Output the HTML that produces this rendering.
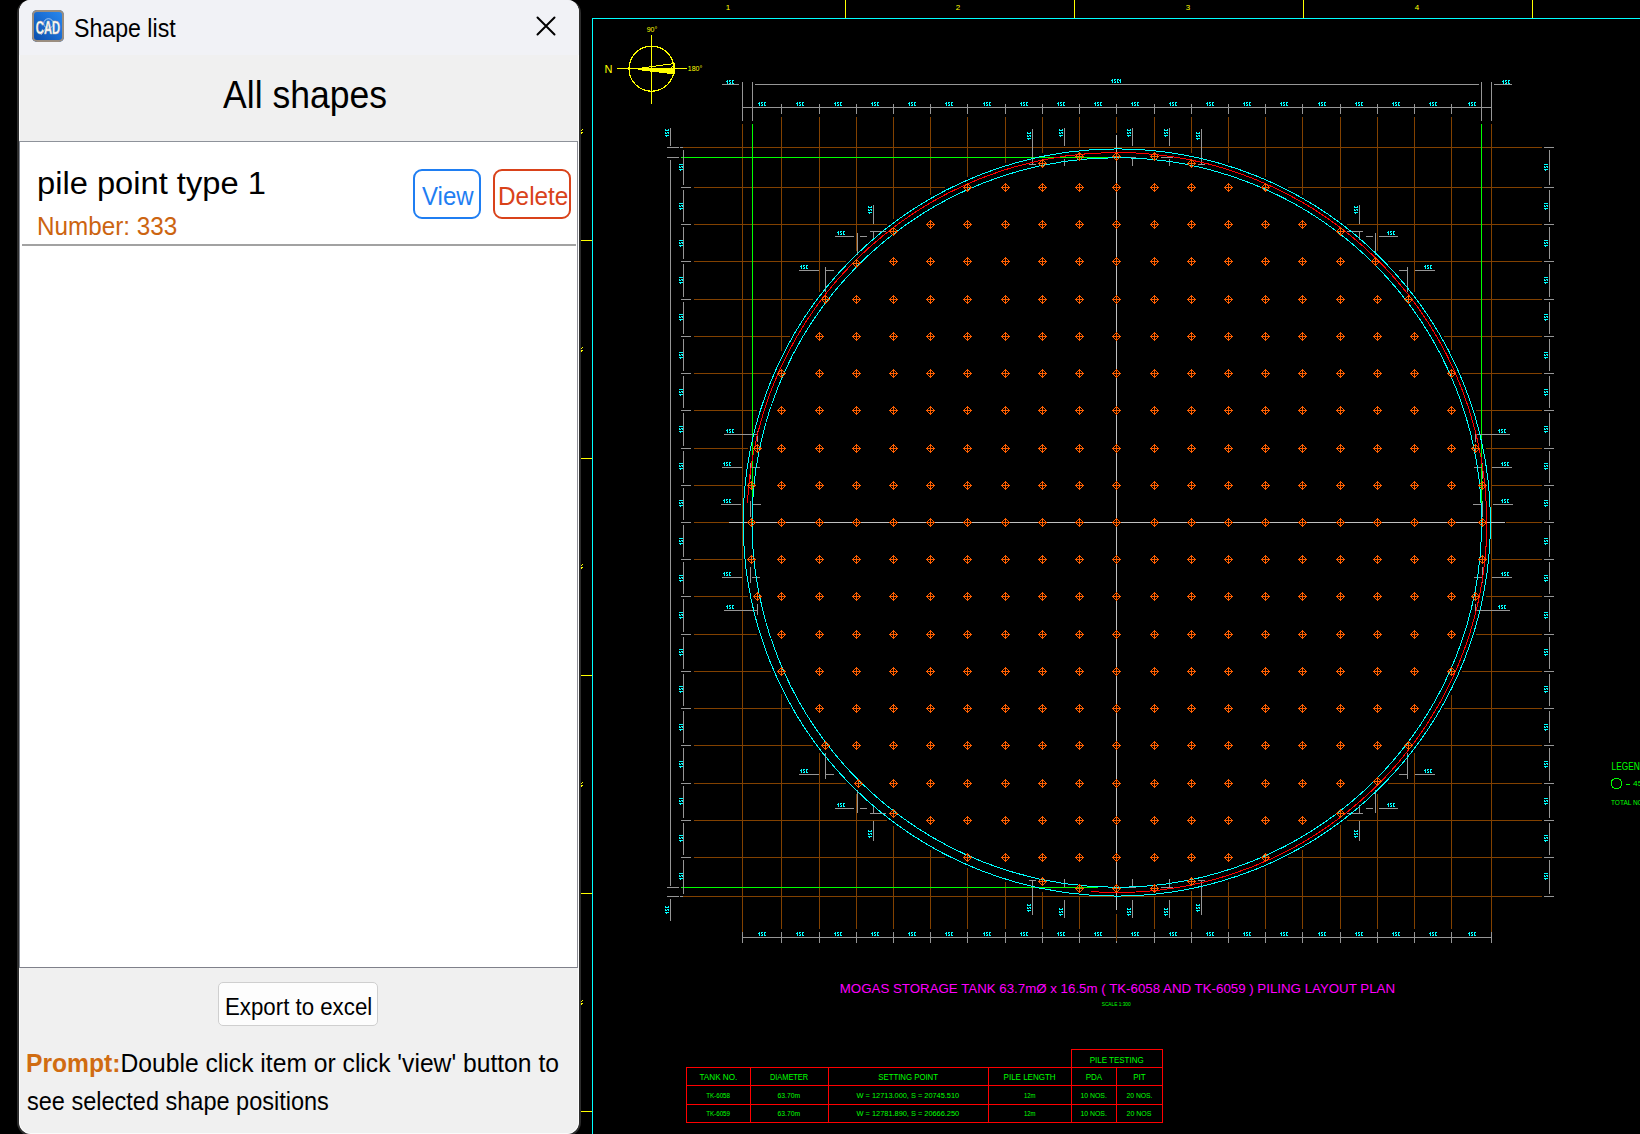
<!DOCTYPE html>
<html><head><meta charset="utf-8">
<style>
html,body{margin:0;padding:0;width:1640px;height:1134px;overflow:hidden;background:#000;}
body{position:relative;font-family:"Liberation Sans",sans-serif;}
#cad{position:absolute;left:0;top:0;}
#cad text{font-family:"Liberation Sans",sans-serif;}
.panel{position:absolute;left:17px;top:0px;width:560px;height:1134px;border:2px solid #2e2e2e;border-top:0;border-radius:13px 13px 14px 14px;background:#f0f0f0;overflow:hidden;}
.inner{position:absolute;left:0;top:0;right:0;bottom:0;border:1px solid #fbfbfb;border-top:0;border-radius:11px 11px 12px 12px;}
.titlebar{position:absolute;left:0;top:0;width:560px;height:55px;background:#f1f2f6;}
.icon{position:absolute;left:13px;top:9px;width:32px;height:32px;border-radius:5px;background:linear-gradient(45deg,#0a4aa6,#1d72d8 60%,#2b8cf2);box-shadow:inset 0 0 0 2px #9b8e80;}
.abs{position:absolute;white-space:pre;line-height:1;}
.list{position:absolute;left:0px;top:140px;width:557px;height:825px;background:#fff;border-left:1px solid #868b95;border-top:1px solid #8e929a;border-right:1px solid #8e8f96;border-bottom:1px solid #7f808a;}
.btn{position:absolute;box-sizing:border-box;border:2px solid;border-radius:9px;}
</style></head><body>
<svg id="cad" width="1640" height="1134" viewBox="0 0 1640 1134" shape-rendering="crispEdges">
<line x1="845.5" y1="0.0" x2="845.5" y2="19.0" stroke="#ffff00" stroke-width="1"/>
<line x1="1074.5" y1="0.0" x2="1074.5" y2="19.0" stroke="#ffff00" stroke-width="1"/>
<line x1="1303.5" y1="0.0" x2="1303.5" y2="19.0" stroke="#ffff00" stroke-width="1"/>
<line x1="1532.5" y1="0.0" x2="1532.5" y2="19.0" stroke="#ffff00" stroke-width="1"/>
<text x="728.0" y="10.0" fill="#ffff00" font-size="8" text-anchor="middle" >1</text>
<text x="958.0" y="10.0" fill="#ffff00" font-size="8" text-anchor="middle" >2</text>
<text x="1188.0" y="10.0" fill="#ffff00" font-size="8" text-anchor="middle" >3</text>
<text x="1417.0" y="10.0" fill="#ffff00" font-size="8" text-anchor="middle" >4</text>
<line x1="579.0" y1="240.5" x2="593.0" y2="240.5" stroke="#ffff00" stroke-width="1"/>
<path d="M580 129h1v1h-1zM582 129h1v1h-1zM580 130h1v1h-1zM581 130h1v1h-1zM580 132h1v1h-1zM581 132h1v1h-1zM582 132h1v1h-1zM581 133h1v1h-1z" fill="#ffff00"/>
<line x1="579.0" y1="458.5" x2="593.0" y2="458.5" stroke="#ffff00" stroke-width="1"/>
<path d="M580 347h1v1h-1zM582 347h1v1h-1zM580 348h1v1h-1zM581 348h1v1h-1zM580 350h1v1h-1zM581 350h1v1h-1zM582 350h1v1h-1zM581 351h1v1h-1z" fill="#ffff00"/>
<line x1="579.0" y1="675.5" x2="593.0" y2="675.5" stroke="#ffff00" stroke-width="1"/>
<path d="M580 564h1v1h-1zM582 564h1v1h-1zM580 565h1v1h-1zM581 565h1v1h-1zM580 567h1v1h-1zM581 567h1v1h-1zM582 567h1v1h-1zM581 568h1v1h-1z" fill="#ffff00"/>
<line x1="579.0" y1="893.5" x2="593.0" y2="893.5" stroke="#ffff00" stroke-width="1"/>
<path d="M580 782h1v1h-1zM582 782h1v1h-1zM580 783h1v1h-1zM581 783h1v1h-1zM580 785h1v1h-1zM581 785h1v1h-1zM582 785h1v1h-1zM581 786h1v1h-1z" fill="#ffff00"/>
<line x1="579.0" y1="1111.5" x2="593.0" y2="1111.5" stroke="#ffff00" stroke-width="1"/>
<path d="M580 1000h1v1h-1zM582 1000h1v1h-1zM580 1001h1v1h-1zM581 1001h1v1h-1zM580 1003h1v1h-1zM581 1003h1v1h-1zM582 1003h1v1h-1zM581 1004h1v1h-1z" fill="#ffff00"/>
<line x1="592.0" y1="18.5" x2="1641.0" y2="18.5" stroke="#00ffff" stroke-width="1"/>
<line x1="592.5" y1="18.0" x2="592.5" y2="1135.0" stroke="#00ffff" stroke-width="1"/>
<circle cx="651.5" cy="68.7" r="22.5" fill="none" stroke="#ffff00" stroke-width="1.2"/>
<line x1="651.5" y1="35.0" x2="651.5" y2="104.0" stroke="#ffff00" stroke-width="1"/>
<line x1="617.0" y1="68.5" x2="687.0" y2="68.5" stroke="#ffff00" stroke-width="1"/>
<polygon points="638,68 675,68 675,74.5 638,70" fill="#ffff00"/>
<polyline points="638,68.5 674.5,63.5 674.5,74" fill="none" stroke="#ffff00" stroke-width="1"/>
<polyline points="674.5,64 671,68.5 674.5,72" fill="none" stroke="#ffff00" stroke-width="1"/>
<text x="608.5" y="73.0" fill="#ffff00" font-size="11" text-anchor="middle" >N</text>
<text x="652.0" y="31.5" fill="#ffff00" font-size="7" text-anchor="middle" >90°</text>
<text x="695.0" y="71.0" fill="#ffff00" font-size="7" text-anchor="middle" >180°</text>
<line x1="781.5" y1="117.0" x2="781.5" y2="929.0" stroke="#824100" stroke-width="1"/>
<line x1="819.5" y1="117.0" x2="819.5" y2="929.0" stroke="#824100" stroke-width="1"/>
<line x1="856.5" y1="117.0" x2="856.5" y2="929.0" stroke="#824100" stroke-width="1"/>
<line x1="893.5" y1="117.0" x2="893.5" y2="929.0" stroke="#824100" stroke-width="1"/>
<line x1="930.5" y1="117.0" x2="930.5" y2="929.0" stroke="#824100" stroke-width="1"/>
<line x1="967.5" y1="117.0" x2="967.5" y2="929.0" stroke="#824100" stroke-width="1"/>
<line x1="1005.5" y1="117.0" x2="1005.5" y2="929.0" stroke="#824100" stroke-width="1"/>
<line x1="1042.5" y1="117.0" x2="1042.5" y2="929.0" stroke="#824100" stroke-width="1"/>
<line x1="1079.5" y1="117.0" x2="1079.5" y2="929.0" stroke="#824100" stroke-width="1"/>
<line x1="1154.5" y1="117.0" x2="1154.5" y2="929.0" stroke="#824100" stroke-width="1"/>
<line x1="1191.5" y1="117.0" x2="1191.5" y2="929.0" stroke="#824100" stroke-width="1"/>
<line x1="1228.5" y1="117.0" x2="1228.5" y2="929.0" stroke="#824100" stroke-width="1"/>
<line x1="1265.5" y1="117.0" x2="1265.5" y2="929.0" stroke="#824100" stroke-width="1"/>
<line x1="1302.5" y1="117.0" x2="1302.5" y2="929.0" stroke="#824100" stroke-width="1"/>
<line x1="1340.5" y1="117.0" x2="1340.5" y2="929.0" stroke="#824100" stroke-width="1"/>
<line x1="1377.5" y1="117.0" x2="1377.5" y2="929.0" stroke="#824100" stroke-width="1"/>
<line x1="1414.5" y1="117.0" x2="1414.5" y2="929.0" stroke="#824100" stroke-width="1"/>
<line x1="1451.5" y1="117.0" x2="1451.5" y2="929.0" stroke="#824100" stroke-width="1"/>
<line x1="694.0" y1="187.5" x2="1542.0" y2="187.5" stroke="#824100" stroke-width="1"/>
<line x1="694.0" y1="224.5" x2="1542.0" y2="224.5" stroke="#824100" stroke-width="1"/>
<line x1="694.0" y1="261.5" x2="1542.0" y2="261.5" stroke="#824100" stroke-width="1"/>
<line x1="694.0" y1="299.5" x2="1542.0" y2="299.5" stroke="#824100" stroke-width="1"/>
<line x1="694.0" y1="336.5" x2="1542.0" y2="336.5" stroke="#824100" stroke-width="1"/>
<line x1="694.0" y1="373.5" x2="1542.0" y2="373.5" stroke="#824100" stroke-width="1"/>
<line x1="694.0" y1="410.5" x2="1542.0" y2="410.5" stroke="#824100" stroke-width="1"/>
<line x1="694.0" y1="448.5" x2="1542.0" y2="448.5" stroke="#824100" stroke-width="1"/>
<line x1="694.0" y1="485.5" x2="1542.0" y2="485.5" stroke="#824100" stroke-width="1"/>
<line x1="694.0" y1="559.5" x2="1542.0" y2="559.5" stroke="#824100" stroke-width="1"/>
<line x1="694.0" y1="596.5" x2="1542.0" y2="596.5" stroke="#824100" stroke-width="1"/>
<line x1="694.0" y1="634.5" x2="1542.0" y2="634.5" stroke="#824100" stroke-width="1"/>
<line x1="694.0" y1="671.5" x2="1542.0" y2="671.5" stroke="#824100" stroke-width="1"/>
<line x1="694.0" y1="708.5" x2="1542.0" y2="708.5" stroke="#824100" stroke-width="1"/>
<line x1="694.0" y1="745.5" x2="1542.0" y2="745.5" stroke="#824100" stroke-width="1"/>
<line x1="694.0" y1="783.5" x2="1542.0" y2="783.5" stroke="#824100" stroke-width="1"/>
<line x1="694.0" y1="820.5" x2="1542.0" y2="820.5" stroke="#824100" stroke-width="1"/>
<line x1="694.0" y1="857.5" x2="1542.0" y2="857.5" stroke="#824100" stroke-width="1"/>
<circle cx="1116.8" cy="522.5" r="376.5" fill="#000"/>
<line x1="742.5" y1="124.0" x2="742.5" y2="941.0" stroke="#824100" stroke-width="1"/>
<line x1="1491.5" y1="124.0" x2="1491.5" y2="941.0" stroke="#824100" stroke-width="1"/>
<line x1="682.0" y1="147.5" x2="1542.0" y2="147.5" stroke="#824100" stroke-width="1"/>
<line x1="681.0" y1="896.5" x2="1542.0" y2="896.5" stroke="#824100" stroke-width="1"/>
<line x1="681.0" y1="157.5" x2="1111.0" y2="157.5" stroke="#00ff00" stroke-width="1"/>
<line x1="681.0" y1="887.5" x2="1098.0" y2="887.5" stroke="#00ff00" stroke-width="1"/>
<line x1="752.5" y1="124.0" x2="752.5" y2="523.0" stroke="#00ff00" stroke-width="1"/>
<line x1="1481.5" y1="124.0" x2="1481.5" y2="523.0" stroke="#00ff00" stroke-width="1"/>
<line x1="755.0" y1="84.5" x2="1479.0" y2="84.5" stroke="#969696" stroke-width="1"/>
<line x1="722.0" y1="84.5" x2="739.0" y2="84.5" stroke="#969696" stroke-width="1"/>
<line x1="1494.0" y1="84.5" x2="1512.0" y2="84.5" stroke="#969696" stroke-width="1"/>
<line x1="742.5" y1="82.0" x2="742.5" y2="121.0" stroke="#969696" stroke-width="1"/>
<line x1="752.5" y1="82.0" x2="752.5" y2="121.0" stroke="#969696" stroke-width="1"/>
<line x1="1481.5" y1="82.0" x2="1481.5" y2="121.0" stroke="#969696" stroke-width="1"/>
<line x1="1491.5" y1="82.0" x2="1491.5" y2="121.0" stroke="#969696" stroke-width="1"/>
<path d="M727 80h1v1h-1zM729 80h1v1h-1zM730 80h1v1h-1zM732 80h1v1h-1zM733 80h1v1h-1zM726 81h1v1h-1zM727 81h1v1h-1zM729 81h1v1h-1zM732 81h1v1h-1zM727 82h1v1h-1zM730 82h1v1h-1zM732 82h1v1h-1zM727 83h1v1h-1zM729 83h1v1h-1zM730 83h1v1h-1zM732 83h1v1h-1zM733 83h1v1h-1z" fill="#00ffff"/>
<path d="M1503 80h1v1h-1zM1505 80h1v1h-1zM1506 80h1v1h-1zM1508 80h1v1h-1zM1509 80h1v1h-1zM1502 81h1v1h-1zM1503 81h1v1h-1zM1505 81h1v1h-1zM1508 81h1v1h-1zM1503 82h1v1h-1zM1506 82h1v1h-1zM1508 82h1v1h-1zM1503 83h1v1h-1zM1505 83h1v1h-1zM1506 83h1v1h-1zM1508 83h1v1h-1zM1509 83h1v1h-1z" fill="#00ffff"/>
<path d="M1112 79h1v1h-1zM1114 79h1v1h-1zM1115 79h1v1h-1zM1117 79h1v1h-1zM1118 79h1v1h-1zM1120 79h1v1h-1zM1111 80h1v1h-1zM1112 80h1v1h-1zM1114 80h1v1h-1zM1117 80h1v1h-1zM1119 80h1v1h-1zM1120 80h1v1h-1zM1112 81h1v1h-1zM1115 81h1v1h-1zM1117 81h1v1h-1zM1120 81h1v1h-1zM1112 82h1v1h-1zM1114 82h1v1h-1zM1115 82h1v1h-1zM1117 82h1v1h-1zM1118 82h1v1h-1zM1120 82h1v1h-1z" fill="#00ffff"/>
<line x1="742.0" y1="107.5" x2="1492.0" y2="107.5" stroke="#969696" stroke-width="1"/>
<line x1="781.5" y1="104.0" x2="781.5" y2="114.0" stroke="#969696" stroke-width="1"/>
<line x1="819.5" y1="104.0" x2="819.5" y2="114.0" stroke="#969696" stroke-width="1"/>
<line x1="856.5" y1="104.0" x2="856.5" y2="114.0" stroke="#969696" stroke-width="1"/>
<line x1="893.5" y1="104.0" x2="893.5" y2="114.0" stroke="#969696" stroke-width="1"/>
<line x1="930.5" y1="104.0" x2="930.5" y2="114.0" stroke="#969696" stroke-width="1"/>
<line x1="967.5" y1="104.0" x2="967.5" y2="114.0" stroke="#969696" stroke-width="1"/>
<line x1="1005.5" y1="104.0" x2="1005.5" y2="114.0" stroke="#969696" stroke-width="1"/>
<line x1="1042.5" y1="104.0" x2="1042.5" y2="114.0" stroke="#969696" stroke-width="1"/>
<line x1="1079.5" y1="104.0" x2="1079.5" y2="114.0" stroke="#969696" stroke-width="1"/>
<line x1="1116.5" y1="104.0" x2="1116.5" y2="114.0" stroke="#969696" stroke-width="1"/>
<line x1="1154.5" y1="104.0" x2="1154.5" y2="114.0" stroke="#969696" stroke-width="1"/>
<line x1="1191.5" y1="104.0" x2="1191.5" y2="114.0" stroke="#969696" stroke-width="1"/>
<line x1="1228.5" y1="104.0" x2="1228.5" y2="114.0" stroke="#969696" stroke-width="1"/>
<line x1="1265.5" y1="104.0" x2="1265.5" y2="114.0" stroke="#969696" stroke-width="1"/>
<line x1="1302.5" y1="104.0" x2="1302.5" y2="114.0" stroke="#969696" stroke-width="1"/>
<line x1="1340.5" y1="104.0" x2="1340.5" y2="114.0" stroke="#969696" stroke-width="1"/>
<line x1="1377.5" y1="104.0" x2="1377.5" y2="114.0" stroke="#969696" stroke-width="1"/>
<line x1="1414.5" y1="104.0" x2="1414.5" y2="114.0" stroke="#969696" stroke-width="1"/>
<line x1="1451.5" y1="104.0" x2="1451.5" y2="114.0" stroke="#969696" stroke-width="1"/>
<path d="M759 102h1v1h-1zM761 102h1v1h-1zM762 102h1v1h-1zM764 102h1v1h-1zM765 102h1v1h-1zM758 103h1v1h-1zM759 103h1v1h-1zM761 103h1v1h-1zM764 103h1v1h-1zM759 104h1v1h-1zM762 104h1v1h-1zM764 104h1v1h-1zM759 105h1v1h-1zM761 105h1v1h-1zM762 105h1v1h-1zM764 105h1v1h-1zM765 105h1v1h-1z" fill="#00ffff"/>
<path d="M797 102h1v1h-1zM799 102h1v1h-1zM800 102h1v1h-1zM802 102h1v1h-1zM803 102h1v1h-1zM796 103h1v1h-1zM797 103h1v1h-1zM799 103h1v1h-1zM802 103h1v1h-1zM797 104h1v1h-1zM800 104h1v1h-1zM802 104h1v1h-1zM797 105h1v1h-1zM799 105h1v1h-1zM800 105h1v1h-1zM802 105h1v1h-1zM803 105h1v1h-1z" fill="#00ffff"/>
<path d="M835 102h1v1h-1zM837 102h1v1h-1zM838 102h1v1h-1zM840 102h1v1h-1zM841 102h1v1h-1zM834 103h1v1h-1zM835 103h1v1h-1zM837 103h1v1h-1zM840 103h1v1h-1zM835 104h1v1h-1zM838 104h1v1h-1zM840 104h1v1h-1zM835 105h1v1h-1zM837 105h1v1h-1zM838 105h1v1h-1zM840 105h1v1h-1zM841 105h1v1h-1z" fill="#00ffff"/>
<path d="M872 102h1v1h-1zM874 102h1v1h-1zM875 102h1v1h-1zM877 102h1v1h-1zM878 102h1v1h-1zM871 103h1v1h-1zM872 103h1v1h-1zM874 103h1v1h-1zM877 103h1v1h-1zM872 104h1v1h-1zM875 104h1v1h-1zM877 104h1v1h-1zM872 105h1v1h-1zM874 105h1v1h-1zM875 105h1v1h-1zM877 105h1v1h-1zM878 105h1v1h-1z" fill="#00ffff"/>
<path d="M909 102h1v1h-1zM911 102h1v1h-1zM912 102h1v1h-1zM914 102h1v1h-1zM915 102h1v1h-1zM908 103h1v1h-1zM909 103h1v1h-1zM911 103h1v1h-1zM914 103h1v1h-1zM909 104h1v1h-1zM912 104h1v1h-1zM914 104h1v1h-1zM909 105h1v1h-1zM911 105h1v1h-1zM912 105h1v1h-1zM914 105h1v1h-1zM915 105h1v1h-1z" fill="#00ffff"/>
<path d="M946 102h1v1h-1zM948 102h1v1h-1zM949 102h1v1h-1zM951 102h1v1h-1zM952 102h1v1h-1zM945 103h1v1h-1zM946 103h1v1h-1zM948 103h1v1h-1zM951 103h1v1h-1zM946 104h1v1h-1zM949 104h1v1h-1zM951 104h1v1h-1zM946 105h1v1h-1zM948 105h1v1h-1zM949 105h1v1h-1zM951 105h1v1h-1zM952 105h1v1h-1z" fill="#00ffff"/>
<path d="M984 102h1v1h-1zM986 102h1v1h-1zM987 102h1v1h-1zM989 102h1v1h-1zM990 102h1v1h-1zM983 103h1v1h-1zM984 103h1v1h-1zM986 103h1v1h-1zM989 103h1v1h-1zM984 104h1v1h-1zM987 104h1v1h-1zM989 104h1v1h-1zM984 105h1v1h-1zM986 105h1v1h-1zM987 105h1v1h-1zM989 105h1v1h-1zM990 105h1v1h-1z" fill="#00ffff"/>
<path d="M1021 102h1v1h-1zM1023 102h1v1h-1zM1024 102h1v1h-1zM1026 102h1v1h-1zM1027 102h1v1h-1zM1020 103h1v1h-1zM1021 103h1v1h-1zM1023 103h1v1h-1zM1026 103h1v1h-1zM1021 104h1v1h-1zM1024 104h1v1h-1zM1026 104h1v1h-1zM1021 105h1v1h-1zM1023 105h1v1h-1zM1024 105h1v1h-1zM1026 105h1v1h-1zM1027 105h1v1h-1z" fill="#00ffff"/>
<path d="M1058 102h1v1h-1zM1060 102h1v1h-1zM1061 102h1v1h-1zM1063 102h1v1h-1zM1064 102h1v1h-1zM1057 103h1v1h-1zM1058 103h1v1h-1zM1060 103h1v1h-1zM1063 103h1v1h-1zM1058 104h1v1h-1zM1061 104h1v1h-1zM1063 104h1v1h-1zM1058 105h1v1h-1zM1060 105h1v1h-1zM1061 105h1v1h-1zM1063 105h1v1h-1zM1064 105h1v1h-1z" fill="#00ffff"/>
<path d="M1095 102h1v1h-1zM1097 102h1v1h-1zM1098 102h1v1h-1zM1100 102h1v1h-1zM1101 102h1v1h-1zM1094 103h1v1h-1zM1095 103h1v1h-1zM1097 103h1v1h-1zM1100 103h1v1h-1zM1095 104h1v1h-1zM1098 104h1v1h-1zM1100 104h1v1h-1zM1095 105h1v1h-1zM1097 105h1v1h-1zM1098 105h1v1h-1zM1100 105h1v1h-1zM1101 105h1v1h-1z" fill="#00ffff"/>
<path d="M1132 102h1v1h-1zM1134 102h1v1h-1zM1135 102h1v1h-1zM1137 102h1v1h-1zM1138 102h1v1h-1zM1131 103h1v1h-1zM1132 103h1v1h-1zM1134 103h1v1h-1zM1137 103h1v1h-1zM1132 104h1v1h-1zM1135 104h1v1h-1zM1137 104h1v1h-1zM1132 105h1v1h-1zM1134 105h1v1h-1zM1135 105h1v1h-1zM1137 105h1v1h-1zM1138 105h1v1h-1z" fill="#00ffff"/>
<path d="M1170 102h1v1h-1zM1172 102h1v1h-1zM1173 102h1v1h-1zM1175 102h1v1h-1zM1176 102h1v1h-1zM1169 103h1v1h-1zM1170 103h1v1h-1zM1172 103h1v1h-1zM1175 103h1v1h-1zM1170 104h1v1h-1zM1173 104h1v1h-1zM1175 104h1v1h-1zM1170 105h1v1h-1zM1172 105h1v1h-1zM1173 105h1v1h-1zM1175 105h1v1h-1zM1176 105h1v1h-1z" fill="#00ffff"/>
<path d="M1207 102h1v1h-1zM1209 102h1v1h-1zM1210 102h1v1h-1zM1212 102h1v1h-1zM1213 102h1v1h-1zM1206 103h1v1h-1zM1207 103h1v1h-1zM1209 103h1v1h-1zM1212 103h1v1h-1zM1207 104h1v1h-1zM1210 104h1v1h-1zM1212 104h1v1h-1zM1207 105h1v1h-1zM1209 105h1v1h-1zM1210 105h1v1h-1zM1212 105h1v1h-1zM1213 105h1v1h-1z" fill="#00ffff"/>
<path d="M1244 102h1v1h-1zM1246 102h1v1h-1zM1247 102h1v1h-1zM1249 102h1v1h-1zM1250 102h1v1h-1zM1243 103h1v1h-1zM1244 103h1v1h-1zM1246 103h1v1h-1zM1249 103h1v1h-1zM1244 104h1v1h-1zM1247 104h1v1h-1zM1249 104h1v1h-1zM1244 105h1v1h-1zM1246 105h1v1h-1zM1247 105h1v1h-1zM1249 105h1v1h-1zM1250 105h1v1h-1z" fill="#00ffff"/>
<path d="M1281 102h1v1h-1zM1283 102h1v1h-1zM1284 102h1v1h-1zM1286 102h1v1h-1zM1287 102h1v1h-1zM1280 103h1v1h-1zM1281 103h1v1h-1zM1283 103h1v1h-1zM1286 103h1v1h-1zM1281 104h1v1h-1zM1284 104h1v1h-1zM1286 104h1v1h-1zM1281 105h1v1h-1zM1283 105h1v1h-1zM1284 105h1v1h-1zM1286 105h1v1h-1zM1287 105h1v1h-1z" fill="#00ffff"/>
<path d="M1319 102h1v1h-1zM1321 102h1v1h-1zM1322 102h1v1h-1zM1324 102h1v1h-1zM1325 102h1v1h-1zM1318 103h1v1h-1zM1319 103h1v1h-1zM1321 103h1v1h-1zM1324 103h1v1h-1zM1319 104h1v1h-1zM1322 104h1v1h-1zM1324 104h1v1h-1zM1319 105h1v1h-1zM1321 105h1v1h-1zM1322 105h1v1h-1zM1324 105h1v1h-1zM1325 105h1v1h-1z" fill="#00ffff"/>
<path d="M1356 102h1v1h-1zM1358 102h1v1h-1zM1359 102h1v1h-1zM1361 102h1v1h-1zM1362 102h1v1h-1zM1355 103h1v1h-1zM1356 103h1v1h-1zM1358 103h1v1h-1zM1361 103h1v1h-1zM1356 104h1v1h-1zM1359 104h1v1h-1zM1361 104h1v1h-1zM1356 105h1v1h-1zM1358 105h1v1h-1zM1359 105h1v1h-1zM1361 105h1v1h-1zM1362 105h1v1h-1z" fill="#00ffff"/>
<path d="M1393 102h1v1h-1zM1395 102h1v1h-1zM1396 102h1v1h-1zM1398 102h1v1h-1zM1399 102h1v1h-1zM1392 103h1v1h-1zM1393 103h1v1h-1zM1395 103h1v1h-1zM1398 103h1v1h-1zM1393 104h1v1h-1zM1396 104h1v1h-1zM1398 104h1v1h-1zM1393 105h1v1h-1zM1395 105h1v1h-1zM1396 105h1v1h-1zM1398 105h1v1h-1zM1399 105h1v1h-1z" fill="#00ffff"/>
<path d="M1430 102h1v1h-1zM1432 102h1v1h-1zM1433 102h1v1h-1zM1435 102h1v1h-1zM1436 102h1v1h-1zM1429 103h1v1h-1zM1430 103h1v1h-1zM1432 103h1v1h-1zM1435 103h1v1h-1zM1430 104h1v1h-1zM1433 104h1v1h-1zM1435 104h1v1h-1zM1430 105h1v1h-1zM1432 105h1v1h-1zM1433 105h1v1h-1zM1435 105h1v1h-1zM1436 105h1v1h-1z" fill="#00ffff"/>
<path d="M1469 102h1v1h-1zM1471 102h1v1h-1zM1472 102h1v1h-1zM1474 102h1v1h-1zM1475 102h1v1h-1zM1468 103h1v1h-1zM1469 103h1v1h-1zM1471 103h1v1h-1zM1474 103h1v1h-1zM1469 104h1v1h-1zM1472 104h1v1h-1zM1474 104h1v1h-1zM1469 105h1v1h-1zM1471 105h1v1h-1zM1472 105h1v1h-1zM1474 105h1v1h-1zM1475 105h1v1h-1z" fill="#00ffff"/>
<line x1="742.0" y1="937.5" x2="1492.0" y2="937.5" stroke="#969696" stroke-width="1"/>
<line x1="742.5" y1="932.0" x2="742.5" y2="943.0" stroke="#969696" stroke-width="1"/>
<line x1="781.5" y1="932.0" x2="781.5" y2="943.0" stroke="#969696" stroke-width="1"/>
<line x1="819.5" y1="932.0" x2="819.5" y2="943.0" stroke="#969696" stroke-width="1"/>
<line x1="856.5" y1="932.0" x2="856.5" y2="943.0" stroke="#969696" stroke-width="1"/>
<line x1="893.5" y1="932.0" x2="893.5" y2="943.0" stroke="#969696" stroke-width="1"/>
<line x1="930.5" y1="932.0" x2="930.5" y2="943.0" stroke="#969696" stroke-width="1"/>
<line x1="967.5" y1="932.0" x2="967.5" y2="943.0" stroke="#969696" stroke-width="1"/>
<line x1="1005.5" y1="932.0" x2="1005.5" y2="943.0" stroke="#969696" stroke-width="1"/>
<line x1="1042.5" y1="932.0" x2="1042.5" y2="943.0" stroke="#969696" stroke-width="1"/>
<line x1="1079.5" y1="932.0" x2="1079.5" y2="943.0" stroke="#969696" stroke-width="1"/>
<line x1="1116.5" y1="932.0" x2="1116.5" y2="943.0" stroke="#969696" stroke-width="1"/>
<line x1="1154.5" y1="932.0" x2="1154.5" y2="943.0" stroke="#969696" stroke-width="1"/>
<line x1="1191.5" y1="932.0" x2="1191.5" y2="943.0" stroke="#969696" stroke-width="1"/>
<line x1="1228.5" y1="932.0" x2="1228.5" y2="943.0" stroke="#969696" stroke-width="1"/>
<line x1="1265.5" y1="932.0" x2="1265.5" y2="943.0" stroke="#969696" stroke-width="1"/>
<line x1="1302.5" y1="932.0" x2="1302.5" y2="943.0" stroke="#969696" stroke-width="1"/>
<line x1="1340.5" y1="932.0" x2="1340.5" y2="943.0" stroke="#969696" stroke-width="1"/>
<line x1="1377.5" y1="932.0" x2="1377.5" y2="943.0" stroke="#969696" stroke-width="1"/>
<line x1="1414.5" y1="932.0" x2="1414.5" y2="943.0" stroke="#969696" stroke-width="1"/>
<line x1="1451.5" y1="932.0" x2="1451.5" y2="943.0" stroke="#969696" stroke-width="1"/>
<line x1="1491.5" y1="932.0" x2="1491.5" y2="943.0" stroke="#969696" stroke-width="1"/>
<path d="M759 932h1v1h-1zM761 932h1v1h-1zM762 932h1v1h-1zM764 932h1v1h-1zM765 932h1v1h-1zM758 933h1v1h-1zM759 933h1v1h-1zM761 933h1v1h-1zM764 933h1v1h-1zM759 934h1v1h-1zM762 934h1v1h-1zM764 934h1v1h-1zM759 935h1v1h-1zM761 935h1v1h-1zM762 935h1v1h-1zM764 935h1v1h-1zM765 935h1v1h-1z" fill="#00ffff"/>
<path d="M797 932h1v1h-1zM799 932h1v1h-1zM800 932h1v1h-1zM802 932h1v1h-1zM803 932h1v1h-1zM796 933h1v1h-1zM797 933h1v1h-1zM799 933h1v1h-1zM802 933h1v1h-1zM797 934h1v1h-1zM800 934h1v1h-1zM802 934h1v1h-1zM797 935h1v1h-1zM799 935h1v1h-1zM800 935h1v1h-1zM802 935h1v1h-1zM803 935h1v1h-1z" fill="#00ffff"/>
<path d="M835 932h1v1h-1zM837 932h1v1h-1zM838 932h1v1h-1zM840 932h1v1h-1zM841 932h1v1h-1zM834 933h1v1h-1zM835 933h1v1h-1zM837 933h1v1h-1zM840 933h1v1h-1zM835 934h1v1h-1zM838 934h1v1h-1zM840 934h1v1h-1zM835 935h1v1h-1zM837 935h1v1h-1zM838 935h1v1h-1zM840 935h1v1h-1zM841 935h1v1h-1z" fill="#00ffff"/>
<path d="M872 932h1v1h-1zM874 932h1v1h-1zM875 932h1v1h-1zM877 932h1v1h-1zM878 932h1v1h-1zM871 933h1v1h-1zM872 933h1v1h-1zM874 933h1v1h-1zM877 933h1v1h-1zM872 934h1v1h-1zM875 934h1v1h-1zM877 934h1v1h-1zM872 935h1v1h-1zM874 935h1v1h-1zM875 935h1v1h-1zM877 935h1v1h-1zM878 935h1v1h-1z" fill="#00ffff"/>
<path d="M909 932h1v1h-1zM911 932h1v1h-1zM912 932h1v1h-1zM914 932h1v1h-1zM915 932h1v1h-1zM908 933h1v1h-1zM909 933h1v1h-1zM911 933h1v1h-1zM914 933h1v1h-1zM909 934h1v1h-1zM912 934h1v1h-1zM914 934h1v1h-1zM909 935h1v1h-1zM911 935h1v1h-1zM912 935h1v1h-1zM914 935h1v1h-1zM915 935h1v1h-1z" fill="#00ffff"/>
<path d="M946 932h1v1h-1zM948 932h1v1h-1zM949 932h1v1h-1zM951 932h1v1h-1zM952 932h1v1h-1zM945 933h1v1h-1zM946 933h1v1h-1zM948 933h1v1h-1zM951 933h1v1h-1zM946 934h1v1h-1zM949 934h1v1h-1zM951 934h1v1h-1zM946 935h1v1h-1zM948 935h1v1h-1zM949 935h1v1h-1zM951 935h1v1h-1zM952 935h1v1h-1z" fill="#00ffff"/>
<path d="M984 932h1v1h-1zM986 932h1v1h-1zM987 932h1v1h-1zM989 932h1v1h-1zM990 932h1v1h-1zM983 933h1v1h-1zM984 933h1v1h-1zM986 933h1v1h-1zM989 933h1v1h-1zM984 934h1v1h-1zM987 934h1v1h-1zM989 934h1v1h-1zM984 935h1v1h-1zM986 935h1v1h-1zM987 935h1v1h-1zM989 935h1v1h-1zM990 935h1v1h-1z" fill="#00ffff"/>
<path d="M1021 932h1v1h-1zM1023 932h1v1h-1zM1024 932h1v1h-1zM1026 932h1v1h-1zM1027 932h1v1h-1zM1020 933h1v1h-1zM1021 933h1v1h-1zM1023 933h1v1h-1zM1026 933h1v1h-1zM1021 934h1v1h-1zM1024 934h1v1h-1zM1026 934h1v1h-1zM1021 935h1v1h-1zM1023 935h1v1h-1zM1024 935h1v1h-1zM1026 935h1v1h-1zM1027 935h1v1h-1z" fill="#00ffff"/>
<path d="M1058 932h1v1h-1zM1060 932h1v1h-1zM1061 932h1v1h-1zM1063 932h1v1h-1zM1064 932h1v1h-1zM1057 933h1v1h-1zM1058 933h1v1h-1zM1060 933h1v1h-1zM1063 933h1v1h-1zM1058 934h1v1h-1zM1061 934h1v1h-1zM1063 934h1v1h-1zM1058 935h1v1h-1zM1060 935h1v1h-1zM1061 935h1v1h-1zM1063 935h1v1h-1zM1064 935h1v1h-1z" fill="#00ffff"/>
<path d="M1095 932h1v1h-1zM1097 932h1v1h-1zM1098 932h1v1h-1zM1100 932h1v1h-1zM1101 932h1v1h-1zM1094 933h1v1h-1zM1095 933h1v1h-1zM1097 933h1v1h-1zM1100 933h1v1h-1zM1095 934h1v1h-1zM1098 934h1v1h-1zM1100 934h1v1h-1zM1095 935h1v1h-1zM1097 935h1v1h-1zM1098 935h1v1h-1zM1100 935h1v1h-1zM1101 935h1v1h-1z" fill="#00ffff"/>
<path d="M1132 932h1v1h-1zM1134 932h1v1h-1zM1135 932h1v1h-1zM1137 932h1v1h-1zM1138 932h1v1h-1zM1131 933h1v1h-1zM1132 933h1v1h-1zM1134 933h1v1h-1zM1137 933h1v1h-1zM1132 934h1v1h-1zM1135 934h1v1h-1zM1137 934h1v1h-1zM1132 935h1v1h-1zM1134 935h1v1h-1zM1135 935h1v1h-1zM1137 935h1v1h-1zM1138 935h1v1h-1z" fill="#00ffff"/>
<path d="M1170 932h1v1h-1zM1172 932h1v1h-1zM1173 932h1v1h-1zM1175 932h1v1h-1zM1176 932h1v1h-1zM1169 933h1v1h-1zM1170 933h1v1h-1zM1172 933h1v1h-1zM1175 933h1v1h-1zM1170 934h1v1h-1zM1173 934h1v1h-1zM1175 934h1v1h-1zM1170 935h1v1h-1zM1172 935h1v1h-1zM1173 935h1v1h-1zM1175 935h1v1h-1zM1176 935h1v1h-1z" fill="#00ffff"/>
<path d="M1207 932h1v1h-1zM1209 932h1v1h-1zM1210 932h1v1h-1zM1212 932h1v1h-1zM1213 932h1v1h-1zM1206 933h1v1h-1zM1207 933h1v1h-1zM1209 933h1v1h-1zM1212 933h1v1h-1zM1207 934h1v1h-1zM1210 934h1v1h-1zM1212 934h1v1h-1zM1207 935h1v1h-1zM1209 935h1v1h-1zM1210 935h1v1h-1zM1212 935h1v1h-1zM1213 935h1v1h-1z" fill="#00ffff"/>
<path d="M1244 932h1v1h-1zM1246 932h1v1h-1zM1247 932h1v1h-1zM1249 932h1v1h-1zM1250 932h1v1h-1zM1243 933h1v1h-1zM1244 933h1v1h-1zM1246 933h1v1h-1zM1249 933h1v1h-1zM1244 934h1v1h-1zM1247 934h1v1h-1zM1249 934h1v1h-1zM1244 935h1v1h-1zM1246 935h1v1h-1zM1247 935h1v1h-1zM1249 935h1v1h-1zM1250 935h1v1h-1z" fill="#00ffff"/>
<path d="M1281 932h1v1h-1zM1283 932h1v1h-1zM1284 932h1v1h-1zM1286 932h1v1h-1zM1287 932h1v1h-1zM1280 933h1v1h-1zM1281 933h1v1h-1zM1283 933h1v1h-1zM1286 933h1v1h-1zM1281 934h1v1h-1zM1284 934h1v1h-1zM1286 934h1v1h-1zM1281 935h1v1h-1zM1283 935h1v1h-1zM1284 935h1v1h-1zM1286 935h1v1h-1zM1287 935h1v1h-1z" fill="#00ffff"/>
<path d="M1319 932h1v1h-1zM1321 932h1v1h-1zM1322 932h1v1h-1zM1324 932h1v1h-1zM1325 932h1v1h-1zM1318 933h1v1h-1zM1319 933h1v1h-1zM1321 933h1v1h-1zM1324 933h1v1h-1zM1319 934h1v1h-1zM1322 934h1v1h-1zM1324 934h1v1h-1zM1319 935h1v1h-1zM1321 935h1v1h-1zM1322 935h1v1h-1zM1324 935h1v1h-1zM1325 935h1v1h-1z" fill="#00ffff"/>
<path d="M1356 932h1v1h-1zM1358 932h1v1h-1zM1359 932h1v1h-1zM1361 932h1v1h-1zM1362 932h1v1h-1zM1355 933h1v1h-1zM1356 933h1v1h-1zM1358 933h1v1h-1zM1361 933h1v1h-1zM1356 934h1v1h-1zM1359 934h1v1h-1zM1361 934h1v1h-1zM1356 935h1v1h-1zM1358 935h1v1h-1zM1359 935h1v1h-1zM1361 935h1v1h-1zM1362 935h1v1h-1z" fill="#00ffff"/>
<path d="M1393 932h1v1h-1zM1395 932h1v1h-1zM1396 932h1v1h-1zM1398 932h1v1h-1zM1399 932h1v1h-1zM1392 933h1v1h-1zM1393 933h1v1h-1zM1395 933h1v1h-1zM1398 933h1v1h-1zM1393 934h1v1h-1zM1396 934h1v1h-1zM1398 934h1v1h-1zM1393 935h1v1h-1zM1395 935h1v1h-1zM1396 935h1v1h-1zM1398 935h1v1h-1zM1399 935h1v1h-1z" fill="#00ffff"/>
<path d="M1430 932h1v1h-1zM1432 932h1v1h-1zM1433 932h1v1h-1zM1435 932h1v1h-1zM1436 932h1v1h-1zM1429 933h1v1h-1zM1430 933h1v1h-1zM1432 933h1v1h-1zM1435 933h1v1h-1zM1430 934h1v1h-1zM1433 934h1v1h-1zM1435 934h1v1h-1zM1430 935h1v1h-1zM1432 935h1v1h-1zM1433 935h1v1h-1zM1435 935h1v1h-1zM1436 935h1v1h-1z" fill="#00ffff"/>
<path d="M1469 932h1v1h-1zM1471 932h1v1h-1zM1472 932h1v1h-1zM1474 932h1v1h-1zM1475 932h1v1h-1zM1468 933h1v1h-1zM1469 933h1v1h-1zM1471 933h1v1h-1zM1474 933h1v1h-1zM1469 934h1v1h-1zM1472 934h1v1h-1zM1474 934h1v1h-1zM1469 935h1v1h-1zM1471 935h1v1h-1zM1472 935h1v1h-1zM1474 935h1v1h-1zM1475 935h1v1h-1z" fill="#00ffff"/>
<line x1="670.5" y1="128.0" x2="670.5" y2="146.0" stroke="#969696" stroke-width="1"/>
<line x1="670.5" y1="160.0" x2="670.5" y2="886.0" stroke="#969696" stroke-width="1"/>
<line x1="667.0" y1="147.5" x2="679.0" y2="147.5" stroke="#969696" stroke-width="1"/>
<line x1="667.0" y1="157.5" x2="679.0" y2="157.5" stroke="#969696" stroke-width="1"/>
<line x1="667.0" y1="887.5" x2="679.0" y2="887.5" stroke="#969696" stroke-width="1"/>
<line x1="667.0" y1="896.5" x2="679.0" y2="896.5" stroke="#969696" stroke-width="1"/>
<line x1="670.5" y1="899.0" x2="670.5" y2="921.0" stroke="#969696" stroke-width="1"/>
<path d="M665 129h1v1h-1zM668 129h1v1h-1zM665 130h1v1h-1zM666 130h1v1h-1zM667 130h1v1h-1zM668 130h1v1h-1zM665 132h1v1h-1zM667 132h1v1h-1zM668 132h1v1h-1zM665 133h1v1h-1zM666 133h1v1h-1zM668 133h1v1h-1zM665 135h1v1h-1zM666 135h1v1h-1zM667 135h1v1h-1zM668 135h1v1h-1zM666 136h1v1h-1z" fill="#00ffff"/>
<path d="M665 906h1v1h-1zM668 906h1v1h-1zM665 907h1v1h-1zM666 907h1v1h-1zM667 907h1v1h-1zM668 907h1v1h-1zM665 909h1v1h-1zM667 909h1v1h-1zM668 909h1v1h-1zM665 910h1v1h-1zM666 910h1v1h-1zM668 910h1v1h-1zM665 912h1v1h-1zM666 912h1v1h-1zM667 912h1v1h-1zM668 912h1v1h-1zM666 913h1v1h-1z" fill="#00ffff"/>
<line x1="683.5" y1="150.0" x2="683.5" y2="185.0" stroke="#969696" stroke-width="1"/>
<path d="M679 164h1v1h-1zM680 164h1v1h-1zM681 164h1v1h-1zM682 164h1v1h-1zM679 166h1v1h-1zM681 166h1v1h-1zM682 166h1v1h-1zM679 167h1v1h-1zM680 167h1v1h-1zM682 167h1v1h-1zM679 169h1v1h-1zM680 169h1v1h-1zM681 169h1v1h-1zM682 169h1v1h-1zM680 170h1v1h-1z" fill="#00ffff"/>
<line x1="1549.5" y1="150.0" x2="1549.5" y2="185.0" stroke="#969696" stroke-width="1"/>
<path d="M1544 164h1v1h-1zM1545 164h1v1h-1zM1546 164h1v1h-1zM1547 164h1v1h-1zM1544 166h1v1h-1zM1546 166h1v1h-1zM1547 166h1v1h-1zM1544 167h1v1h-1zM1545 167h1v1h-1zM1547 167h1v1h-1zM1544 169h1v1h-1zM1545 169h1v1h-1zM1546 169h1v1h-1zM1547 169h1v1h-1zM1545 170h1v1h-1z" fill="#00ffff"/>
<line x1="683.5" y1="190.0" x2="683.5" y2="222.0" stroke="#969696" stroke-width="1"/>
<path d="M679 203h1v1h-1zM680 203h1v1h-1zM681 203h1v1h-1zM682 203h1v1h-1zM679 205h1v1h-1zM681 205h1v1h-1zM682 205h1v1h-1zM679 206h1v1h-1zM680 206h1v1h-1zM682 206h1v1h-1zM679 208h1v1h-1zM680 208h1v1h-1zM681 208h1v1h-1zM682 208h1v1h-1zM680 209h1v1h-1z" fill="#00ffff"/>
<line x1="1549.5" y1="190.0" x2="1549.5" y2="222.0" stroke="#969696" stroke-width="1"/>
<path d="M1544 203h1v1h-1zM1545 203h1v1h-1zM1546 203h1v1h-1zM1547 203h1v1h-1zM1544 205h1v1h-1zM1546 205h1v1h-1zM1547 205h1v1h-1zM1544 206h1v1h-1zM1545 206h1v1h-1zM1547 206h1v1h-1zM1544 208h1v1h-1zM1545 208h1v1h-1zM1546 208h1v1h-1zM1547 208h1v1h-1zM1545 209h1v1h-1z" fill="#00ffff"/>
<line x1="683.5" y1="227.0" x2="683.5" y2="259.0" stroke="#969696" stroke-width="1"/>
<path d="M679 240h1v1h-1zM680 240h1v1h-1zM681 240h1v1h-1zM682 240h1v1h-1zM679 242h1v1h-1zM681 242h1v1h-1zM682 242h1v1h-1zM679 243h1v1h-1zM680 243h1v1h-1zM682 243h1v1h-1zM679 245h1v1h-1zM680 245h1v1h-1zM681 245h1v1h-1zM682 245h1v1h-1zM680 246h1v1h-1z" fill="#00ffff"/>
<line x1="1549.5" y1="227.0" x2="1549.5" y2="259.0" stroke="#969696" stroke-width="1"/>
<path d="M1544 240h1v1h-1zM1545 240h1v1h-1zM1546 240h1v1h-1zM1547 240h1v1h-1zM1544 242h1v1h-1zM1546 242h1v1h-1zM1547 242h1v1h-1zM1544 243h1v1h-1zM1545 243h1v1h-1zM1547 243h1v1h-1zM1544 245h1v1h-1zM1545 245h1v1h-1zM1546 245h1v1h-1zM1547 245h1v1h-1zM1545 246h1v1h-1z" fill="#00ffff"/>
<line x1="683.5" y1="264.0" x2="683.5" y2="297.0" stroke="#969696" stroke-width="1"/>
<path d="M679 277h1v1h-1zM680 277h1v1h-1zM681 277h1v1h-1zM682 277h1v1h-1zM679 279h1v1h-1zM681 279h1v1h-1zM682 279h1v1h-1zM679 280h1v1h-1zM680 280h1v1h-1zM682 280h1v1h-1zM679 282h1v1h-1zM680 282h1v1h-1zM681 282h1v1h-1zM682 282h1v1h-1zM680 283h1v1h-1z" fill="#00ffff"/>
<line x1="1549.5" y1="264.0" x2="1549.5" y2="297.0" stroke="#969696" stroke-width="1"/>
<path d="M1544 277h1v1h-1zM1545 277h1v1h-1zM1546 277h1v1h-1zM1547 277h1v1h-1zM1544 279h1v1h-1zM1546 279h1v1h-1zM1547 279h1v1h-1zM1544 280h1v1h-1zM1545 280h1v1h-1zM1547 280h1v1h-1zM1544 282h1v1h-1zM1545 282h1v1h-1zM1546 282h1v1h-1zM1547 282h1v1h-1zM1545 283h1v1h-1z" fill="#00ffff"/>
<line x1="683.5" y1="302.0" x2="683.5" y2="334.0" stroke="#969696" stroke-width="1"/>
<path d="M679 314h1v1h-1zM680 314h1v1h-1zM681 314h1v1h-1zM682 314h1v1h-1zM679 316h1v1h-1zM681 316h1v1h-1zM682 316h1v1h-1zM679 317h1v1h-1zM680 317h1v1h-1zM682 317h1v1h-1zM679 319h1v1h-1zM680 319h1v1h-1zM681 319h1v1h-1zM682 319h1v1h-1zM680 320h1v1h-1z" fill="#00ffff"/>
<line x1="1549.5" y1="302.0" x2="1549.5" y2="334.0" stroke="#969696" stroke-width="1"/>
<path d="M1544 314h1v1h-1zM1545 314h1v1h-1zM1546 314h1v1h-1zM1547 314h1v1h-1zM1544 316h1v1h-1zM1546 316h1v1h-1zM1547 316h1v1h-1zM1544 317h1v1h-1zM1545 317h1v1h-1zM1547 317h1v1h-1zM1544 319h1v1h-1zM1545 319h1v1h-1zM1546 319h1v1h-1zM1547 319h1v1h-1zM1545 320h1v1h-1z" fill="#00ffff"/>
<line x1="683.5" y1="339.0" x2="683.5" y2="371.0" stroke="#969696" stroke-width="1"/>
<path d="M679 352h1v1h-1zM680 352h1v1h-1zM681 352h1v1h-1zM682 352h1v1h-1zM679 354h1v1h-1zM681 354h1v1h-1zM682 354h1v1h-1zM679 355h1v1h-1zM680 355h1v1h-1zM682 355h1v1h-1zM679 357h1v1h-1zM680 357h1v1h-1zM681 357h1v1h-1zM682 357h1v1h-1zM680 358h1v1h-1z" fill="#00ffff"/>
<line x1="1549.5" y1="339.0" x2="1549.5" y2="371.0" stroke="#969696" stroke-width="1"/>
<path d="M1544 352h1v1h-1zM1545 352h1v1h-1zM1546 352h1v1h-1zM1547 352h1v1h-1zM1544 354h1v1h-1zM1546 354h1v1h-1zM1547 354h1v1h-1zM1544 355h1v1h-1zM1545 355h1v1h-1zM1547 355h1v1h-1zM1544 357h1v1h-1zM1545 357h1v1h-1zM1546 357h1v1h-1zM1547 357h1v1h-1zM1545 358h1v1h-1z" fill="#00ffff"/>
<line x1="683.5" y1="376.0" x2="683.5" y2="408.0" stroke="#969696" stroke-width="1"/>
<path d="M679 389h1v1h-1zM680 389h1v1h-1zM681 389h1v1h-1zM682 389h1v1h-1zM679 391h1v1h-1zM681 391h1v1h-1zM682 391h1v1h-1zM679 392h1v1h-1zM680 392h1v1h-1zM682 392h1v1h-1zM679 394h1v1h-1zM680 394h1v1h-1zM681 394h1v1h-1zM682 394h1v1h-1zM680 395h1v1h-1z" fill="#00ffff"/>
<line x1="1549.5" y1="376.0" x2="1549.5" y2="408.0" stroke="#969696" stroke-width="1"/>
<path d="M1544 389h1v1h-1zM1545 389h1v1h-1zM1546 389h1v1h-1zM1547 389h1v1h-1zM1544 391h1v1h-1zM1546 391h1v1h-1zM1547 391h1v1h-1zM1544 392h1v1h-1zM1545 392h1v1h-1zM1547 392h1v1h-1zM1544 394h1v1h-1zM1545 394h1v1h-1zM1546 394h1v1h-1zM1547 394h1v1h-1zM1545 395h1v1h-1z" fill="#00ffff"/>
<line x1="683.5" y1="413.0" x2="683.5" y2="446.0" stroke="#969696" stroke-width="1"/>
<path d="M679 426h1v1h-1zM680 426h1v1h-1zM681 426h1v1h-1zM682 426h1v1h-1zM679 428h1v1h-1zM681 428h1v1h-1zM682 428h1v1h-1zM679 429h1v1h-1zM680 429h1v1h-1zM682 429h1v1h-1zM679 431h1v1h-1zM680 431h1v1h-1zM681 431h1v1h-1zM682 431h1v1h-1zM680 432h1v1h-1z" fill="#00ffff"/>
<line x1="1549.5" y1="413.0" x2="1549.5" y2="446.0" stroke="#969696" stroke-width="1"/>
<path d="M1544 426h1v1h-1zM1545 426h1v1h-1zM1546 426h1v1h-1zM1547 426h1v1h-1zM1544 428h1v1h-1zM1546 428h1v1h-1zM1547 428h1v1h-1zM1544 429h1v1h-1zM1545 429h1v1h-1zM1547 429h1v1h-1zM1544 431h1v1h-1zM1545 431h1v1h-1zM1546 431h1v1h-1zM1547 431h1v1h-1zM1545 432h1v1h-1z" fill="#00ffff"/>
<line x1="683.5" y1="451.0" x2="683.5" y2="483.0" stroke="#969696" stroke-width="1"/>
<path d="M679 463h1v1h-1zM680 463h1v1h-1zM681 463h1v1h-1zM682 463h1v1h-1zM679 465h1v1h-1zM681 465h1v1h-1zM682 465h1v1h-1zM679 466h1v1h-1zM680 466h1v1h-1zM682 466h1v1h-1zM679 468h1v1h-1zM680 468h1v1h-1zM681 468h1v1h-1zM682 468h1v1h-1zM680 469h1v1h-1z" fill="#00ffff"/>
<line x1="1549.5" y1="451.0" x2="1549.5" y2="483.0" stroke="#969696" stroke-width="1"/>
<path d="M1544 463h1v1h-1zM1545 463h1v1h-1zM1546 463h1v1h-1zM1547 463h1v1h-1zM1544 465h1v1h-1zM1546 465h1v1h-1zM1547 465h1v1h-1zM1544 466h1v1h-1zM1545 466h1v1h-1zM1547 466h1v1h-1zM1544 468h1v1h-1zM1545 468h1v1h-1zM1546 468h1v1h-1zM1547 468h1v1h-1zM1545 469h1v1h-1z" fill="#00ffff"/>
<line x1="683.5" y1="488.0" x2="683.5" y2="520.0" stroke="#969696" stroke-width="1"/>
<path d="M679 500h1v1h-1zM680 500h1v1h-1zM681 500h1v1h-1zM682 500h1v1h-1zM679 502h1v1h-1zM681 502h1v1h-1zM682 502h1v1h-1zM679 503h1v1h-1zM680 503h1v1h-1zM682 503h1v1h-1zM679 505h1v1h-1zM680 505h1v1h-1zM681 505h1v1h-1zM682 505h1v1h-1zM680 506h1v1h-1z" fill="#00ffff"/>
<line x1="1549.5" y1="488.0" x2="1549.5" y2="520.0" stroke="#969696" stroke-width="1"/>
<path d="M1544 500h1v1h-1zM1545 500h1v1h-1zM1546 500h1v1h-1zM1547 500h1v1h-1zM1544 502h1v1h-1zM1546 502h1v1h-1zM1547 502h1v1h-1zM1544 503h1v1h-1zM1545 503h1v1h-1zM1547 503h1v1h-1zM1544 505h1v1h-1zM1545 505h1v1h-1zM1546 505h1v1h-1zM1547 505h1v1h-1zM1545 506h1v1h-1z" fill="#00ffff"/>
<line x1="683.5" y1="525.0" x2="683.5" y2="557.0" stroke="#969696" stroke-width="1"/>
<path d="M679 538h1v1h-1zM680 538h1v1h-1zM681 538h1v1h-1zM682 538h1v1h-1zM679 540h1v1h-1zM681 540h1v1h-1zM682 540h1v1h-1zM679 541h1v1h-1zM680 541h1v1h-1zM682 541h1v1h-1zM679 543h1v1h-1zM680 543h1v1h-1zM681 543h1v1h-1zM682 543h1v1h-1zM680 544h1v1h-1z" fill="#00ffff"/>
<line x1="1549.5" y1="525.0" x2="1549.5" y2="557.0" stroke="#969696" stroke-width="1"/>
<path d="M1544 538h1v1h-1zM1545 538h1v1h-1zM1546 538h1v1h-1zM1547 538h1v1h-1zM1544 540h1v1h-1zM1546 540h1v1h-1zM1547 540h1v1h-1zM1544 541h1v1h-1zM1545 541h1v1h-1zM1547 541h1v1h-1zM1544 543h1v1h-1zM1545 543h1v1h-1zM1546 543h1v1h-1zM1547 543h1v1h-1zM1545 544h1v1h-1z" fill="#00ffff"/>
<line x1="683.5" y1="562.0" x2="683.5" y2="594.0" stroke="#969696" stroke-width="1"/>
<path d="M679 575h1v1h-1zM680 575h1v1h-1zM681 575h1v1h-1zM682 575h1v1h-1zM679 577h1v1h-1zM681 577h1v1h-1zM682 577h1v1h-1zM679 578h1v1h-1zM680 578h1v1h-1zM682 578h1v1h-1zM679 580h1v1h-1zM680 580h1v1h-1zM681 580h1v1h-1zM682 580h1v1h-1zM680 581h1v1h-1z" fill="#00ffff"/>
<line x1="1549.5" y1="562.0" x2="1549.5" y2="594.0" stroke="#969696" stroke-width="1"/>
<path d="M1544 575h1v1h-1zM1545 575h1v1h-1zM1546 575h1v1h-1zM1547 575h1v1h-1zM1544 577h1v1h-1zM1546 577h1v1h-1zM1547 577h1v1h-1zM1544 578h1v1h-1zM1545 578h1v1h-1zM1547 578h1v1h-1zM1544 580h1v1h-1zM1545 580h1v1h-1zM1546 580h1v1h-1zM1547 580h1v1h-1zM1545 581h1v1h-1z" fill="#00ffff"/>
<line x1="683.5" y1="599.0" x2="683.5" y2="632.0" stroke="#969696" stroke-width="1"/>
<path d="M679 612h1v1h-1zM680 612h1v1h-1zM681 612h1v1h-1zM682 612h1v1h-1zM679 614h1v1h-1zM681 614h1v1h-1zM682 614h1v1h-1zM679 615h1v1h-1zM680 615h1v1h-1zM682 615h1v1h-1zM679 617h1v1h-1zM680 617h1v1h-1zM681 617h1v1h-1zM682 617h1v1h-1zM680 618h1v1h-1z" fill="#00ffff"/>
<line x1="1549.5" y1="599.0" x2="1549.5" y2="632.0" stroke="#969696" stroke-width="1"/>
<path d="M1544 612h1v1h-1zM1545 612h1v1h-1zM1546 612h1v1h-1zM1547 612h1v1h-1zM1544 614h1v1h-1zM1546 614h1v1h-1zM1547 614h1v1h-1zM1544 615h1v1h-1zM1545 615h1v1h-1zM1547 615h1v1h-1zM1544 617h1v1h-1zM1545 617h1v1h-1zM1546 617h1v1h-1zM1547 617h1v1h-1zM1545 618h1v1h-1z" fill="#00ffff"/>
<line x1="683.5" y1="637.0" x2="683.5" y2="669.0" stroke="#969696" stroke-width="1"/>
<path d="M679 649h1v1h-1zM680 649h1v1h-1zM681 649h1v1h-1zM682 649h1v1h-1zM679 651h1v1h-1zM681 651h1v1h-1zM682 651h1v1h-1zM679 652h1v1h-1zM680 652h1v1h-1zM682 652h1v1h-1zM679 654h1v1h-1zM680 654h1v1h-1zM681 654h1v1h-1zM682 654h1v1h-1zM680 655h1v1h-1z" fill="#00ffff"/>
<line x1="1549.5" y1="637.0" x2="1549.5" y2="669.0" stroke="#969696" stroke-width="1"/>
<path d="M1544 649h1v1h-1zM1545 649h1v1h-1zM1546 649h1v1h-1zM1547 649h1v1h-1zM1544 651h1v1h-1zM1546 651h1v1h-1zM1547 651h1v1h-1zM1544 652h1v1h-1zM1545 652h1v1h-1zM1547 652h1v1h-1zM1544 654h1v1h-1zM1545 654h1v1h-1zM1546 654h1v1h-1zM1547 654h1v1h-1zM1545 655h1v1h-1z" fill="#00ffff"/>
<line x1="683.5" y1="674.0" x2="683.5" y2="706.0" stroke="#969696" stroke-width="1"/>
<path d="M679 686h1v1h-1zM680 686h1v1h-1zM681 686h1v1h-1zM682 686h1v1h-1zM679 688h1v1h-1zM681 688h1v1h-1zM682 688h1v1h-1zM679 689h1v1h-1zM680 689h1v1h-1zM682 689h1v1h-1zM679 691h1v1h-1zM680 691h1v1h-1zM681 691h1v1h-1zM682 691h1v1h-1zM680 692h1v1h-1z" fill="#00ffff"/>
<line x1="1549.5" y1="674.0" x2="1549.5" y2="706.0" stroke="#969696" stroke-width="1"/>
<path d="M1544 686h1v1h-1zM1545 686h1v1h-1zM1546 686h1v1h-1zM1547 686h1v1h-1zM1544 688h1v1h-1zM1546 688h1v1h-1zM1547 688h1v1h-1zM1544 689h1v1h-1zM1545 689h1v1h-1zM1547 689h1v1h-1zM1544 691h1v1h-1zM1545 691h1v1h-1zM1546 691h1v1h-1zM1547 691h1v1h-1zM1545 692h1v1h-1z" fill="#00ffff"/>
<line x1="683.5" y1="711.0" x2="683.5" y2="743.0" stroke="#969696" stroke-width="1"/>
<path d="M679 724h1v1h-1zM680 724h1v1h-1zM681 724h1v1h-1zM682 724h1v1h-1zM679 726h1v1h-1zM681 726h1v1h-1zM682 726h1v1h-1zM679 727h1v1h-1zM680 727h1v1h-1zM682 727h1v1h-1zM679 729h1v1h-1zM680 729h1v1h-1zM681 729h1v1h-1zM682 729h1v1h-1zM680 730h1v1h-1z" fill="#00ffff"/>
<line x1="1549.5" y1="711.0" x2="1549.5" y2="743.0" stroke="#969696" stroke-width="1"/>
<path d="M1544 724h1v1h-1zM1545 724h1v1h-1zM1546 724h1v1h-1zM1547 724h1v1h-1zM1544 726h1v1h-1zM1546 726h1v1h-1zM1547 726h1v1h-1zM1544 727h1v1h-1zM1545 727h1v1h-1zM1547 727h1v1h-1zM1544 729h1v1h-1zM1545 729h1v1h-1zM1546 729h1v1h-1zM1547 729h1v1h-1zM1545 730h1v1h-1z" fill="#00ffff"/>
<line x1="683.5" y1="748.0" x2="683.5" y2="781.0" stroke="#969696" stroke-width="1"/>
<path d="M679 761h1v1h-1zM680 761h1v1h-1zM681 761h1v1h-1zM682 761h1v1h-1zM679 763h1v1h-1zM681 763h1v1h-1zM682 763h1v1h-1zM679 764h1v1h-1zM680 764h1v1h-1zM682 764h1v1h-1zM679 766h1v1h-1zM680 766h1v1h-1zM681 766h1v1h-1zM682 766h1v1h-1zM680 767h1v1h-1z" fill="#00ffff"/>
<line x1="1549.5" y1="748.0" x2="1549.5" y2="781.0" stroke="#969696" stroke-width="1"/>
<path d="M1544 761h1v1h-1zM1545 761h1v1h-1zM1546 761h1v1h-1zM1547 761h1v1h-1zM1544 763h1v1h-1zM1546 763h1v1h-1zM1547 763h1v1h-1zM1544 764h1v1h-1zM1545 764h1v1h-1zM1547 764h1v1h-1zM1544 766h1v1h-1zM1545 766h1v1h-1zM1546 766h1v1h-1zM1547 766h1v1h-1zM1545 767h1v1h-1z" fill="#00ffff"/>
<line x1="683.5" y1="786.0" x2="683.5" y2="818.0" stroke="#969696" stroke-width="1"/>
<path d="M679 798h1v1h-1zM680 798h1v1h-1zM681 798h1v1h-1zM682 798h1v1h-1zM679 800h1v1h-1zM681 800h1v1h-1zM682 800h1v1h-1zM679 801h1v1h-1zM680 801h1v1h-1zM682 801h1v1h-1zM679 803h1v1h-1zM680 803h1v1h-1zM681 803h1v1h-1zM682 803h1v1h-1zM680 804h1v1h-1z" fill="#00ffff"/>
<line x1="1549.5" y1="786.0" x2="1549.5" y2="818.0" stroke="#969696" stroke-width="1"/>
<path d="M1544 798h1v1h-1zM1545 798h1v1h-1zM1546 798h1v1h-1zM1547 798h1v1h-1zM1544 800h1v1h-1zM1546 800h1v1h-1zM1547 800h1v1h-1zM1544 801h1v1h-1zM1545 801h1v1h-1zM1547 801h1v1h-1zM1544 803h1v1h-1zM1545 803h1v1h-1zM1546 803h1v1h-1zM1547 803h1v1h-1zM1545 804h1v1h-1z" fill="#00ffff"/>
<line x1="683.5" y1="823.0" x2="683.5" y2="855.0" stroke="#969696" stroke-width="1"/>
<path d="M679 835h1v1h-1zM680 835h1v1h-1zM681 835h1v1h-1zM682 835h1v1h-1zM679 837h1v1h-1zM681 837h1v1h-1zM682 837h1v1h-1zM679 838h1v1h-1zM680 838h1v1h-1zM682 838h1v1h-1zM679 840h1v1h-1zM680 840h1v1h-1zM681 840h1v1h-1zM682 840h1v1h-1zM680 841h1v1h-1z" fill="#00ffff"/>
<line x1="1549.5" y1="823.0" x2="1549.5" y2="855.0" stroke="#969696" stroke-width="1"/>
<path d="M1544 835h1v1h-1zM1545 835h1v1h-1zM1546 835h1v1h-1zM1547 835h1v1h-1zM1544 837h1v1h-1zM1546 837h1v1h-1zM1547 837h1v1h-1zM1544 838h1v1h-1zM1545 838h1v1h-1zM1547 838h1v1h-1zM1544 840h1v1h-1zM1545 840h1v1h-1zM1546 840h1v1h-1zM1547 840h1v1h-1zM1545 841h1v1h-1z" fill="#00ffff"/>
<line x1="683.5" y1="860.0" x2="683.5" y2="894.0" stroke="#969696" stroke-width="1"/>
<path d="M679 873h1v1h-1zM680 873h1v1h-1zM681 873h1v1h-1zM682 873h1v1h-1zM679 875h1v1h-1zM681 875h1v1h-1zM682 875h1v1h-1zM679 876h1v1h-1zM680 876h1v1h-1zM682 876h1v1h-1zM679 878h1v1h-1zM680 878h1v1h-1zM681 878h1v1h-1zM682 878h1v1h-1zM680 879h1v1h-1z" fill="#00ffff"/>
<line x1="1549.5" y1="860.0" x2="1549.5" y2="894.0" stroke="#969696" stroke-width="1"/>
<path d="M1544 873h1v1h-1zM1545 873h1v1h-1zM1546 873h1v1h-1zM1547 873h1v1h-1zM1544 875h1v1h-1zM1546 875h1v1h-1zM1547 875h1v1h-1zM1544 876h1v1h-1zM1545 876h1v1h-1zM1547 876h1v1h-1zM1544 878h1v1h-1zM1545 878h1v1h-1zM1546 878h1v1h-1zM1547 878h1v1h-1zM1545 879h1v1h-1z" fill="#00ffff"/>
<line x1="680.0" y1="147.5" x2="683.0" y2="147.5" stroke="#969696" stroke-width="1"/>
<line x1="1544.0" y1="147.5" x2="1554.0" y2="147.5" stroke="#969696" stroke-width="1"/>
<line x1="681.0" y1="187.5" x2="691.0" y2="187.5" stroke="#969696" stroke-width="1"/>
<line x1="1544.0" y1="187.5" x2="1554.0" y2="187.5" stroke="#969696" stroke-width="1"/>
<line x1="681.0" y1="224.5" x2="691.0" y2="224.5" stroke="#969696" stroke-width="1"/>
<line x1="1544.0" y1="224.5" x2="1554.0" y2="224.5" stroke="#969696" stroke-width="1"/>
<line x1="681.0" y1="261.5" x2="691.0" y2="261.5" stroke="#969696" stroke-width="1"/>
<line x1="1544.0" y1="261.5" x2="1554.0" y2="261.5" stroke="#969696" stroke-width="1"/>
<line x1="681.0" y1="299.5" x2="691.0" y2="299.5" stroke="#969696" stroke-width="1"/>
<line x1="1544.0" y1="299.5" x2="1554.0" y2="299.5" stroke="#969696" stroke-width="1"/>
<line x1="681.0" y1="336.5" x2="691.0" y2="336.5" stroke="#969696" stroke-width="1"/>
<line x1="1544.0" y1="336.5" x2="1554.0" y2="336.5" stroke="#969696" stroke-width="1"/>
<line x1="681.0" y1="373.5" x2="691.0" y2="373.5" stroke="#969696" stroke-width="1"/>
<line x1="1544.0" y1="373.5" x2="1554.0" y2="373.5" stroke="#969696" stroke-width="1"/>
<line x1="681.0" y1="410.5" x2="691.0" y2="410.5" stroke="#969696" stroke-width="1"/>
<line x1="1544.0" y1="410.5" x2="1554.0" y2="410.5" stroke="#969696" stroke-width="1"/>
<line x1="681.0" y1="448.5" x2="691.0" y2="448.5" stroke="#969696" stroke-width="1"/>
<line x1="1544.0" y1="448.5" x2="1554.0" y2="448.5" stroke="#969696" stroke-width="1"/>
<line x1="681.0" y1="485.5" x2="691.0" y2="485.5" stroke="#969696" stroke-width="1"/>
<line x1="1544.0" y1="485.5" x2="1554.0" y2="485.5" stroke="#969696" stroke-width="1"/>
<line x1="681.0" y1="522.5" x2="691.0" y2="522.5" stroke="#969696" stroke-width="1"/>
<line x1="1544.0" y1="522.5" x2="1554.0" y2="522.5" stroke="#969696" stroke-width="1"/>
<line x1="681.0" y1="559.5" x2="691.0" y2="559.5" stroke="#969696" stroke-width="1"/>
<line x1="1544.0" y1="559.5" x2="1554.0" y2="559.5" stroke="#969696" stroke-width="1"/>
<line x1="681.0" y1="596.5" x2="691.0" y2="596.5" stroke="#969696" stroke-width="1"/>
<line x1="1544.0" y1="596.5" x2="1554.0" y2="596.5" stroke="#969696" stroke-width="1"/>
<line x1="681.0" y1="634.5" x2="691.0" y2="634.5" stroke="#969696" stroke-width="1"/>
<line x1="1544.0" y1="634.5" x2="1554.0" y2="634.5" stroke="#969696" stroke-width="1"/>
<line x1="681.0" y1="671.5" x2="691.0" y2="671.5" stroke="#969696" stroke-width="1"/>
<line x1="1544.0" y1="671.5" x2="1554.0" y2="671.5" stroke="#969696" stroke-width="1"/>
<line x1="681.0" y1="708.5" x2="691.0" y2="708.5" stroke="#969696" stroke-width="1"/>
<line x1="1544.0" y1="708.5" x2="1554.0" y2="708.5" stroke="#969696" stroke-width="1"/>
<line x1="681.0" y1="745.5" x2="691.0" y2="745.5" stroke="#969696" stroke-width="1"/>
<line x1="1544.0" y1="745.5" x2="1554.0" y2="745.5" stroke="#969696" stroke-width="1"/>
<line x1="681.0" y1="783.5" x2="691.0" y2="783.5" stroke="#969696" stroke-width="1"/>
<line x1="1544.0" y1="783.5" x2="1554.0" y2="783.5" stroke="#969696" stroke-width="1"/>
<line x1="681.0" y1="820.5" x2="691.0" y2="820.5" stroke="#969696" stroke-width="1"/>
<line x1="1544.0" y1="820.5" x2="1554.0" y2="820.5" stroke="#969696" stroke-width="1"/>
<line x1="681.0" y1="857.5" x2="691.0" y2="857.5" stroke="#969696" stroke-width="1"/>
<line x1="1544.0" y1="857.5" x2="1554.0" y2="857.5" stroke="#969696" stroke-width="1"/>
<line x1="680.0" y1="896.5" x2="683.0" y2="896.5" stroke="#969696" stroke-width="1"/>
<line x1="1544.0" y1="896.5" x2="1554.0" y2="896.5" stroke="#969696" stroke-width="1"/>
<line x1="1359.5" y1="205.0" x2="1359.5" y2="224.0" stroke="#969696" stroke-width="1"/>
<path d="M1354 206h1v1h-1zM1357 206h1v1h-1zM1354 207h1v1h-1zM1355 207h1v1h-1zM1356 207h1v1h-1zM1357 207h1v1h-1zM1354 209h1v1h-1zM1356 209h1v1h-1zM1357 209h1v1h-1zM1354 210h1v1h-1zM1355 210h1v1h-1zM1357 210h1v1h-1zM1354 212h1v1h-1zM1355 212h1v1h-1zM1356 212h1v1h-1zM1357 212h1v1h-1zM1355 213h1v1h-1z" fill="#00ffff"/>
<line x1="1347.0" y1="231.5" x2="1363.0" y2="231.5" stroke="#969696" stroke-width="1"/>
<line x1="1359.5" y1="231.0" x2="1359.5" y2="240.0" stroke="#969696" stroke-width="1"/>
<line x1="1366.0" y1="236.5" x2="1373.0" y2="236.5" stroke="#969696" stroke-width="1"/>
<line x1="1379.0" y1="236.5" x2="1398.0" y2="236.5" stroke="#969696" stroke-width="1"/>
<path d="M1388 231h1v1h-1zM1390 231h1v1h-1zM1391 231h1v1h-1zM1393 231h1v1h-1zM1394 231h1v1h-1zM1387 232h1v1h-1zM1388 232h1v1h-1zM1390 232h1v1h-1zM1393 232h1v1h-1zM1388 233h1v1h-1zM1391 233h1v1h-1zM1393 233h1v1h-1zM1388 234h1v1h-1zM1390 234h1v1h-1zM1391 234h1v1h-1zM1393 234h1v1h-1zM1394 234h1v1h-1z" fill="#00ffff"/>
<line x1="1375.5" y1="233.0" x2="1375.5" y2="255.0" stroke="#969696" stroke-width="1"/>
<line x1="1399.0" y1="270.5" x2="1408.0" y2="270.5" stroke="#969696" stroke-width="1"/>
<line x1="1415.0" y1="270.5" x2="1435.0" y2="270.5" stroke="#969696" stroke-width="1"/>
<path d="M1425 265h1v1h-1zM1427 265h1v1h-1zM1428 265h1v1h-1zM1430 265h1v1h-1zM1431 265h1v1h-1zM1424 266h1v1h-1zM1425 266h1v1h-1zM1427 266h1v1h-1zM1430 266h1v1h-1zM1425 267h1v1h-1zM1428 267h1v1h-1zM1430 267h1v1h-1zM1425 268h1v1h-1zM1427 268h1v1h-1zM1428 268h1v1h-1zM1430 268h1v1h-1zM1431 268h1v1h-1z" fill="#00ffff"/>
<line x1="1407.5" y1="267.0" x2="1407.5" y2="292.0" stroke="#969696" stroke-width="1"/>
<line x1="873.5" y1="205.0" x2="873.5" y2="224.0" stroke="#969696" stroke-width="1"/>
<path d="M868 206h1v1h-1zM871 206h1v1h-1zM868 207h1v1h-1zM869 207h1v1h-1zM870 207h1v1h-1zM871 207h1v1h-1zM868 209h1v1h-1zM870 209h1v1h-1zM871 209h1v1h-1zM868 210h1v1h-1zM869 210h1v1h-1zM871 210h1v1h-1zM868 212h1v1h-1zM869 212h1v1h-1zM870 212h1v1h-1zM871 212h1v1h-1zM869 213h1v1h-1z" fill="#00ffff"/>
<line x1="870.0" y1="231.5" x2="886.0" y2="231.5" stroke="#969696" stroke-width="1"/>
<line x1="873.5" y1="231.0" x2="873.5" y2="240.0" stroke="#969696" stroke-width="1"/>
<line x1="860.0" y1="236.5" x2="867.0" y2="236.5" stroke="#969696" stroke-width="1"/>
<line x1="835.0" y1="236.5" x2="854.0" y2="236.5" stroke="#969696" stroke-width="1"/>
<path d="M838 231h1v1h-1zM840 231h1v1h-1zM841 231h1v1h-1zM843 231h1v1h-1zM844 231h1v1h-1zM837 232h1v1h-1zM838 232h1v1h-1zM840 232h1v1h-1zM843 232h1v1h-1zM838 233h1v1h-1zM841 233h1v1h-1zM843 233h1v1h-1zM838 234h1v1h-1zM840 234h1v1h-1zM841 234h1v1h-1zM843 234h1v1h-1zM844 234h1v1h-1z" fill="#00ffff"/>
<line x1="857.5" y1="233.0" x2="857.5" y2="255.0" stroke="#969696" stroke-width="1"/>
<line x1="825.0" y1="270.5" x2="834.0" y2="270.5" stroke="#969696" stroke-width="1"/>
<line x1="799.0" y1="270.5" x2="819.0" y2="270.5" stroke="#969696" stroke-width="1"/>
<path d="M801 265h1v1h-1zM803 265h1v1h-1zM804 265h1v1h-1zM806 265h1v1h-1zM807 265h1v1h-1zM800 266h1v1h-1zM801 266h1v1h-1zM803 266h1v1h-1zM806 266h1v1h-1zM801 267h1v1h-1zM804 267h1v1h-1zM806 267h1v1h-1zM801 268h1v1h-1zM803 268h1v1h-1zM804 268h1v1h-1zM806 268h1v1h-1zM807 268h1v1h-1z" fill="#00ffff"/>
<line x1="825.5" y1="267.0" x2="825.5" y2="292.0" stroke="#969696" stroke-width="1"/>
<line x1="1359.5" y1="821.0" x2="1359.5" y2="841.0" stroke="#969696" stroke-width="1"/>
<path d="M1354 830h1v1h-1zM1357 830h1v1h-1zM1354 831h1v1h-1zM1355 831h1v1h-1zM1356 831h1v1h-1zM1357 831h1v1h-1zM1354 833h1v1h-1zM1356 833h1v1h-1zM1357 833h1v1h-1zM1354 834h1v1h-1zM1355 834h1v1h-1zM1357 834h1v1h-1zM1354 836h1v1h-1zM1355 836h1v1h-1zM1356 836h1v1h-1zM1357 836h1v1h-1zM1355 837h1v1h-1z" fill="#00ffff"/>
<line x1="1347.0" y1="813.5" x2="1363.0" y2="813.5" stroke="#969696" stroke-width="1"/>
<line x1="1359.5" y1="805.0" x2="1359.5" y2="814.0" stroke="#969696" stroke-width="1"/>
<line x1="1366.0" y1="808.5" x2="1373.0" y2="808.5" stroke="#969696" stroke-width="1"/>
<line x1="1379.0" y1="808.5" x2="1398.0" y2="808.5" stroke="#969696" stroke-width="1"/>
<path d="M1388 803h1v1h-1zM1390 803h1v1h-1zM1391 803h1v1h-1zM1393 803h1v1h-1zM1394 803h1v1h-1zM1387 804h1v1h-1zM1388 804h1v1h-1zM1390 804h1v1h-1zM1393 804h1v1h-1zM1388 805h1v1h-1zM1391 805h1v1h-1zM1393 805h1v1h-1zM1388 806h1v1h-1zM1390 806h1v1h-1zM1391 806h1v1h-1zM1393 806h1v1h-1zM1394 806h1v1h-1z" fill="#00ffff"/>
<line x1="1375.5" y1="790.0" x2="1375.5" y2="813.0" stroke="#969696" stroke-width="1"/>
<line x1="1399.0" y1="774.5" x2="1408.0" y2="774.5" stroke="#969696" stroke-width="1"/>
<line x1="1415.0" y1="774.5" x2="1435.0" y2="774.5" stroke="#969696" stroke-width="1"/>
<path d="M1425 769h1v1h-1zM1427 769h1v1h-1zM1428 769h1v1h-1zM1430 769h1v1h-1zM1431 769h1v1h-1zM1424 770h1v1h-1zM1425 770h1v1h-1zM1427 770h1v1h-1zM1430 770h1v1h-1zM1425 771h1v1h-1zM1428 771h1v1h-1zM1430 771h1v1h-1zM1425 772h1v1h-1zM1427 772h1v1h-1zM1428 772h1v1h-1zM1430 772h1v1h-1zM1431 772h1v1h-1z" fill="#00ffff"/>
<line x1="1407.5" y1="753.0" x2="1407.5" y2="779.0" stroke="#969696" stroke-width="1"/>
<line x1="873.5" y1="821.0" x2="873.5" y2="841.0" stroke="#969696" stroke-width="1"/>
<path d="M868 830h1v1h-1zM871 830h1v1h-1zM868 831h1v1h-1zM869 831h1v1h-1zM870 831h1v1h-1zM871 831h1v1h-1zM868 833h1v1h-1zM870 833h1v1h-1zM871 833h1v1h-1zM868 834h1v1h-1zM869 834h1v1h-1zM871 834h1v1h-1zM868 836h1v1h-1zM869 836h1v1h-1zM870 836h1v1h-1zM871 836h1v1h-1zM869 837h1v1h-1z" fill="#00ffff"/>
<line x1="870.0" y1="813.5" x2="886.0" y2="813.5" stroke="#969696" stroke-width="1"/>
<line x1="873.5" y1="805.0" x2="873.5" y2="814.0" stroke="#969696" stroke-width="1"/>
<line x1="860.0" y1="808.5" x2="867.0" y2="808.5" stroke="#969696" stroke-width="1"/>
<line x1="835.0" y1="808.5" x2="854.0" y2="808.5" stroke="#969696" stroke-width="1"/>
<path d="M838 803h1v1h-1zM840 803h1v1h-1zM841 803h1v1h-1zM843 803h1v1h-1zM844 803h1v1h-1zM837 804h1v1h-1zM838 804h1v1h-1zM840 804h1v1h-1zM843 804h1v1h-1zM838 805h1v1h-1zM841 805h1v1h-1zM843 805h1v1h-1zM838 806h1v1h-1zM840 806h1v1h-1zM841 806h1v1h-1zM843 806h1v1h-1zM844 806h1v1h-1z" fill="#00ffff"/>
<line x1="857.5" y1="790.0" x2="857.5" y2="813.0" stroke="#969696" stroke-width="1"/>
<line x1="825.0" y1="774.5" x2="834.0" y2="774.5" stroke="#969696" stroke-width="1"/>
<line x1="799.0" y1="774.5" x2="819.0" y2="774.5" stroke="#969696" stroke-width="1"/>
<path d="M801 769h1v1h-1zM803 769h1v1h-1zM804 769h1v1h-1zM806 769h1v1h-1zM807 769h1v1h-1zM800 770h1v1h-1zM801 770h1v1h-1zM803 770h1v1h-1zM806 770h1v1h-1zM801 771h1v1h-1zM804 771h1v1h-1zM806 771h1v1h-1zM801 772h1v1h-1zM803 772h1v1h-1zM804 772h1v1h-1zM806 772h1v1h-1zM807 772h1v1h-1z" fill="#00ffff"/>
<line x1="825.5" y1="753.0" x2="825.5" y2="779.0" stroke="#969696" stroke-width="1"/>
<line x1="1064.5" y1="128.0" x2="1064.5" y2="146.0" stroke="#969696" stroke-width="1"/>
<line x1="1064.5" y1="159.0" x2="1064.5" y2="166.0" stroke="#969696" stroke-width="1"/>
<path d="M1059 129h1v1h-1zM1062 129h1v1h-1zM1059 130h1v1h-1zM1060 130h1v1h-1zM1061 130h1v1h-1zM1062 130h1v1h-1zM1059 132h1v1h-1zM1061 132h1v1h-1zM1062 132h1v1h-1zM1059 133h1v1h-1zM1060 133h1v1h-1zM1062 133h1v1h-1zM1059 135h1v1h-1zM1060 135h1v1h-1zM1061 135h1v1h-1zM1062 135h1v1h-1zM1060 136h1v1h-1z" fill="#00ffff"/>
<line x1="1064.5" y1="879.0" x2="1064.5" y2="887.0" stroke="#969696" stroke-width="1"/>
<line x1="1064.5" y1="900.0" x2="1064.5" y2="918.0" stroke="#969696" stroke-width="1"/>
<path d="M1059 908h1v1h-1zM1062 908h1v1h-1zM1059 909h1v1h-1zM1060 909h1v1h-1zM1061 909h1v1h-1zM1062 909h1v1h-1zM1059 911h1v1h-1zM1061 911h1v1h-1zM1062 911h1v1h-1zM1059 912h1v1h-1zM1060 912h1v1h-1zM1062 912h1v1h-1zM1059 914h1v1h-1zM1060 914h1v1h-1zM1061 914h1v1h-1zM1062 914h1v1h-1zM1060 915h1v1h-1z" fill="#00ffff"/>
<line x1="1132.5" y1="128.0" x2="1132.5" y2="146.0" stroke="#969696" stroke-width="1"/>
<line x1="1132.5" y1="159.0" x2="1132.5" y2="166.0" stroke="#969696" stroke-width="1"/>
<path d="M1127 129h1v1h-1zM1130 129h1v1h-1zM1127 130h1v1h-1zM1128 130h1v1h-1zM1129 130h1v1h-1zM1130 130h1v1h-1zM1127 132h1v1h-1zM1129 132h1v1h-1zM1130 132h1v1h-1zM1127 133h1v1h-1zM1128 133h1v1h-1zM1130 133h1v1h-1zM1127 135h1v1h-1zM1128 135h1v1h-1zM1129 135h1v1h-1zM1130 135h1v1h-1zM1128 136h1v1h-1z" fill="#00ffff"/>
<line x1="1132.5" y1="879.0" x2="1132.5" y2="887.0" stroke="#969696" stroke-width="1"/>
<line x1="1132.5" y1="900.0" x2="1132.5" y2="918.0" stroke="#969696" stroke-width="1"/>
<path d="M1127 908h1v1h-1zM1130 908h1v1h-1zM1127 909h1v1h-1zM1128 909h1v1h-1zM1129 909h1v1h-1zM1130 909h1v1h-1zM1127 911h1v1h-1zM1129 911h1v1h-1zM1130 911h1v1h-1zM1127 912h1v1h-1zM1128 912h1v1h-1zM1130 912h1v1h-1zM1127 914h1v1h-1zM1128 914h1v1h-1zM1129 914h1v1h-1zM1130 914h1v1h-1zM1128 915h1v1h-1z" fill="#00ffff"/>
<line x1="1169.5" y1="128.0" x2="1169.5" y2="146.0" stroke="#969696" stroke-width="1"/>
<line x1="1169.5" y1="159.0" x2="1169.5" y2="166.0" stroke="#969696" stroke-width="1"/>
<path d="M1164 129h1v1h-1zM1167 129h1v1h-1zM1164 130h1v1h-1zM1165 130h1v1h-1zM1166 130h1v1h-1zM1167 130h1v1h-1zM1164 132h1v1h-1zM1166 132h1v1h-1zM1167 132h1v1h-1zM1164 133h1v1h-1zM1165 133h1v1h-1zM1167 133h1v1h-1zM1164 135h1v1h-1zM1165 135h1v1h-1zM1166 135h1v1h-1zM1167 135h1v1h-1zM1165 136h1v1h-1z" fill="#00ffff"/>
<line x1="1169.5" y1="879.0" x2="1169.5" y2="887.0" stroke="#969696" stroke-width="1"/>
<line x1="1169.5" y1="900.0" x2="1169.5" y2="918.0" stroke="#969696" stroke-width="1"/>
<path d="M1164 908h1v1h-1zM1167 908h1v1h-1zM1164 909h1v1h-1zM1165 909h1v1h-1zM1166 909h1v1h-1zM1167 909h1v1h-1zM1164 911h1v1h-1zM1166 911h1v1h-1zM1167 911h1v1h-1zM1164 912h1v1h-1zM1165 912h1v1h-1zM1167 912h1v1h-1zM1164 914h1v1h-1zM1165 914h1v1h-1zM1166 914h1v1h-1zM1167 914h1v1h-1zM1165 915h1v1h-1z" fill="#00ffff"/>
<line x1="1124.0" y1="157.5" x2="1136.0" y2="157.5" stroke="#969696" stroke-width="1"/>
<line x1="1124.0" y1="887.5" x2="1136.0" y2="887.5" stroke="#969696" stroke-width="1"/>
<line x1="1161.0" y1="157.5" x2="1173.0" y2="157.5" stroke="#969696" stroke-width="1"/>
<line x1="1161.0" y1="887.5" x2="1173.0" y2="887.5" stroke="#969696" stroke-width="1"/>
<line x1="1032.5" y1="129.0" x2="1032.5" y2="165.0" stroke="#969696" stroke-width="1"/>
<line x1="1029.0" y1="164.5" x2="1036.0" y2="164.5" stroke="#969696" stroke-width="1"/>
<path d="M1027 132h1v1h-1zM1030 132h1v1h-1zM1027 133h1v1h-1zM1028 133h1v1h-1zM1029 133h1v1h-1zM1030 133h1v1h-1zM1027 135h1v1h-1zM1029 135h1v1h-1zM1030 135h1v1h-1zM1027 136h1v1h-1zM1028 136h1v1h-1zM1030 136h1v1h-1zM1027 138h1v1h-1zM1028 138h1v1h-1zM1029 138h1v1h-1zM1030 138h1v1h-1zM1028 139h1v1h-1z" fill="#00ffff"/>
<line x1="1032.5" y1="880.0" x2="1032.5" y2="915.0" stroke="#969696" stroke-width="1"/>
<line x1="1029.0" y1="880.5" x2="1036.0" y2="880.5" stroke="#969696" stroke-width="1"/>
<path d="M1027 904h1v1h-1zM1030 904h1v1h-1zM1027 905h1v1h-1zM1028 905h1v1h-1zM1029 905h1v1h-1zM1030 905h1v1h-1zM1027 907h1v1h-1zM1029 907h1v1h-1zM1030 907h1v1h-1zM1027 908h1v1h-1zM1028 908h1v1h-1zM1030 908h1v1h-1zM1027 910h1v1h-1zM1028 910h1v1h-1zM1029 910h1v1h-1zM1030 910h1v1h-1zM1028 911h1v1h-1z" fill="#00ffff"/>
<line x1="1201.5" y1="129.0" x2="1201.5" y2="165.0" stroke="#969696" stroke-width="1"/>
<line x1="1198.0" y1="164.5" x2="1205.0" y2="164.5" stroke="#969696" stroke-width="1"/>
<path d="M1196 132h1v1h-1zM1199 132h1v1h-1zM1196 133h1v1h-1zM1197 133h1v1h-1zM1198 133h1v1h-1zM1199 133h1v1h-1zM1196 135h1v1h-1zM1198 135h1v1h-1zM1199 135h1v1h-1zM1196 136h1v1h-1zM1197 136h1v1h-1zM1199 136h1v1h-1zM1196 138h1v1h-1zM1197 138h1v1h-1zM1198 138h1v1h-1zM1199 138h1v1h-1zM1197 139h1v1h-1z" fill="#00ffff"/>
<line x1="1201.5" y1="880.0" x2="1201.5" y2="915.0" stroke="#969696" stroke-width="1"/>
<line x1="1198.0" y1="880.5" x2="1205.0" y2="880.5" stroke="#969696" stroke-width="1"/>
<path d="M1196 904h1v1h-1zM1199 904h1v1h-1zM1196 905h1v1h-1zM1197 905h1v1h-1zM1198 905h1v1h-1zM1199 905h1v1h-1zM1196 907h1v1h-1zM1198 907h1v1h-1zM1199 907h1v1h-1zM1196 908h1v1h-1zM1197 908h1v1h-1zM1199 908h1v1h-1zM1196 910h1v1h-1zM1197 910h1v1h-1zM1198 910h1v1h-1zM1199 910h1v1h-1zM1197 911h1v1h-1z" fill="#00ffff"/>
<line x1="1476.0" y1="434.5" x2="1510.0" y2="434.5" stroke="#969696" stroke-width="1"/>
<line x1="1475.5" y1="431.0" x2="1475.5" y2="442.0" stroke="#969696" stroke-width="1"/>
<path d="M1499 429h1v1h-1zM1501 429h1v1h-1zM1502 429h1v1h-1zM1504 429h1v1h-1zM1505 429h1v1h-1zM1498 430h1v1h-1zM1499 430h1v1h-1zM1501 430h1v1h-1zM1504 430h1v1h-1zM1499 431h1v1h-1zM1502 431h1v1h-1zM1504 431h1v1h-1zM1499 432h1v1h-1zM1501 432h1v1h-1zM1502 432h1v1h-1zM1504 432h1v1h-1zM1505 432h1v1h-1z" fill="#00ffff"/>
<line x1="1474.0" y1="467.5" x2="1482.0" y2="467.5" stroke="#969696" stroke-width="1"/>
<line x1="1492.0" y1="467.5" x2="1512.0" y2="467.5" stroke="#969696" stroke-width="1"/>
<line x1="1482.5" y1="463.0" x2="1482.5" y2="479.0" stroke="#969696" stroke-width="1"/>
<path d="M1502 462h1v1h-1zM1504 462h1v1h-1zM1505 462h1v1h-1zM1507 462h1v1h-1zM1508 462h1v1h-1zM1501 463h1v1h-1zM1502 463h1v1h-1zM1504 463h1v1h-1zM1507 463h1v1h-1zM1502 464h1v1h-1zM1505 464h1v1h-1zM1507 464h1v1h-1zM1502 465h1v1h-1zM1504 465h1v1h-1zM1505 465h1v1h-1zM1507 465h1v1h-1zM1508 465h1v1h-1z" fill="#00ffff"/>
<line x1="1473.0" y1="504.5" x2="1481.0" y2="504.5" stroke="#969696" stroke-width="1"/>
<line x1="1493.0" y1="504.5" x2="1513.0" y2="504.5" stroke="#969696" stroke-width="1"/>
<line x1="1482.5" y1="501.0" x2="1482.5" y2="517.0" stroke="#969696" stroke-width="1"/>
<path d="M1502 499h1v1h-1zM1504 499h1v1h-1zM1505 499h1v1h-1zM1507 499h1v1h-1zM1508 499h1v1h-1zM1501 500h1v1h-1zM1502 500h1v1h-1zM1504 500h1v1h-1zM1507 500h1v1h-1zM1502 501h1v1h-1zM1505 501h1v1h-1zM1507 501h1v1h-1zM1502 502h1v1h-1zM1504 502h1v1h-1zM1505 502h1v1h-1zM1507 502h1v1h-1zM1508 502h1v1h-1z" fill="#00ffff"/>
<line x1="1474.0" y1="577.5" x2="1482.0" y2="577.5" stroke="#969696" stroke-width="1"/>
<line x1="1492.0" y1="577.5" x2="1512.0" y2="577.5" stroke="#969696" stroke-width="1"/>
<line x1="1482.5" y1="567.0" x2="1482.5" y2="583.0" stroke="#969696" stroke-width="1"/>
<path d="M1502 572h1v1h-1zM1504 572h1v1h-1zM1505 572h1v1h-1zM1507 572h1v1h-1zM1508 572h1v1h-1zM1501 573h1v1h-1zM1502 573h1v1h-1zM1504 573h1v1h-1zM1507 573h1v1h-1zM1502 574h1v1h-1zM1505 574h1v1h-1zM1507 574h1v1h-1zM1502 575h1v1h-1zM1504 575h1v1h-1zM1505 575h1v1h-1zM1507 575h1v1h-1zM1508 575h1v1h-1z" fill="#00ffff"/>
<line x1="1476.0" y1="610.5" x2="1510.0" y2="610.5" stroke="#969696" stroke-width="1"/>
<line x1="1475.5" y1="604.0" x2="1475.5" y2="615.0" stroke="#969696" stroke-width="1"/>
<path d="M1499 605h1v1h-1zM1501 605h1v1h-1zM1502 605h1v1h-1zM1504 605h1v1h-1zM1505 605h1v1h-1zM1498 606h1v1h-1zM1499 606h1v1h-1zM1501 606h1v1h-1zM1504 606h1v1h-1zM1499 607h1v1h-1zM1502 607h1v1h-1zM1504 607h1v1h-1zM1499 608h1v1h-1zM1501 608h1v1h-1zM1502 608h1v1h-1zM1504 608h1v1h-1zM1505 608h1v1h-1z" fill="#00ffff"/>
<line x1="724.0" y1="434.5" x2="757.0" y2="434.5" stroke="#969696" stroke-width="1"/>
<line x1="757.5" y1="431.0" x2="757.5" y2="442.0" stroke="#969696" stroke-width="1"/>
<path d="M727 429h1v1h-1zM729 429h1v1h-1zM730 429h1v1h-1zM732 429h1v1h-1zM733 429h1v1h-1zM726 430h1v1h-1zM727 430h1v1h-1zM729 430h1v1h-1zM732 430h1v1h-1zM727 431h1v1h-1zM730 431h1v1h-1zM732 431h1v1h-1zM727 432h1v1h-1zM729 432h1v1h-1zM730 432h1v1h-1zM732 432h1v1h-1zM733 432h1v1h-1z" fill="#00ffff"/>
<line x1="752.0" y1="467.5" x2="760.0" y2="467.5" stroke="#969696" stroke-width="1"/>
<line x1="722.0" y1="467.5" x2="742.0" y2="467.5" stroke="#969696" stroke-width="1"/>
<line x1="750.5" y1="463.0" x2="750.5" y2="479.0" stroke="#969696" stroke-width="1"/>
<path d="M724 462h1v1h-1zM726 462h1v1h-1zM727 462h1v1h-1zM729 462h1v1h-1zM730 462h1v1h-1zM723 463h1v1h-1zM724 463h1v1h-1zM726 463h1v1h-1zM729 463h1v1h-1zM724 464h1v1h-1zM727 464h1v1h-1zM729 464h1v1h-1zM724 465h1v1h-1zM726 465h1v1h-1zM727 465h1v1h-1zM729 465h1v1h-1zM730 465h1v1h-1z" fill="#00ffff"/>
<line x1="753.0" y1="504.5" x2="761.0" y2="504.5" stroke="#969696" stroke-width="1"/>
<line x1="721.0" y1="504.5" x2="741.0" y2="504.5" stroke="#969696" stroke-width="1"/>
<line x1="750.5" y1="501.0" x2="750.5" y2="517.0" stroke="#969696" stroke-width="1"/>
<path d="M724 499h1v1h-1zM726 499h1v1h-1zM727 499h1v1h-1zM729 499h1v1h-1zM730 499h1v1h-1zM723 500h1v1h-1zM724 500h1v1h-1zM726 500h1v1h-1zM729 500h1v1h-1zM724 501h1v1h-1zM727 501h1v1h-1zM729 501h1v1h-1zM724 502h1v1h-1zM726 502h1v1h-1zM727 502h1v1h-1zM729 502h1v1h-1zM730 502h1v1h-1z" fill="#00ffff"/>
<line x1="752.0" y1="577.5" x2="760.0" y2="577.5" stroke="#969696" stroke-width="1"/>
<line x1="722.0" y1="577.5" x2="742.0" y2="577.5" stroke="#969696" stroke-width="1"/>
<line x1="750.5" y1="567.0" x2="750.5" y2="583.0" stroke="#969696" stroke-width="1"/>
<path d="M724 572h1v1h-1zM726 572h1v1h-1zM727 572h1v1h-1zM729 572h1v1h-1zM730 572h1v1h-1zM723 573h1v1h-1zM724 573h1v1h-1zM726 573h1v1h-1zM729 573h1v1h-1zM724 574h1v1h-1zM727 574h1v1h-1zM729 574h1v1h-1zM724 575h1v1h-1zM726 575h1v1h-1zM727 575h1v1h-1zM729 575h1v1h-1zM730 575h1v1h-1z" fill="#00ffff"/>
<line x1="724.0" y1="610.5" x2="757.0" y2="610.5" stroke="#969696" stroke-width="1"/>
<line x1="757.5" y1="604.0" x2="757.5" y2="615.0" stroke="#969696" stroke-width="1"/>
<path d="M727 605h1v1h-1zM729 605h1v1h-1zM730 605h1v1h-1zM732 605h1v1h-1zM733 605h1v1h-1zM726 606h1v1h-1zM727 606h1v1h-1zM729 606h1v1h-1zM732 606h1v1h-1zM727 607h1v1h-1zM730 607h1v1h-1zM732 607h1v1h-1zM727 608h1v1h-1zM729 608h1v1h-1zM730 608h1v1h-1zM732 608h1v1h-1zM733 608h1v1h-1z" fill="#00ffff"/>
<line x1="1116.5" y1="117.0" x2="1116.5" y2="133.0" stroke="#824100" stroke-width="1"/>
<line x1="1116.5" y1="135.0" x2="1116.5" y2="910.0" stroke="#c0c0c0" stroke-width="1"/>
<line x1="1116.5" y1="914.0" x2="1116.5" y2="941.0" stroke="#824100" stroke-width="1"/>
<line x1="729.0" y1="522.5" x2="1505.0" y2="522.5" stroke="#c0c0c0" stroke-width="1"/>
<line x1="1506.0" y1="522.5" x2="1542.0" y2="522.5" stroke="#824100" stroke-width="1"/>
<line x1="694.0" y1="522.5" x2="729.0" y2="522.5" stroke="#824100" stroke-width="1"/>
<circle cx="1116.8" cy="522.5" r="373.6" fill="none" stroke="#00ffff" stroke-width="1"/>
<circle cx="1116.8" cy="522.5" r="364.8" fill="none" stroke="#00ffff" stroke-width="1"/>
<path d="M1091.0,891.6 A370,370 0 1 0 747.3,503.1" fill="none" stroke="#ff0000" stroke-width="1"/>
<path d="M777 410h9v1h-9zM781 406h1v9h-1zM780 407h3v1h-3zM780 413h3v1h-3zM778 409h1v3h-1zM784 409h1v3h-1zM779 408h1v1h-1zM783 408h1v1h-1zM779 412h1v1h-1zM783 412h1v1h-1zM777 448h9v1h-9zM781 444h1v9h-1zM780 445h3v1h-3zM780 451h3v1h-3zM778 447h1v3h-1zM784 447h1v3h-1zM779 446h1v1h-1zM783 446h1v1h-1zM779 450h1v1h-1zM783 450h1v1h-1zM777 485h9v1h-9zM781 481h1v9h-1zM780 482h3v1h-3zM780 488h3v1h-3zM778 484h1v3h-1zM784 484h1v3h-1zM779 483h1v1h-1zM783 483h1v1h-1zM779 487h1v1h-1zM783 487h1v1h-1zM777 522h9v1h-9zM781 518h1v9h-1zM780 519h3v1h-3zM780 525h3v1h-3zM778 521h1v3h-1zM784 521h1v3h-1zM779 520h1v1h-1zM783 520h1v1h-1zM779 524h1v1h-1zM783 524h1v1h-1zM777 559h9v1h-9zM781 555h1v9h-1zM780 556h3v1h-3zM780 562h3v1h-3zM778 558h1v3h-1zM784 558h1v3h-1zM779 557h1v1h-1zM783 557h1v1h-1zM779 561h1v1h-1zM783 561h1v1h-1zM777 596h9v1h-9zM781 592h1v9h-1zM780 593h3v1h-3zM780 599h3v1h-3zM778 595h1v3h-1zM784 595h1v3h-1zM779 594h1v1h-1zM783 594h1v1h-1zM779 598h1v1h-1zM783 598h1v1h-1zM777 634h9v1h-9zM781 630h1v9h-1zM780 631h3v1h-3zM780 637h3v1h-3zM778 633h1v3h-1zM784 633h1v3h-1zM779 632h1v1h-1zM783 632h1v1h-1zM779 636h1v1h-1zM783 636h1v1h-1zM815 336h9v1h-9zM819 332h1v9h-1zM818 333h3v1h-3zM818 339h3v1h-3zM816 335h1v3h-1zM822 335h1v3h-1zM817 334h1v1h-1zM821 334h1v1h-1zM817 338h1v1h-1zM821 338h1v1h-1zM815 373h9v1h-9zM819 369h1v9h-1zM818 370h3v1h-3zM818 376h3v1h-3zM816 372h1v3h-1zM822 372h1v3h-1zM817 371h1v1h-1zM821 371h1v1h-1zM817 375h1v1h-1zM821 375h1v1h-1zM815 410h9v1h-9zM819 406h1v9h-1zM818 407h3v1h-3zM818 413h3v1h-3zM816 409h1v3h-1zM822 409h1v3h-1zM817 408h1v1h-1zM821 408h1v1h-1zM817 412h1v1h-1zM821 412h1v1h-1zM815 448h9v1h-9zM819 444h1v9h-1zM818 445h3v1h-3zM818 451h3v1h-3zM816 447h1v3h-1zM822 447h1v3h-1zM817 446h1v1h-1zM821 446h1v1h-1zM817 450h1v1h-1zM821 450h1v1h-1zM815 485h9v1h-9zM819 481h1v9h-1zM818 482h3v1h-3zM818 488h3v1h-3zM816 484h1v3h-1zM822 484h1v3h-1zM817 483h1v1h-1zM821 483h1v1h-1zM817 487h1v1h-1zM821 487h1v1h-1zM815 522h9v1h-9zM819 518h1v9h-1zM818 519h3v1h-3zM818 525h3v1h-3zM816 521h1v3h-1zM822 521h1v3h-1zM817 520h1v1h-1zM821 520h1v1h-1zM817 524h1v1h-1zM821 524h1v1h-1zM815 559h9v1h-9zM819 555h1v9h-1zM818 556h3v1h-3zM818 562h3v1h-3zM816 558h1v3h-1zM822 558h1v3h-1zM817 557h1v1h-1zM821 557h1v1h-1zM817 561h1v1h-1zM821 561h1v1h-1zM815 596h9v1h-9zM819 592h1v9h-1zM818 593h3v1h-3zM818 599h3v1h-3zM816 595h1v3h-1zM822 595h1v3h-1zM817 594h1v1h-1zM821 594h1v1h-1zM817 598h1v1h-1zM821 598h1v1h-1zM815 634h9v1h-9zM819 630h1v9h-1zM818 631h3v1h-3zM818 637h3v1h-3zM816 633h1v3h-1zM822 633h1v3h-1zM817 632h1v1h-1zM821 632h1v1h-1zM817 636h1v1h-1zM821 636h1v1h-1zM815 671h9v1h-9zM819 667h1v9h-1zM818 668h3v1h-3zM818 674h3v1h-3zM816 670h1v3h-1zM822 670h1v3h-1zM817 669h1v1h-1zM821 669h1v1h-1zM817 673h1v1h-1zM821 673h1v1h-1zM815 708h9v1h-9zM819 704h1v9h-1zM818 705h3v1h-3zM818 711h3v1h-3zM816 707h1v3h-1zM822 707h1v3h-1zM817 706h1v1h-1zM821 706h1v1h-1zM817 710h1v1h-1zM821 710h1v1h-1zM852 299h9v1h-9zM856 295h1v9h-1zM855 296h3v1h-3zM855 302h3v1h-3zM853 298h1v3h-1zM859 298h1v3h-1zM854 297h1v1h-1zM858 297h1v1h-1zM854 301h1v1h-1zM858 301h1v1h-1zM852 336h9v1h-9zM856 332h1v9h-1zM855 333h3v1h-3zM855 339h3v1h-3zM853 335h1v3h-1zM859 335h1v3h-1zM854 334h1v1h-1zM858 334h1v1h-1zM854 338h1v1h-1zM858 338h1v1h-1zM852 373h9v1h-9zM856 369h1v9h-1zM855 370h3v1h-3zM855 376h3v1h-3zM853 372h1v3h-1zM859 372h1v3h-1zM854 371h1v1h-1zM858 371h1v1h-1zM854 375h1v1h-1zM858 375h1v1h-1zM852 410h9v1h-9zM856 406h1v9h-1zM855 407h3v1h-3zM855 413h3v1h-3zM853 409h1v3h-1zM859 409h1v3h-1zM854 408h1v1h-1zM858 408h1v1h-1zM854 412h1v1h-1zM858 412h1v1h-1zM852 448h9v1h-9zM856 444h1v9h-1zM855 445h3v1h-3zM855 451h3v1h-3zM853 447h1v3h-1zM859 447h1v3h-1zM854 446h1v1h-1zM858 446h1v1h-1zM854 450h1v1h-1zM858 450h1v1h-1zM852 485h9v1h-9zM856 481h1v9h-1zM855 482h3v1h-3zM855 488h3v1h-3zM853 484h1v3h-1zM859 484h1v3h-1zM854 483h1v1h-1zM858 483h1v1h-1zM854 487h1v1h-1zM858 487h1v1h-1zM852 522h9v1h-9zM856 518h1v9h-1zM855 519h3v1h-3zM855 525h3v1h-3zM853 521h1v3h-1zM859 521h1v3h-1zM854 520h1v1h-1zM858 520h1v1h-1zM854 524h1v1h-1zM858 524h1v1h-1zM852 559h9v1h-9zM856 555h1v9h-1zM855 556h3v1h-3zM855 562h3v1h-3zM853 558h1v3h-1zM859 558h1v3h-1zM854 557h1v1h-1zM858 557h1v1h-1zM854 561h1v1h-1zM858 561h1v1h-1zM852 596h9v1h-9zM856 592h1v9h-1zM855 593h3v1h-3zM855 599h3v1h-3zM853 595h1v3h-1zM859 595h1v3h-1zM854 594h1v1h-1zM858 594h1v1h-1zM854 598h1v1h-1zM858 598h1v1h-1zM852 634h9v1h-9zM856 630h1v9h-1zM855 631h3v1h-3zM855 637h3v1h-3zM853 633h1v3h-1zM859 633h1v3h-1zM854 632h1v1h-1zM858 632h1v1h-1zM854 636h1v1h-1zM858 636h1v1h-1zM852 671h9v1h-9zM856 667h1v9h-1zM855 668h3v1h-3zM855 674h3v1h-3zM853 670h1v3h-1zM859 670h1v3h-1zM854 669h1v1h-1zM858 669h1v1h-1zM854 673h1v1h-1zM858 673h1v1h-1zM852 708h9v1h-9zM856 704h1v9h-1zM855 705h3v1h-3zM855 711h3v1h-3zM853 707h1v3h-1zM859 707h1v3h-1zM854 706h1v1h-1zM858 706h1v1h-1zM854 710h1v1h-1zM858 710h1v1h-1zM852 745h9v1h-9zM856 741h1v9h-1zM855 742h3v1h-3zM855 748h3v1h-3zM853 744h1v3h-1zM859 744h1v3h-1zM854 743h1v1h-1zM858 743h1v1h-1zM854 747h1v1h-1zM858 747h1v1h-1zM889 261h9v1h-9zM893 257h1v9h-1zM892 258h3v1h-3zM892 264h3v1h-3zM890 260h1v3h-1zM896 260h1v3h-1zM891 259h1v1h-1zM895 259h1v1h-1zM891 263h1v1h-1zM895 263h1v1h-1zM889 299h9v1h-9zM893 295h1v9h-1zM892 296h3v1h-3zM892 302h3v1h-3zM890 298h1v3h-1zM896 298h1v3h-1zM891 297h1v1h-1zM895 297h1v1h-1zM891 301h1v1h-1zM895 301h1v1h-1zM889 336h9v1h-9zM893 332h1v9h-1zM892 333h3v1h-3zM892 339h3v1h-3zM890 335h1v3h-1zM896 335h1v3h-1zM891 334h1v1h-1zM895 334h1v1h-1zM891 338h1v1h-1zM895 338h1v1h-1zM889 373h9v1h-9zM893 369h1v9h-1zM892 370h3v1h-3zM892 376h3v1h-3zM890 372h1v3h-1zM896 372h1v3h-1zM891 371h1v1h-1zM895 371h1v1h-1zM891 375h1v1h-1zM895 375h1v1h-1zM889 410h9v1h-9zM893 406h1v9h-1zM892 407h3v1h-3zM892 413h3v1h-3zM890 409h1v3h-1zM896 409h1v3h-1zM891 408h1v1h-1zM895 408h1v1h-1zM891 412h1v1h-1zM895 412h1v1h-1zM889 448h9v1h-9zM893 444h1v9h-1zM892 445h3v1h-3zM892 451h3v1h-3zM890 447h1v3h-1zM896 447h1v3h-1zM891 446h1v1h-1zM895 446h1v1h-1zM891 450h1v1h-1zM895 450h1v1h-1zM889 485h9v1h-9zM893 481h1v9h-1zM892 482h3v1h-3zM892 488h3v1h-3zM890 484h1v3h-1zM896 484h1v3h-1zM891 483h1v1h-1zM895 483h1v1h-1zM891 487h1v1h-1zM895 487h1v1h-1zM889 522h9v1h-9zM893 518h1v9h-1zM892 519h3v1h-3zM892 525h3v1h-3zM890 521h1v3h-1zM896 521h1v3h-1zM891 520h1v1h-1zM895 520h1v1h-1zM891 524h1v1h-1zM895 524h1v1h-1zM889 559h9v1h-9zM893 555h1v9h-1zM892 556h3v1h-3zM892 562h3v1h-3zM890 558h1v3h-1zM896 558h1v3h-1zM891 557h1v1h-1zM895 557h1v1h-1zM891 561h1v1h-1zM895 561h1v1h-1zM889 596h9v1h-9zM893 592h1v9h-1zM892 593h3v1h-3zM892 599h3v1h-3zM890 595h1v3h-1zM896 595h1v3h-1zM891 594h1v1h-1zM895 594h1v1h-1zM891 598h1v1h-1zM895 598h1v1h-1zM889 634h9v1h-9zM893 630h1v9h-1zM892 631h3v1h-3zM892 637h3v1h-3zM890 633h1v3h-1zM896 633h1v3h-1zM891 632h1v1h-1zM895 632h1v1h-1zM891 636h1v1h-1zM895 636h1v1h-1zM889 671h9v1h-9zM893 667h1v9h-1zM892 668h3v1h-3zM892 674h3v1h-3zM890 670h1v3h-1zM896 670h1v3h-1zM891 669h1v1h-1zM895 669h1v1h-1zM891 673h1v1h-1zM895 673h1v1h-1zM889 708h9v1h-9zM893 704h1v9h-1zM892 705h3v1h-3zM892 711h3v1h-3zM890 707h1v3h-1zM896 707h1v3h-1zM891 706h1v1h-1zM895 706h1v1h-1zM891 710h1v1h-1zM895 710h1v1h-1zM889 745h9v1h-9zM893 741h1v9h-1zM892 742h3v1h-3zM892 748h3v1h-3zM890 744h1v3h-1zM896 744h1v3h-1zM891 743h1v1h-1zM895 743h1v1h-1zM891 747h1v1h-1zM895 747h1v1h-1zM889 783h9v1h-9zM893 779h1v9h-1zM892 780h3v1h-3zM892 786h3v1h-3zM890 782h1v3h-1zM896 782h1v3h-1zM891 781h1v1h-1zM895 781h1v1h-1zM891 785h1v1h-1zM895 785h1v1h-1zM926 224h9v1h-9zM930 220h1v9h-1zM929 221h3v1h-3zM929 227h3v1h-3zM927 223h1v3h-1zM933 223h1v3h-1zM928 222h1v1h-1zM932 222h1v1h-1zM928 226h1v1h-1zM932 226h1v1h-1zM926 261h9v1h-9zM930 257h1v9h-1zM929 258h3v1h-3zM929 264h3v1h-3zM927 260h1v3h-1zM933 260h1v3h-1zM928 259h1v1h-1zM932 259h1v1h-1zM928 263h1v1h-1zM932 263h1v1h-1zM926 299h9v1h-9zM930 295h1v9h-1zM929 296h3v1h-3zM929 302h3v1h-3zM927 298h1v3h-1zM933 298h1v3h-1zM928 297h1v1h-1zM932 297h1v1h-1zM928 301h1v1h-1zM932 301h1v1h-1zM926 336h9v1h-9zM930 332h1v9h-1zM929 333h3v1h-3zM929 339h3v1h-3zM927 335h1v3h-1zM933 335h1v3h-1zM928 334h1v1h-1zM932 334h1v1h-1zM928 338h1v1h-1zM932 338h1v1h-1zM926 373h9v1h-9zM930 369h1v9h-1zM929 370h3v1h-3zM929 376h3v1h-3zM927 372h1v3h-1zM933 372h1v3h-1zM928 371h1v1h-1zM932 371h1v1h-1zM928 375h1v1h-1zM932 375h1v1h-1zM926 410h9v1h-9zM930 406h1v9h-1zM929 407h3v1h-3zM929 413h3v1h-3zM927 409h1v3h-1zM933 409h1v3h-1zM928 408h1v1h-1zM932 408h1v1h-1zM928 412h1v1h-1zM932 412h1v1h-1zM926 448h9v1h-9zM930 444h1v9h-1zM929 445h3v1h-3zM929 451h3v1h-3zM927 447h1v3h-1zM933 447h1v3h-1zM928 446h1v1h-1zM932 446h1v1h-1zM928 450h1v1h-1zM932 450h1v1h-1zM926 485h9v1h-9zM930 481h1v9h-1zM929 482h3v1h-3zM929 488h3v1h-3zM927 484h1v3h-1zM933 484h1v3h-1zM928 483h1v1h-1zM932 483h1v1h-1zM928 487h1v1h-1zM932 487h1v1h-1zM926 522h9v1h-9zM930 518h1v9h-1zM929 519h3v1h-3zM929 525h3v1h-3zM927 521h1v3h-1zM933 521h1v3h-1zM928 520h1v1h-1zM932 520h1v1h-1zM928 524h1v1h-1zM932 524h1v1h-1zM926 559h9v1h-9zM930 555h1v9h-1zM929 556h3v1h-3zM929 562h3v1h-3zM927 558h1v3h-1zM933 558h1v3h-1zM928 557h1v1h-1zM932 557h1v1h-1zM928 561h1v1h-1zM932 561h1v1h-1zM926 596h9v1h-9zM930 592h1v9h-1zM929 593h3v1h-3zM929 599h3v1h-3zM927 595h1v3h-1zM933 595h1v3h-1zM928 594h1v1h-1zM932 594h1v1h-1zM928 598h1v1h-1zM932 598h1v1h-1zM926 634h9v1h-9zM930 630h1v9h-1zM929 631h3v1h-3zM929 637h3v1h-3zM927 633h1v3h-1zM933 633h1v3h-1zM928 632h1v1h-1zM932 632h1v1h-1zM928 636h1v1h-1zM932 636h1v1h-1zM926 671h9v1h-9zM930 667h1v9h-1zM929 668h3v1h-3zM929 674h3v1h-3zM927 670h1v3h-1zM933 670h1v3h-1zM928 669h1v1h-1zM932 669h1v1h-1zM928 673h1v1h-1zM932 673h1v1h-1zM926 708h9v1h-9zM930 704h1v9h-1zM929 705h3v1h-3zM929 711h3v1h-3zM927 707h1v3h-1zM933 707h1v3h-1zM928 706h1v1h-1zM932 706h1v1h-1zM928 710h1v1h-1zM932 710h1v1h-1zM926 745h9v1h-9zM930 741h1v9h-1zM929 742h3v1h-3zM929 748h3v1h-3zM927 744h1v3h-1zM933 744h1v3h-1zM928 743h1v1h-1zM932 743h1v1h-1zM928 747h1v1h-1zM932 747h1v1h-1zM926 783h9v1h-9zM930 779h1v9h-1zM929 780h3v1h-3zM929 786h3v1h-3zM927 782h1v3h-1zM933 782h1v3h-1zM928 781h1v1h-1zM932 781h1v1h-1zM928 785h1v1h-1zM932 785h1v1h-1zM926 820h9v1h-9zM930 816h1v9h-1zM929 817h3v1h-3zM929 823h3v1h-3zM927 819h1v3h-1zM933 819h1v3h-1zM928 818h1v1h-1zM932 818h1v1h-1zM928 822h1v1h-1zM932 822h1v1h-1zM963 224h9v1h-9zM967 220h1v9h-1zM966 221h3v1h-3zM966 227h3v1h-3zM964 223h1v3h-1zM970 223h1v3h-1zM965 222h1v1h-1zM969 222h1v1h-1zM965 226h1v1h-1zM969 226h1v1h-1zM963 261h9v1h-9zM967 257h1v9h-1zM966 258h3v1h-3zM966 264h3v1h-3zM964 260h1v3h-1zM970 260h1v3h-1zM965 259h1v1h-1zM969 259h1v1h-1zM965 263h1v1h-1zM969 263h1v1h-1zM963 299h9v1h-9zM967 295h1v9h-1zM966 296h3v1h-3zM966 302h3v1h-3zM964 298h1v3h-1zM970 298h1v3h-1zM965 297h1v1h-1zM969 297h1v1h-1zM965 301h1v1h-1zM969 301h1v1h-1zM963 336h9v1h-9zM967 332h1v9h-1zM966 333h3v1h-3zM966 339h3v1h-3zM964 335h1v3h-1zM970 335h1v3h-1zM965 334h1v1h-1zM969 334h1v1h-1zM965 338h1v1h-1zM969 338h1v1h-1zM963 373h9v1h-9zM967 369h1v9h-1zM966 370h3v1h-3zM966 376h3v1h-3zM964 372h1v3h-1zM970 372h1v3h-1zM965 371h1v1h-1zM969 371h1v1h-1zM965 375h1v1h-1zM969 375h1v1h-1zM963 410h9v1h-9zM967 406h1v9h-1zM966 407h3v1h-3zM966 413h3v1h-3zM964 409h1v3h-1zM970 409h1v3h-1zM965 408h1v1h-1zM969 408h1v1h-1zM965 412h1v1h-1zM969 412h1v1h-1zM963 448h9v1h-9zM967 444h1v9h-1zM966 445h3v1h-3zM966 451h3v1h-3zM964 447h1v3h-1zM970 447h1v3h-1zM965 446h1v1h-1zM969 446h1v1h-1zM965 450h1v1h-1zM969 450h1v1h-1zM963 485h9v1h-9zM967 481h1v9h-1zM966 482h3v1h-3zM966 488h3v1h-3zM964 484h1v3h-1zM970 484h1v3h-1zM965 483h1v1h-1zM969 483h1v1h-1zM965 487h1v1h-1zM969 487h1v1h-1zM963 522h9v1h-9zM967 518h1v9h-1zM966 519h3v1h-3zM966 525h3v1h-3zM964 521h1v3h-1zM970 521h1v3h-1zM965 520h1v1h-1zM969 520h1v1h-1zM965 524h1v1h-1zM969 524h1v1h-1zM963 559h9v1h-9zM967 555h1v9h-1zM966 556h3v1h-3zM966 562h3v1h-3zM964 558h1v3h-1zM970 558h1v3h-1zM965 557h1v1h-1zM969 557h1v1h-1zM965 561h1v1h-1zM969 561h1v1h-1zM963 596h9v1h-9zM967 592h1v9h-1zM966 593h3v1h-3zM966 599h3v1h-3zM964 595h1v3h-1zM970 595h1v3h-1zM965 594h1v1h-1zM969 594h1v1h-1zM965 598h1v1h-1zM969 598h1v1h-1zM963 634h9v1h-9zM967 630h1v9h-1zM966 631h3v1h-3zM966 637h3v1h-3zM964 633h1v3h-1zM970 633h1v3h-1zM965 632h1v1h-1zM969 632h1v1h-1zM965 636h1v1h-1zM969 636h1v1h-1zM963 671h9v1h-9zM967 667h1v9h-1zM966 668h3v1h-3zM966 674h3v1h-3zM964 670h1v3h-1zM970 670h1v3h-1zM965 669h1v1h-1zM969 669h1v1h-1zM965 673h1v1h-1zM969 673h1v1h-1zM963 708h9v1h-9zM967 704h1v9h-1zM966 705h3v1h-3zM966 711h3v1h-3zM964 707h1v3h-1zM970 707h1v3h-1zM965 706h1v1h-1zM969 706h1v1h-1zM965 710h1v1h-1zM969 710h1v1h-1zM963 745h9v1h-9zM967 741h1v9h-1zM966 742h3v1h-3zM966 748h3v1h-3zM964 744h1v3h-1zM970 744h1v3h-1zM965 743h1v1h-1zM969 743h1v1h-1zM965 747h1v1h-1zM969 747h1v1h-1zM963 783h9v1h-9zM967 779h1v9h-1zM966 780h3v1h-3zM966 786h3v1h-3zM964 782h1v3h-1zM970 782h1v3h-1zM965 781h1v1h-1zM969 781h1v1h-1zM965 785h1v1h-1zM969 785h1v1h-1zM963 820h9v1h-9zM967 816h1v9h-1zM966 817h3v1h-3zM966 823h3v1h-3zM964 819h1v3h-1zM970 819h1v3h-1zM965 818h1v1h-1zM969 818h1v1h-1zM965 822h1v1h-1zM969 822h1v1h-1zM1001 187h9v1h-9zM1005 183h1v9h-1zM1004 184h3v1h-3zM1004 190h3v1h-3zM1002 186h1v3h-1zM1008 186h1v3h-1zM1003 185h1v1h-1zM1007 185h1v1h-1zM1003 189h1v1h-1zM1007 189h1v1h-1zM1001 224h9v1h-9zM1005 220h1v9h-1zM1004 221h3v1h-3zM1004 227h3v1h-3zM1002 223h1v3h-1zM1008 223h1v3h-1zM1003 222h1v1h-1zM1007 222h1v1h-1zM1003 226h1v1h-1zM1007 226h1v1h-1zM1001 261h9v1h-9zM1005 257h1v9h-1zM1004 258h3v1h-3zM1004 264h3v1h-3zM1002 260h1v3h-1zM1008 260h1v3h-1zM1003 259h1v1h-1zM1007 259h1v1h-1zM1003 263h1v1h-1zM1007 263h1v1h-1zM1001 299h9v1h-9zM1005 295h1v9h-1zM1004 296h3v1h-3zM1004 302h3v1h-3zM1002 298h1v3h-1zM1008 298h1v3h-1zM1003 297h1v1h-1zM1007 297h1v1h-1zM1003 301h1v1h-1zM1007 301h1v1h-1zM1001 336h9v1h-9zM1005 332h1v9h-1zM1004 333h3v1h-3zM1004 339h3v1h-3zM1002 335h1v3h-1zM1008 335h1v3h-1zM1003 334h1v1h-1zM1007 334h1v1h-1zM1003 338h1v1h-1zM1007 338h1v1h-1zM1001 373h9v1h-9zM1005 369h1v9h-1zM1004 370h3v1h-3zM1004 376h3v1h-3zM1002 372h1v3h-1zM1008 372h1v3h-1zM1003 371h1v1h-1zM1007 371h1v1h-1zM1003 375h1v1h-1zM1007 375h1v1h-1zM1001 410h9v1h-9zM1005 406h1v9h-1zM1004 407h3v1h-3zM1004 413h3v1h-3zM1002 409h1v3h-1zM1008 409h1v3h-1zM1003 408h1v1h-1zM1007 408h1v1h-1zM1003 412h1v1h-1zM1007 412h1v1h-1zM1001 448h9v1h-9zM1005 444h1v9h-1zM1004 445h3v1h-3zM1004 451h3v1h-3zM1002 447h1v3h-1zM1008 447h1v3h-1zM1003 446h1v1h-1zM1007 446h1v1h-1zM1003 450h1v1h-1zM1007 450h1v1h-1zM1001 485h9v1h-9zM1005 481h1v9h-1zM1004 482h3v1h-3zM1004 488h3v1h-3zM1002 484h1v3h-1zM1008 484h1v3h-1zM1003 483h1v1h-1zM1007 483h1v1h-1zM1003 487h1v1h-1zM1007 487h1v1h-1zM1001 522h9v1h-9zM1005 518h1v9h-1zM1004 519h3v1h-3zM1004 525h3v1h-3zM1002 521h1v3h-1zM1008 521h1v3h-1zM1003 520h1v1h-1zM1007 520h1v1h-1zM1003 524h1v1h-1zM1007 524h1v1h-1zM1001 559h9v1h-9zM1005 555h1v9h-1zM1004 556h3v1h-3zM1004 562h3v1h-3zM1002 558h1v3h-1zM1008 558h1v3h-1zM1003 557h1v1h-1zM1007 557h1v1h-1zM1003 561h1v1h-1zM1007 561h1v1h-1zM1001 596h9v1h-9zM1005 592h1v9h-1zM1004 593h3v1h-3zM1004 599h3v1h-3zM1002 595h1v3h-1zM1008 595h1v3h-1zM1003 594h1v1h-1zM1007 594h1v1h-1zM1003 598h1v1h-1zM1007 598h1v1h-1zM1001 634h9v1h-9zM1005 630h1v9h-1zM1004 631h3v1h-3zM1004 637h3v1h-3zM1002 633h1v3h-1zM1008 633h1v3h-1zM1003 632h1v1h-1zM1007 632h1v1h-1zM1003 636h1v1h-1zM1007 636h1v1h-1zM1001 671h9v1h-9zM1005 667h1v9h-1zM1004 668h3v1h-3zM1004 674h3v1h-3zM1002 670h1v3h-1zM1008 670h1v3h-1zM1003 669h1v1h-1zM1007 669h1v1h-1zM1003 673h1v1h-1zM1007 673h1v1h-1zM1001 708h9v1h-9zM1005 704h1v9h-1zM1004 705h3v1h-3zM1004 711h3v1h-3zM1002 707h1v3h-1zM1008 707h1v3h-1zM1003 706h1v1h-1zM1007 706h1v1h-1zM1003 710h1v1h-1zM1007 710h1v1h-1zM1001 745h9v1h-9zM1005 741h1v9h-1zM1004 742h3v1h-3zM1004 748h3v1h-3zM1002 744h1v3h-1zM1008 744h1v3h-1zM1003 743h1v1h-1zM1007 743h1v1h-1zM1003 747h1v1h-1zM1007 747h1v1h-1zM1001 783h9v1h-9zM1005 779h1v9h-1zM1004 780h3v1h-3zM1004 786h3v1h-3zM1002 782h1v3h-1zM1008 782h1v3h-1zM1003 781h1v1h-1zM1007 781h1v1h-1zM1003 785h1v1h-1zM1007 785h1v1h-1zM1001 820h9v1h-9zM1005 816h1v9h-1zM1004 817h3v1h-3zM1004 823h3v1h-3zM1002 819h1v3h-1zM1008 819h1v3h-1zM1003 818h1v1h-1zM1007 818h1v1h-1zM1003 822h1v1h-1zM1007 822h1v1h-1zM1001 857h9v1h-9zM1005 853h1v9h-1zM1004 854h3v1h-3zM1004 860h3v1h-3zM1002 856h1v3h-1zM1008 856h1v3h-1zM1003 855h1v1h-1zM1007 855h1v1h-1zM1003 859h1v1h-1zM1007 859h1v1h-1zM1038 187h9v1h-9zM1042 183h1v9h-1zM1041 184h3v1h-3zM1041 190h3v1h-3zM1039 186h1v3h-1zM1045 186h1v3h-1zM1040 185h1v1h-1zM1044 185h1v1h-1zM1040 189h1v1h-1zM1044 189h1v1h-1zM1038 224h9v1h-9zM1042 220h1v9h-1zM1041 221h3v1h-3zM1041 227h3v1h-3zM1039 223h1v3h-1zM1045 223h1v3h-1zM1040 222h1v1h-1zM1044 222h1v1h-1zM1040 226h1v1h-1zM1044 226h1v1h-1zM1038 261h9v1h-9zM1042 257h1v9h-1zM1041 258h3v1h-3zM1041 264h3v1h-3zM1039 260h1v3h-1zM1045 260h1v3h-1zM1040 259h1v1h-1zM1044 259h1v1h-1zM1040 263h1v1h-1zM1044 263h1v1h-1zM1038 299h9v1h-9zM1042 295h1v9h-1zM1041 296h3v1h-3zM1041 302h3v1h-3zM1039 298h1v3h-1zM1045 298h1v3h-1zM1040 297h1v1h-1zM1044 297h1v1h-1zM1040 301h1v1h-1zM1044 301h1v1h-1zM1038 336h9v1h-9zM1042 332h1v9h-1zM1041 333h3v1h-3zM1041 339h3v1h-3zM1039 335h1v3h-1zM1045 335h1v3h-1zM1040 334h1v1h-1zM1044 334h1v1h-1zM1040 338h1v1h-1zM1044 338h1v1h-1zM1038 373h9v1h-9zM1042 369h1v9h-1zM1041 370h3v1h-3zM1041 376h3v1h-3zM1039 372h1v3h-1zM1045 372h1v3h-1zM1040 371h1v1h-1zM1044 371h1v1h-1zM1040 375h1v1h-1zM1044 375h1v1h-1zM1038 410h9v1h-9zM1042 406h1v9h-1zM1041 407h3v1h-3zM1041 413h3v1h-3zM1039 409h1v3h-1zM1045 409h1v3h-1zM1040 408h1v1h-1zM1044 408h1v1h-1zM1040 412h1v1h-1zM1044 412h1v1h-1zM1038 448h9v1h-9zM1042 444h1v9h-1zM1041 445h3v1h-3zM1041 451h3v1h-3zM1039 447h1v3h-1zM1045 447h1v3h-1zM1040 446h1v1h-1zM1044 446h1v1h-1zM1040 450h1v1h-1zM1044 450h1v1h-1zM1038 485h9v1h-9zM1042 481h1v9h-1zM1041 482h3v1h-3zM1041 488h3v1h-3zM1039 484h1v3h-1zM1045 484h1v3h-1zM1040 483h1v1h-1zM1044 483h1v1h-1zM1040 487h1v1h-1zM1044 487h1v1h-1zM1038 522h9v1h-9zM1042 518h1v9h-1zM1041 519h3v1h-3zM1041 525h3v1h-3zM1039 521h1v3h-1zM1045 521h1v3h-1zM1040 520h1v1h-1zM1044 520h1v1h-1zM1040 524h1v1h-1zM1044 524h1v1h-1zM1038 559h9v1h-9zM1042 555h1v9h-1zM1041 556h3v1h-3zM1041 562h3v1h-3zM1039 558h1v3h-1zM1045 558h1v3h-1zM1040 557h1v1h-1zM1044 557h1v1h-1zM1040 561h1v1h-1zM1044 561h1v1h-1zM1038 596h9v1h-9zM1042 592h1v9h-1zM1041 593h3v1h-3zM1041 599h3v1h-3zM1039 595h1v3h-1zM1045 595h1v3h-1zM1040 594h1v1h-1zM1044 594h1v1h-1zM1040 598h1v1h-1zM1044 598h1v1h-1zM1038 634h9v1h-9zM1042 630h1v9h-1zM1041 631h3v1h-3zM1041 637h3v1h-3zM1039 633h1v3h-1zM1045 633h1v3h-1zM1040 632h1v1h-1zM1044 632h1v1h-1zM1040 636h1v1h-1zM1044 636h1v1h-1zM1038 671h9v1h-9zM1042 667h1v9h-1zM1041 668h3v1h-3zM1041 674h3v1h-3zM1039 670h1v3h-1zM1045 670h1v3h-1zM1040 669h1v1h-1zM1044 669h1v1h-1zM1040 673h1v1h-1zM1044 673h1v1h-1zM1038 708h9v1h-9zM1042 704h1v9h-1zM1041 705h3v1h-3zM1041 711h3v1h-3zM1039 707h1v3h-1zM1045 707h1v3h-1zM1040 706h1v1h-1zM1044 706h1v1h-1zM1040 710h1v1h-1zM1044 710h1v1h-1zM1038 745h9v1h-9zM1042 741h1v9h-1zM1041 742h3v1h-3zM1041 748h3v1h-3zM1039 744h1v3h-1zM1045 744h1v3h-1zM1040 743h1v1h-1zM1044 743h1v1h-1zM1040 747h1v1h-1zM1044 747h1v1h-1zM1038 783h9v1h-9zM1042 779h1v9h-1zM1041 780h3v1h-3zM1041 786h3v1h-3zM1039 782h1v3h-1zM1045 782h1v3h-1zM1040 781h1v1h-1zM1044 781h1v1h-1zM1040 785h1v1h-1zM1044 785h1v1h-1zM1038 820h9v1h-9zM1042 816h1v9h-1zM1041 817h3v1h-3zM1041 823h3v1h-3zM1039 819h1v3h-1zM1045 819h1v3h-1zM1040 818h1v1h-1zM1044 818h1v1h-1zM1040 822h1v1h-1zM1044 822h1v1h-1zM1038 857h9v1h-9zM1042 853h1v9h-1zM1041 854h3v1h-3zM1041 860h3v1h-3zM1039 856h1v3h-1zM1045 856h1v3h-1zM1040 855h1v1h-1zM1044 855h1v1h-1zM1040 859h1v1h-1zM1044 859h1v1h-1zM1075 187h9v1h-9zM1079 183h1v9h-1zM1078 184h3v1h-3zM1078 190h3v1h-3zM1076 186h1v3h-1zM1082 186h1v3h-1zM1077 185h1v1h-1zM1081 185h1v1h-1zM1077 189h1v1h-1zM1081 189h1v1h-1zM1075 224h9v1h-9zM1079 220h1v9h-1zM1078 221h3v1h-3zM1078 227h3v1h-3zM1076 223h1v3h-1zM1082 223h1v3h-1zM1077 222h1v1h-1zM1081 222h1v1h-1zM1077 226h1v1h-1zM1081 226h1v1h-1zM1075 261h9v1h-9zM1079 257h1v9h-1zM1078 258h3v1h-3zM1078 264h3v1h-3zM1076 260h1v3h-1zM1082 260h1v3h-1zM1077 259h1v1h-1zM1081 259h1v1h-1zM1077 263h1v1h-1zM1081 263h1v1h-1zM1075 299h9v1h-9zM1079 295h1v9h-1zM1078 296h3v1h-3zM1078 302h3v1h-3zM1076 298h1v3h-1zM1082 298h1v3h-1zM1077 297h1v1h-1zM1081 297h1v1h-1zM1077 301h1v1h-1zM1081 301h1v1h-1zM1075 336h9v1h-9zM1079 332h1v9h-1zM1078 333h3v1h-3zM1078 339h3v1h-3zM1076 335h1v3h-1zM1082 335h1v3h-1zM1077 334h1v1h-1zM1081 334h1v1h-1zM1077 338h1v1h-1zM1081 338h1v1h-1zM1075 373h9v1h-9zM1079 369h1v9h-1zM1078 370h3v1h-3zM1078 376h3v1h-3zM1076 372h1v3h-1zM1082 372h1v3h-1zM1077 371h1v1h-1zM1081 371h1v1h-1zM1077 375h1v1h-1zM1081 375h1v1h-1zM1075 410h9v1h-9zM1079 406h1v9h-1zM1078 407h3v1h-3zM1078 413h3v1h-3zM1076 409h1v3h-1zM1082 409h1v3h-1zM1077 408h1v1h-1zM1081 408h1v1h-1zM1077 412h1v1h-1zM1081 412h1v1h-1zM1075 448h9v1h-9zM1079 444h1v9h-1zM1078 445h3v1h-3zM1078 451h3v1h-3zM1076 447h1v3h-1zM1082 447h1v3h-1zM1077 446h1v1h-1zM1081 446h1v1h-1zM1077 450h1v1h-1zM1081 450h1v1h-1zM1075 485h9v1h-9zM1079 481h1v9h-1zM1078 482h3v1h-3zM1078 488h3v1h-3zM1076 484h1v3h-1zM1082 484h1v3h-1zM1077 483h1v1h-1zM1081 483h1v1h-1zM1077 487h1v1h-1zM1081 487h1v1h-1zM1075 522h9v1h-9zM1079 518h1v9h-1zM1078 519h3v1h-3zM1078 525h3v1h-3zM1076 521h1v3h-1zM1082 521h1v3h-1zM1077 520h1v1h-1zM1081 520h1v1h-1zM1077 524h1v1h-1zM1081 524h1v1h-1zM1075 559h9v1h-9zM1079 555h1v9h-1zM1078 556h3v1h-3zM1078 562h3v1h-3zM1076 558h1v3h-1zM1082 558h1v3h-1zM1077 557h1v1h-1zM1081 557h1v1h-1zM1077 561h1v1h-1zM1081 561h1v1h-1zM1075 596h9v1h-9zM1079 592h1v9h-1zM1078 593h3v1h-3zM1078 599h3v1h-3zM1076 595h1v3h-1zM1082 595h1v3h-1zM1077 594h1v1h-1zM1081 594h1v1h-1zM1077 598h1v1h-1zM1081 598h1v1h-1zM1075 634h9v1h-9zM1079 630h1v9h-1zM1078 631h3v1h-3zM1078 637h3v1h-3zM1076 633h1v3h-1zM1082 633h1v3h-1zM1077 632h1v1h-1zM1081 632h1v1h-1zM1077 636h1v1h-1zM1081 636h1v1h-1zM1075 671h9v1h-9zM1079 667h1v9h-1zM1078 668h3v1h-3zM1078 674h3v1h-3zM1076 670h1v3h-1zM1082 670h1v3h-1zM1077 669h1v1h-1zM1081 669h1v1h-1zM1077 673h1v1h-1zM1081 673h1v1h-1zM1075 708h9v1h-9zM1079 704h1v9h-1zM1078 705h3v1h-3zM1078 711h3v1h-3zM1076 707h1v3h-1zM1082 707h1v3h-1zM1077 706h1v1h-1zM1081 706h1v1h-1zM1077 710h1v1h-1zM1081 710h1v1h-1zM1075 745h9v1h-9zM1079 741h1v9h-1zM1078 742h3v1h-3zM1078 748h3v1h-3zM1076 744h1v3h-1zM1082 744h1v3h-1zM1077 743h1v1h-1zM1081 743h1v1h-1zM1077 747h1v1h-1zM1081 747h1v1h-1zM1075 783h9v1h-9zM1079 779h1v9h-1zM1078 780h3v1h-3zM1078 786h3v1h-3zM1076 782h1v3h-1zM1082 782h1v3h-1zM1077 781h1v1h-1zM1081 781h1v1h-1zM1077 785h1v1h-1zM1081 785h1v1h-1zM1075 820h9v1h-9zM1079 816h1v9h-1zM1078 817h3v1h-3zM1078 823h3v1h-3zM1076 819h1v3h-1zM1082 819h1v3h-1zM1077 818h1v1h-1zM1081 818h1v1h-1zM1077 822h1v1h-1zM1081 822h1v1h-1zM1075 857h9v1h-9zM1079 853h1v9h-1zM1078 854h3v1h-3zM1078 860h3v1h-3zM1076 856h1v3h-1zM1082 856h1v3h-1zM1077 855h1v1h-1zM1081 855h1v1h-1zM1077 859h1v1h-1zM1081 859h1v1h-1zM1112 187h9v1h-9zM1116 183h1v9h-1zM1115 184h3v1h-3zM1115 190h3v1h-3zM1113 186h1v3h-1zM1119 186h1v3h-1zM1114 185h1v1h-1zM1118 185h1v1h-1zM1114 189h1v1h-1zM1118 189h1v1h-1zM1112 224h9v1h-9zM1116 220h1v9h-1zM1115 221h3v1h-3zM1115 227h3v1h-3zM1113 223h1v3h-1zM1119 223h1v3h-1zM1114 222h1v1h-1zM1118 222h1v1h-1zM1114 226h1v1h-1zM1118 226h1v1h-1zM1112 261h9v1h-9zM1116 257h1v9h-1zM1115 258h3v1h-3zM1115 264h3v1h-3zM1113 260h1v3h-1zM1119 260h1v3h-1zM1114 259h1v1h-1zM1118 259h1v1h-1zM1114 263h1v1h-1zM1118 263h1v1h-1zM1112 299h9v1h-9zM1116 295h1v9h-1zM1115 296h3v1h-3zM1115 302h3v1h-3zM1113 298h1v3h-1zM1119 298h1v3h-1zM1114 297h1v1h-1zM1118 297h1v1h-1zM1114 301h1v1h-1zM1118 301h1v1h-1zM1112 336h9v1h-9zM1116 332h1v9h-1zM1115 333h3v1h-3zM1115 339h3v1h-3zM1113 335h1v3h-1zM1119 335h1v3h-1zM1114 334h1v1h-1zM1118 334h1v1h-1zM1114 338h1v1h-1zM1118 338h1v1h-1zM1112 373h9v1h-9zM1116 369h1v9h-1zM1115 370h3v1h-3zM1115 376h3v1h-3zM1113 372h1v3h-1zM1119 372h1v3h-1zM1114 371h1v1h-1zM1118 371h1v1h-1zM1114 375h1v1h-1zM1118 375h1v1h-1zM1112 410h9v1h-9zM1116 406h1v9h-1zM1115 407h3v1h-3zM1115 413h3v1h-3zM1113 409h1v3h-1zM1119 409h1v3h-1zM1114 408h1v1h-1zM1118 408h1v1h-1zM1114 412h1v1h-1zM1118 412h1v1h-1zM1112 448h9v1h-9zM1116 444h1v9h-1zM1115 445h3v1h-3zM1115 451h3v1h-3zM1113 447h1v3h-1zM1119 447h1v3h-1zM1114 446h1v1h-1zM1118 446h1v1h-1zM1114 450h1v1h-1zM1118 450h1v1h-1zM1112 485h9v1h-9zM1116 481h1v9h-1zM1115 482h3v1h-3zM1115 488h3v1h-3zM1113 484h1v3h-1zM1119 484h1v3h-1zM1114 483h1v1h-1zM1118 483h1v1h-1zM1114 487h1v1h-1zM1118 487h1v1h-1zM1112 522h9v1h-9zM1116 518h1v9h-1zM1115 519h3v1h-3zM1115 525h3v1h-3zM1113 521h1v3h-1zM1119 521h1v3h-1zM1114 520h1v1h-1zM1118 520h1v1h-1zM1114 524h1v1h-1zM1118 524h1v1h-1zM1112 559h9v1h-9zM1116 555h1v9h-1zM1115 556h3v1h-3zM1115 562h3v1h-3zM1113 558h1v3h-1zM1119 558h1v3h-1zM1114 557h1v1h-1zM1118 557h1v1h-1zM1114 561h1v1h-1zM1118 561h1v1h-1zM1112 596h9v1h-9zM1116 592h1v9h-1zM1115 593h3v1h-3zM1115 599h3v1h-3zM1113 595h1v3h-1zM1119 595h1v3h-1zM1114 594h1v1h-1zM1118 594h1v1h-1zM1114 598h1v1h-1zM1118 598h1v1h-1zM1112 634h9v1h-9zM1116 630h1v9h-1zM1115 631h3v1h-3zM1115 637h3v1h-3zM1113 633h1v3h-1zM1119 633h1v3h-1zM1114 632h1v1h-1zM1118 632h1v1h-1zM1114 636h1v1h-1zM1118 636h1v1h-1zM1112 671h9v1h-9zM1116 667h1v9h-1zM1115 668h3v1h-3zM1115 674h3v1h-3zM1113 670h1v3h-1zM1119 670h1v3h-1zM1114 669h1v1h-1zM1118 669h1v1h-1zM1114 673h1v1h-1zM1118 673h1v1h-1zM1112 708h9v1h-9zM1116 704h1v9h-1zM1115 705h3v1h-3zM1115 711h3v1h-3zM1113 707h1v3h-1zM1119 707h1v3h-1zM1114 706h1v1h-1zM1118 706h1v1h-1zM1114 710h1v1h-1zM1118 710h1v1h-1zM1112 745h9v1h-9zM1116 741h1v9h-1zM1115 742h3v1h-3zM1115 748h3v1h-3zM1113 744h1v3h-1zM1119 744h1v3h-1zM1114 743h1v1h-1zM1118 743h1v1h-1zM1114 747h1v1h-1zM1118 747h1v1h-1zM1112 783h9v1h-9zM1116 779h1v9h-1zM1115 780h3v1h-3zM1115 786h3v1h-3zM1113 782h1v3h-1zM1119 782h1v3h-1zM1114 781h1v1h-1zM1118 781h1v1h-1zM1114 785h1v1h-1zM1118 785h1v1h-1zM1112 820h9v1h-9zM1116 816h1v9h-1zM1115 817h3v1h-3zM1115 823h3v1h-3zM1113 819h1v3h-1zM1119 819h1v3h-1zM1114 818h1v1h-1zM1118 818h1v1h-1zM1114 822h1v1h-1zM1118 822h1v1h-1zM1112 857h9v1h-9zM1116 853h1v9h-1zM1115 854h3v1h-3zM1115 860h3v1h-3zM1113 856h1v3h-1zM1119 856h1v3h-1zM1114 855h1v1h-1zM1118 855h1v1h-1zM1114 859h1v1h-1zM1118 859h1v1h-1zM1150 187h9v1h-9zM1154 183h1v9h-1zM1153 184h3v1h-3zM1153 190h3v1h-3zM1151 186h1v3h-1zM1157 186h1v3h-1zM1152 185h1v1h-1zM1156 185h1v1h-1zM1152 189h1v1h-1zM1156 189h1v1h-1zM1150 224h9v1h-9zM1154 220h1v9h-1zM1153 221h3v1h-3zM1153 227h3v1h-3zM1151 223h1v3h-1zM1157 223h1v3h-1zM1152 222h1v1h-1zM1156 222h1v1h-1zM1152 226h1v1h-1zM1156 226h1v1h-1zM1150 261h9v1h-9zM1154 257h1v9h-1zM1153 258h3v1h-3zM1153 264h3v1h-3zM1151 260h1v3h-1zM1157 260h1v3h-1zM1152 259h1v1h-1zM1156 259h1v1h-1zM1152 263h1v1h-1zM1156 263h1v1h-1zM1150 299h9v1h-9zM1154 295h1v9h-1zM1153 296h3v1h-3zM1153 302h3v1h-3zM1151 298h1v3h-1zM1157 298h1v3h-1zM1152 297h1v1h-1zM1156 297h1v1h-1zM1152 301h1v1h-1zM1156 301h1v1h-1zM1150 336h9v1h-9zM1154 332h1v9h-1zM1153 333h3v1h-3zM1153 339h3v1h-3zM1151 335h1v3h-1zM1157 335h1v3h-1zM1152 334h1v1h-1zM1156 334h1v1h-1zM1152 338h1v1h-1zM1156 338h1v1h-1zM1150 373h9v1h-9zM1154 369h1v9h-1zM1153 370h3v1h-3zM1153 376h3v1h-3zM1151 372h1v3h-1zM1157 372h1v3h-1zM1152 371h1v1h-1zM1156 371h1v1h-1zM1152 375h1v1h-1zM1156 375h1v1h-1zM1150 410h9v1h-9zM1154 406h1v9h-1zM1153 407h3v1h-3zM1153 413h3v1h-3zM1151 409h1v3h-1zM1157 409h1v3h-1zM1152 408h1v1h-1zM1156 408h1v1h-1zM1152 412h1v1h-1zM1156 412h1v1h-1zM1150 448h9v1h-9zM1154 444h1v9h-1zM1153 445h3v1h-3zM1153 451h3v1h-3zM1151 447h1v3h-1zM1157 447h1v3h-1zM1152 446h1v1h-1zM1156 446h1v1h-1zM1152 450h1v1h-1zM1156 450h1v1h-1zM1150 485h9v1h-9zM1154 481h1v9h-1zM1153 482h3v1h-3zM1153 488h3v1h-3zM1151 484h1v3h-1zM1157 484h1v3h-1zM1152 483h1v1h-1zM1156 483h1v1h-1zM1152 487h1v1h-1zM1156 487h1v1h-1zM1150 522h9v1h-9zM1154 518h1v9h-1zM1153 519h3v1h-3zM1153 525h3v1h-3zM1151 521h1v3h-1zM1157 521h1v3h-1zM1152 520h1v1h-1zM1156 520h1v1h-1zM1152 524h1v1h-1zM1156 524h1v1h-1zM1150 559h9v1h-9zM1154 555h1v9h-1zM1153 556h3v1h-3zM1153 562h3v1h-3zM1151 558h1v3h-1zM1157 558h1v3h-1zM1152 557h1v1h-1zM1156 557h1v1h-1zM1152 561h1v1h-1zM1156 561h1v1h-1zM1150 596h9v1h-9zM1154 592h1v9h-1zM1153 593h3v1h-3zM1153 599h3v1h-3zM1151 595h1v3h-1zM1157 595h1v3h-1zM1152 594h1v1h-1zM1156 594h1v1h-1zM1152 598h1v1h-1zM1156 598h1v1h-1zM1150 634h9v1h-9zM1154 630h1v9h-1zM1153 631h3v1h-3zM1153 637h3v1h-3zM1151 633h1v3h-1zM1157 633h1v3h-1zM1152 632h1v1h-1zM1156 632h1v1h-1zM1152 636h1v1h-1zM1156 636h1v1h-1zM1150 671h9v1h-9zM1154 667h1v9h-1zM1153 668h3v1h-3zM1153 674h3v1h-3zM1151 670h1v3h-1zM1157 670h1v3h-1zM1152 669h1v1h-1zM1156 669h1v1h-1zM1152 673h1v1h-1zM1156 673h1v1h-1zM1150 708h9v1h-9zM1154 704h1v9h-1zM1153 705h3v1h-3zM1153 711h3v1h-3zM1151 707h1v3h-1zM1157 707h1v3h-1zM1152 706h1v1h-1zM1156 706h1v1h-1zM1152 710h1v1h-1zM1156 710h1v1h-1zM1150 745h9v1h-9zM1154 741h1v9h-1zM1153 742h3v1h-3zM1153 748h3v1h-3zM1151 744h1v3h-1zM1157 744h1v3h-1zM1152 743h1v1h-1zM1156 743h1v1h-1zM1152 747h1v1h-1zM1156 747h1v1h-1zM1150 783h9v1h-9zM1154 779h1v9h-1zM1153 780h3v1h-3zM1153 786h3v1h-3zM1151 782h1v3h-1zM1157 782h1v3h-1zM1152 781h1v1h-1zM1156 781h1v1h-1zM1152 785h1v1h-1zM1156 785h1v1h-1zM1150 820h9v1h-9zM1154 816h1v9h-1zM1153 817h3v1h-3zM1153 823h3v1h-3zM1151 819h1v3h-1zM1157 819h1v3h-1zM1152 818h1v1h-1zM1156 818h1v1h-1zM1152 822h1v1h-1zM1156 822h1v1h-1zM1150 857h9v1h-9zM1154 853h1v9h-1zM1153 854h3v1h-3zM1153 860h3v1h-3zM1151 856h1v3h-1zM1157 856h1v3h-1zM1152 855h1v1h-1zM1156 855h1v1h-1zM1152 859h1v1h-1zM1156 859h1v1h-1zM1187 187h9v1h-9zM1191 183h1v9h-1zM1190 184h3v1h-3zM1190 190h3v1h-3zM1188 186h1v3h-1zM1194 186h1v3h-1zM1189 185h1v1h-1zM1193 185h1v1h-1zM1189 189h1v1h-1zM1193 189h1v1h-1zM1187 224h9v1h-9zM1191 220h1v9h-1zM1190 221h3v1h-3zM1190 227h3v1h-3zM1188 223h1v3h-1zM1194 223h1v3h-1zM1189 222h1v1h-1zM1193 222h1v1h-1zM1189 226h1v1h-1zM1193 226h1v1h-1zM1187 261h9v1h-9zM1191 257h1v9h-1zM1190 258h3v1h-3zM1190 264h3v1h-3zM1188 260h1v3h-1zM1194 260h1v3h-1zM1189 259h1v1h-1zM1193 259h1v1h-1zM1189 263h1v1h-1zM1193 263h1v1h-1zM1187 299h9v1h-9zM1191 295h1v9h-1zM1190 296h3v1h-3zM1190 302h3v1h-3zM1188 298h1v3h-1zM1194 298h1v3h-1zM1189 297h1v1h-1zM1193 297h1v1h-1zM1189 301h1v1h-1zM1193 301h1v1h-1zM1187 336h9v1h-9zM1191 332h1v9h-1zM1190 333h3v1h-3zM1190 339h3v1h-3zM1188 335h1v3h-1zM1194 335h1v3h-1zM1189 334h1v1h-1zM1193 334h1v1h-1zM1189 338h1v1h-1zM1193 338h1v1h-1zM1187 373h9v1h-9zM1191 369h1v9h-1zM1190 370h3v1h-3zM1190 376h3v1h-3zM1188 372h1v3h-1zM1194 372h1v3h-1zM1189 371h1v1h-1zM1193 371h1v1h-1zM1189 375h1v1h-1zM1193 375h1v1h-1zM1187 410h9v1h-9zM1191 406h1v9h-1zM1190 407h3v1h-3zM1190 413h3v1h-3zM1188 409h1v3h-1zM1194 409h1v3h-1zM1189 408h1v1h-1zM1193 408h1v1h-1zM1189 412h1v1h-1zM1193 412h1v1h-1zM1187 448h9v1h-9zM1191 444h1v9h-1zM1190 445h3v1h-3zM1190 451h3v1h-3zM1188 447h1v3h-1zM1194 447h1v3h-1zM1189 446h1v1h-1zM1193 446h1v1h-1zM1189 450h1v1h-1zM1193 450h1v1h-1zM1187 485h9v1h-9zM1191 481h1v9h-1zM1190 482h3v1h-3zM1190 488h3v1h-3zM1188 484h1v3h-1zM1194 484h1v3h-1zM1189 483h1v1h-1zM1193 483h1v1h-1zM1189 487h1v1h-1zM1193 487h1v1h-1zM1187 522h9v1h-9zM1191 518h1v9h-1zM1190 519h3v1h-3zM1190 525h3v1h-3zM1188 521h1v3h-1zM1194 521h1v3h-1zM1189 520h1v1h-1zM1193 520h1v1h-1zM1189 524h1v1h-1zM1193 524h1v1h-1zM1187 559h9v1h-9zM1191 555h1v9h-1zM1190 556h3v1h-3zM1190 562h3v1h-3zM1188 558h1v3h-1zM1194 558h1v3h-1zM1189 557h1v1h-1zM1193 557h1v1h-1zM1189 561h1v1h-1zM1193 561h1v1h-1zM1187 596h9v1h-9zM1191 592h1v9h-1zM1190 593h3v1h-3zM1190 599h3v1h-3zM1188 595h1v3h-1zM1194 595h1v3h-1zM1189 594h1v1h-1zM1193 594h1v1h-1zM1189 598h1v1h-1zM1193 598h1v1h-1zM1187 634h9v1h-9zM1191 630h1v9h-1zM1190 631h3v1h-3zM1190 637h3v1h-3zM1188 633h1v3h-1zM1194 633h1v3h-1zM1189 632h1v1h-1zM1193 632h1v1h-1zM1189 636h1v1h-1zM1193 636h1v1h-1zM1187 671h9v1h-9zM1191 667h1v9h-1zM1190 668h3v1h-3zM1190 674h3v1h-3zM1188 670h1v3h-1zM1194 670h1v3h-1zM1189 669h1v1h-1zM1193 669h1v1h-1zM1189 673h1v1h-1zM1193 673h1v1h-1zM1187 708h9v1h-9zM1191 704h1v9h-1zM1190 705h3v1h-3zM1190 711h3v1h-3zM1188 707h1v3h-1zM1194 707h1v3h-1zM1189 706h1v1h-1zM1193 706h1v1h-1zM1189 710h1v1h-1zM1193 710h1v1h-1zM1187 745h9v1h-9zM1191 741h1v9h-1zM1190 742h3v1h-3zM1190 748h3v1h-3zM1188 744h1v3h-1zM1194 744h1v3h-1zM1189 743h1v1h-1zM1193 743h1v1h-1zM1189 747h1v1h-1zM1193 747h1v1h-1zM1187 783h9v1h-9zM1191 779h1v9h-1zM1190 780h3v1h-3zM1190 786h3v1h-3zM1188 782h1v3h-1zM1194 782h1v3h-1zM1189 781h1v1h-1zM1193 781h1v1h-1zM1189 785h1v1h-1zM1193 785h1v1h-1zM1187 820h9v1h-9zM1191 816h1v9h-1zM1190 817h3v1h-3zM1190 823h3v1h-3zM1188 819h1v3h-1zM1194 819h1v3h-1zM1189 818h1v1h-1zM1193 818h1v1h-1zM1189 822h1v1h-1zM1193 822h1v1h-1zM1187 857h9v1h-9zM1191 853h1v9h-1zM1190 854h3v1h-3zM1190 860h3v1h-3zM1188 856h1v3h-1zM1194 856h1v3h-1zM1189 855h1v1h-1zM1193 855h1v1h-1zM1189 859h1v1h-1zM1193 859h1v1h-1zM1224 187h9v1h-9zM1228 183h1v9h-1zM1227 184h3v1h-3zM1227 190h3v1h-3zM1225 186h1v3h-1zM1231 186h1v3h-1zM1226 185h1v1h-1zM1230 185h1v1h-1zM1226 189h1v1h-1zM1230 189h1v1h-1zM1224 224h9v1h-9zM1228 220h1v9h-1zM1227 221h3v1h-3zM1227 227h3v1h-3zM1225 223h1v3h-1zM1231 223h1v3h-1zM1226 222h1v1h-1zM1230 222h1v1h-1zM1226 226h1v1h-1zM1230 226h1v1h-1zM1224 261h9v1h-9zM1228 257h1v9h-1zM1227 258h3v1h-3zM1227 264h3v1h-3zM1225 260h1v3h-1zM1231 260h1v3h-1zM1226 259h1v1h-1zM1230 259h1v1h-1zM1226 263h1v1h-1zM1230 263h1v1h-1zM1224 299h9v1h-9zM1228 295h1v9h-1zM1227 296h3v1h-3zM1227 302h3v1h-3zM1225 298h1v3h-1zM1231 298h1v3h-1zM1226 297h1v1h-1zM1230 297h1v1h-1zM1226 301h1v1h-1zM1230 301h1v1h-1zM1224 336h9v1h-9zM1228 332h1v9h-1zM1227 333h3v1h-3zM1227 339h3v1h-3zM1225 335h1v3h-1zM1231 335h1v3h-1zM1226 334h1v1h-1zM1230 334h1v1h-1zM1226 338h1v1h-1zM1230 338h1v1h-1zM1224 373h9v1h-9zM1228 369h1v9h-1zM1227 370h3v1h-3zM1227 376h3v1h-3zM1225 372h1v3h-1zM1231 372h1v3h-1zM1226 371h1v1h-1zM1230 371h1v1h-1zM1226 375h1v1h-1zM1230 375h1v1h-1zM1224 410h9v1h-9zM1228 406h1v9h-1zM1227 407h3v1h-3zM1227 413h3v1h-3zM1225 409h1v3h-1zM1231 409h1v3h-1zM1226 408h1v1h-1zM1230 408h1v1h-1zM1226 412h1v1h-1zM1230 412h1v1h-1zM1224 448h9v1h-9zM1228 444h1v9h-1zM1227 445h3v1h-3zM1227 451h3v1h-3zM1225 447h1v3h-1zM1231 447h1v3h-1zM1226 446h1v1h-1zM1230 446h1v1h-1zM1226 450h1v1h-1zM1230 450h1v1h-1zM1224 485h9v1h-9zM1228 481h1v9h-1zM1227 482h3v1h-3zM1227 488h3v1h-3zM1225 484h1v3h-1zM1231 484h1v3h-1zM1226 483h1v1h-1zM1230 483h1v1h-1zM1226 487h1v1h-1zM1230 487h1v1h-1zM1224 522h9v1h-9zM1228 518h1v9h-1zM1227 519h3v1h-3zM1227 525h3v1h-3zM1225 521h1v3h-1zM1231 521h1v3h-1zM1226 520h1v1h-1zM1230 520h1v1h-1zM1226 524h1v1h-1zM1230 524h1v1h-1zM1224 559h9v1h-9zM1228 555h1v9h-1zM1227 556h3v1h-3zM1227 562h3v1h-3zM1225 558h1v3h-1zM1231 558h1v3h-1zM1226 557h1v1h-1zM1230 557h1v1h-1zM1226 561h1v1h-1zM1230 561h1v1h-1zM1224 596h9v1h-9zM1228 592h1v9h-1zM1227 593h3v1h-3zM1227 599h3v1h-3zM1225 595h1v3h-1zM1231 595h1v3h-1zM1226 594h1v1h-1zM1230 594h1v1h-1zM1226 598h1v1h-1zM1230 598h1v1h-1zM1224 634h9v1h-9zM1228 630h1v9h-1zM1227 631h3v1h-3zM1227 637h3v1h-3zM1225 633h1v3h-1zM1231 633h1v3h-1zM1226 632h1v1h-1zM1230 632h1v1h-1zM1226 636h1v1h-1zM1230 636h1v1h-1zM1224 671h9v1h-9zM1228 667h1v9h-1zM1227 668h3v1h-3zM1227 674h3v1h-3zM1225 670h1v3h-1zM1231 670h1v3h-1zM1226 669h1v1h-1zM1230 669h1v1h-1zM1226 673h1v1h-1zM1230 673h1v1h-1zM1224 708h9v1h-9zM1228 704h1v9h-1zM1227 705h3v1h-3zM1227 711h3v1h-3zM1225 707h1v3h-1zM1231 707h1v3h-1zM1226 706h1v1h-1zM1230 706h1v1h-1zM1226 710h1v1h-1zM1230 710h1v1h-1zM1224 745h9v1h-9zM1228 741h1v9h-1zM1227 742h3v1h-3zM1227 748h3v1h-3zM1225 744h1v3h-1zM1231 744h1v3h-1zM1226 743h1v1h-1zM1230 743h1v1h-1zM1226 747h1v1h-1zM1230 747h1v1h-1zM1224 783h9v1h-9zM1228 779h1v9h-1zM1227 780h3v1h-3zM1227 786h3v1h-3zM1225 782h1v3h-1zM1231 782h1v3h-1zM1226 781h1v1h-1zM1230 781h1v1h-1zM1226 785h1v1h-1zM1230 785h1v1h-1zM1224 820h9v1h-9zM1228 816h1v9h-1zM1227 817h3v1h-3zM1227 823h3v1h-3zM1225 819h1v3h-1zM1231 819h1v3h-1zM1226 818h1v1h-1zM1230 818h1v1h-1zM1226 822h1v1h-1zM1230 822h1v1h-1zM1224 857h9v1h-9zM1228 853h1v9h-1zM1227 854h3v1h-3zM1227 860h3v1h-3zM1225 856h1v3h-1zM1231 856h1v3h-1zM1226 855h1v1h-1zM1230 855h1v1h-1zM1226 859h1v1h-1zM1230 859h1v1h-1zM1261 224h9v1h-9zM1265 220h1v9h-1zM1264 221h3v1h-3zM1264 227h3v1h-3zM1262 223h1v3h-1zM1268 223h1v3h-1zM1263 222h1v1h-1zM1267 222h1v1h-1zM1263 226h1v1h-1zM1267 226h1v1h-1zM1261 261h9v1h-9zM1265 257h1v9h-1zM1264 258h3v1h-3zM1264 264h3v1h-3zM1262 260h1v3h-1zM1268 260h1v3h-1zM1263 259h1v1h-1zM1267 259h1v1h-1zM1263 263h1v1h-1zM1267 263h1v1h-1zM1261 299h9v1h-9zM1265 295h1v9h-1zM1264 296h3v1h-3zM1264 302h3v1h-3zM1262 298h1v3h-1zM1268 298h1v3h-1zM1263 297h1v1h-1zM1267 297h1v1h-1zM1263 301h1v1h-1zM1267 301h1v1h-1zM1261 336h9v1h-9zM1265 332h1v9h-1zM1264 333h3v1h-3zM1264 339h3v1h-3zM1262 335h1v3h-1zM1268 335h1v3h-1zM1263 334h1v1h-1zM1267 334h1v1h-1zM1263 338h1v1h-1zM1267 338h1v1h-1zM1261 373h9v1h-9zM1265 369h1v9h-1zM1264 370h3v1h-3zM1264 376h3v1h-3zM1262 372h1v3h-1zM1268 372h1v3h-1zM1263 371h1v1h-1zM1267 371h1v1h-1zM1263 375h1v1h-1zM1267 375h1v1h-1zM1261 410h9v1h-9zM1265 406h1v9h-1zM1264 407h3v1h-3zM1264 413h3v1h-3zM1262 409h1v3h-1zM1268 409h1v3h-1zM1263 408h1v1h-1zM1267 408h1v1h-1zM1263 412h1v1h-1zM1267 412h1v1h-1zM1261 448h9v1h-9zM1265 444h1v9h-1zM1264 445h3v1h-3zM1264 451h3v1h-3zM1262 447h1v3h-1zM1268 447h1v3h-1zM1263 446h1v1h-1zM1267 446h1v1h-1zM1263 450h1v1h-1zM1267 450h1v1h-1zM1261 485h9v1h-9zM1265 481h1v9h-1zM1264 482h3v1h-3zM1264 488h3v1h-3zM1262 484h1v3h-1zM1268 484h1v3h-1zM1263 483h1v1h-1zM1267 483h1v1h-1zM1263 487h1v1h-1zM1267 487h1v1h-1zM1261 522h9v1h-9zM1265 518h1v9h-1zM1264 519h3v1h-3zM1264 525h3v1h-3zM1262 521h1v3h-1zM1268 521h1v3h-1zM1263 520h1v1h-1zM1267 520h1v1h-1zM1263 524h1v1h-1zM1267 524h1v1h-1zM1261 559h9v1h-9zM1265 555h1v9h-1zM1264 556h3v1h-3zM1264 562h3v1h-3zM1262 558h1v3h-1zM1268 558h1v3h-1zM1263 557h1v1h-1zM1267 557h1v1h-1zM1263 561h1v1h-1zM1267 561h1v1h-1zM1261 596h9v1h-9zM1265 592h1v9h-1zM1264 593h3v1h-3zM1264 599h3v1h-3zM1262 595h1v3h-1zM1268 595h1v3h-1zM1263 594h1v1h-1zM1267 594h1v1h-1zM1263 598h1v1h-1zM1267 598h1v1h-1zM1261 634h9v1h-9zM1265 630h1v9h-1zM1264 631h3v1h-3zM1264 637h3v1h-3zM1262 633h1v3h-1zM1268 633h1v3h-1zM1263 632h1v1h-1zM1267 632h1v1h-1zM1263 636h1v1h-1zM1267 636h1v1h-1zM1261 671h9v1h-9zM1265 667h1v9h-1zM1264 668h3v1h-3zM1264 674h3v1h-3zM1262 670h1v3h-1zM1268 670h1v3h-1zM1263 669h1v1h-1zM1267 669h1v1h-1zM1263 673h1v1h-1zM1267 673h1v1h-1zM1261 708h9v1h-9zM1265 704h1v9h-1zM1264 705h3v1h-3zM1264 711h3v1h-3zM1262 707h1v3h-1zM1268 707h1v3h-1zM1263 706h1v1h-1zM1267 706h1v1h-1zM1263 710h1v1h-1zM1267 710h1v1h-1zM1261 745h9v1h-9zM1265 741h1v9h-1zM1264 742h3v1h-3zM1264 748h3v1h-3zM1262 744h1v3h-1zM1268 744h1v3h-1zM1263 743h1v1h-1zM1267 743h1v1h-1zM1263 747h1v1h-1zM1267 747h1v1h-1zM1261 783h9v1h-9zM1265 779h1v9h-1zM1264 780h3v1h-3zM1264 786h3v1h-3zM1262 782h1v3h-1zM1268 782h1v3h-1zM1263 781h1v1h-1zM1267 781h1v1h-1zM1263 785h1v1h-1zM1267 785h1v1h-1zM1261 820h9v1h-9zM1265 816h1v9h-1zM1264 817h3v1h-3zM1264 823h3v1h-3zM1262 819h1v3h-1zM1268 819h1v3h-1zM1263 818h1v1h-1zM1267 818h1v1h-1zM1263 822h1v1h-1zM1267 822h1v1h-1zM1298 224h9v1h-9zM1302 220h1v9h-1zM1301 221h3v1h-3zM1301 227h3v1h-3zM1299 223h1v3h-1zM1305 223h1v3h-1zM1300 222h1v1h-1zM1304 222h1v1h-1zM1300 226h1v1h-1zM1304 226h1v1h-1zM1298 261h9v1h-9zM1302 257h1v9h-1zM1301 258h3v1h-3zM1301 264h3v1h-3zM1299 260h1v3h-1zM1305 260h1v3h-1zM1300 259h1v1h-1zM1304 259h1v1h-1zM1300 263h1v1h-1zM1304 263h1v1h-1zM1298 299h9v1h-9zM1302 295h1v9h-1zM1301 296h3v1h-3zM1301 302h3v1h-3zM1299 298h1v3h-1zM1305 298h1v3h-1zM1300 297h1v1h-1zM1304 297h1v1h-1zM1300 301h1v1h-1zM1304 301h1v1h-1zM1298 336h9v1h-9zM1302 332h1v9h-1zM1301 333h3v1h-3zM1301 339h3v1h-3zM1299 335h1v3h-1zM1305 335h1v3h-1zM1300 334h1v1h-1zM1304 334h1v1h-1zM1300 338h1v1h-1zM1304 338h1v1h-1zM1298 373h9v1h-9zM1302 369h1v9h-1zM1301 370h3v1h-3zM1301 376h3v1h-3zM1299 372h1v3h-1zM1305 372h1v3h-1zM1300 371h1v1h-1zM1304 371h1v1h-1zM1300 375h1v1h-1zM1304 375h1v1h-1zM1298 410h9v1h-9zM1302 406h1v9h-1zM1301 407h3v1h-3zM1301 413h3v1h-3zM1299 409h1v3h-1zM1305 409h1v3h-1zM1300 408h1v1h-1zM1304 408h1v1h-1zM1300 412h1v1h-1zM1304 412h1v1h-1zM1298 448h9v1h-9zM1302 444h1v9h-1zM1301 445h3v1h-3zM1301 451h3v1h-3zM1299 447h1v3h-1zM1305 447h1v3h-1zM1300 446h1v1h-1zM1304 446h1v1h-1zM1300 450h1v1h-1zM1304 450h1v1h-1zM1298 485h9v1h-9zM1302 481h1v9h-1zM1301 482h3v1h-3zM1301 488h3v1h-3zM1299 484h1v3h-1zM1305 484h1v3h-1zM1300 483h1v1h-1zM1304 483h1v1h-1zM1300 487h1v1h-1zM1304 487h1v1h-1zM1298 522h9v1h-9zM1302 518h1v9h-1zM1301 519h3v1h-3zM1301 525h3v1h-3zM1299 521h1v3h-1zM1305 521h1v3h-1zM1300 520h1v1h-1zM1304 520h1v1h-1zM1300 524h1v1h-1zM1304 524h1v1h-1zM1298 559h9v1h-9zM1302 555h1v9h-1zM1301 556h3v1h-3zM1301 562h3v1h-3zM1299 558h1v3h-1zM1305 558h1v3h-1zM1300 557h1v1h-1zM1304 557h1v1h-1zM1300 561h1v1h-1zM1304 561h1v1h-1zM1298 596h9v1h-9zM1302 592h1v9h-1zM1301 593h3v1h-3zM1301 599h3v1h-3zM1299 595h1v3h-1zM1305 595h1v3h-1zM1300 594h1v1h-1zM1304 594h1v1h-1zM1300 598h1v1h-1zM1304 598h1v1h-1zM1298 634h9v1h-9zM1302 630h1v9h-1zM1301 631h3v1h-3zM1301 637h3v1h-3zM1299 633h1v3h-1zM1305 633h1v3h-1zM1300 632h1v1h-1zM1304 632h1v1h-1zM1300 636h1v1h-1zM1304 636h1v1h-1zM1298 671h9v1h-9zM1302 667h1v9h-1zM1301 668h3v1h-3zM1301 674h3v1h-3zM1299 670h1v3h-1zM1305 670h1v3h-1zM1300 669h1v1h-1zM1304 669h1v1h-1zM1300 673h1v1h-1zM1304 673h1v1h-1zM1298 708h9v1h-9zM1302 704h1v9h-1zM1301 705h3v1h-3zM1301 711h3v1h-3zM1299 707h1v3h-1zM1305 707h1v3h-1zM1300 706h1v1h-1zM1304 706h1v1h-1zM1300 710h1v1h-1zM1304 710h1v1h-1zM1298 745h9v1h-9zM1302 741h1v9h-1zM1301 742h3v1h-3zM1301 748h3v1h-3zM1299 744h1v3h-1zM1305 744h1v3h-1zM1300 743h1v1h-1zM1304 743h1v1h-1zM1300 747h1v1h-1zM1304 747h1v1h-1zM1298 783h9v1h-9zM1302 779h1v9h-1zM1301 780h3v1h-3zM1301 786h3v1h-3zM1299 782h1v3h-1zM1305 782h1v3h-1zM1300 781h1v1h-1zM1304 781h1v1h-1zM1300 785h1v1h-1zM1304 785h1v1h-1zM1298 820h9v1h-9zM1302 816h1v9h-1zM1301 817h3v1h-3zM1301 823h3v1h-3zM1299 819h1v3h-1zM1305 819h1v3h-1zM1300 818h1v1h-1zM1304 818h1v1h-1zM1300 822h1v1h-1zM1304 822h1v1h-1zM1336 261h9v1h-9zM1340 257h1v9h-1zM1339 258h3v1h-3zM1339 264h3v1h-3zM1337 260h1v3h-1zM1343 260h1v3h-1zM1338 259h1v1h-1zM1342 259h1v1h-1zM1338 263h1v1h-1zM1342 263h1v1h-1zM1336 299h9v1h-9zM1340 295h1v9h-1zM1339 296h3v1h-3zM1339 302h3v1h-3zM1337 298h1v3h-1zM1343 298h1v3h-1zM1338 297h1v1h-1zM1342 297h1v1h-1zM1338 301h1v1h-1zM1342 301h1v1h-1zM1336 336h9v1h-9zM1340 332h1v9h-1zM1339 333h3v1h-3zM1339 339h3v1h-3zM1337 335h1v3h-1zM1343 335h1v3h-1zM1338 334h1v1h-1zM1342 334h1v1h-1zM1338 338h1v1h-1zM1342 338h1v1h-1zM1336 373h9v1h-9zM1340 369h1v9h-1zM1339 370h3v1h-3zM1339 376h3v1h-3zM1337 372h1v3h-1zM1343 372h1v3h-1zM1338 371h1v1h-1zM1342 371h1v1h-1zM1338 375h1v1h-1zM1342 375h1v1h-1zM1336 410h9v1h-9zM1340 406h1v9h-1zM1339 407h3v1h-3zM1339 413h3v1h-3zM1337 409h1v3h-1zM1343 409h1v3h-1zM1338 408h1v1h-1zM1342 408h1v1h-1zM1338 412h1v1h-1zM1342 412h1v1h-1zM1336 448h9v1h-9zM1340 444h1v9h-1zM1339 445h3v1h-3zM1339 451h3v1h-3zM1337 447h1v3h-1zM1343 447h1v3h-1zM1338 446h1v1h-1zM1342 446h1v1h-1zM1338 450h1v1h-1zM1342 450h1v1h-1zM1336 485h9v1h-9zM1340 481h1v9h-1zM1339 482h3v1h-3zM1339 488h3v1h-3zM1337 484h1v3h-1zM1343 484h1v3h-1zM1338 483h1v1h-1zM1342 483h1v1h-1zM1338 487h1v1h-1zM1342 487h1v1h-1zM1336 522h9v1h-9zM1340 518h1v9h-1zM1339 519h3v1h-3zM1339 525h3v1h-3zM1337 521h1v3h-1zM1343 521h1v3h-1zM1338 520h1v1h-1zM1342 520h1v1h-1zM1338 524h1v1h-1zM1342 524h1v1h-1zM1336 559h9v1h-9zM1340 555h1v9h-1zM1339 556h3v1h-3zM1339 562h3v1h-3zM1337 558h1v3h-1zM1343 558h1v3h-1zM1338 557h1v1h-1zM1342 557h1v1h-1zM1338 561h1v1h-1zM1342 561h1v1h-1zM1336 596h9v1h-9zM1340 592h1v9h-1zM1339 593h3v1h-3zM1339 599h3v1h-3zM1337 595h1v3h-1zM1343 595h1v3h-1zM1338 594h1v1h-1zM1342 594h1v1h-1zM1338 598h1v1h-1zM1342 598h1v1h-1zM1336 634h9v1h-9zM1340 630h1v9h-1zM1339 631h3v1h-3zM1339 637h3v1h-3zM1337 633h1v3h-1zM1343 633h1v3h-1zM1338 632h1v1h-1zM1342 632h1v1h-1zM1338 636h1v1h-1zM1342 636h1v1h-1zM1336 671h9v1h-9zM1340 667h1v9h-1zM1339 668h3v1h-3zM1339 674h3v1h-3zM1337 670h1v3h-1zM1343 670h1v3h-1zM1338 669h1v1h-1zM1342 669h1v1h-1zM1338 673h1v1h-1zM1342 673h1v1h-1zM1336 708h9v1h-9zM1340 704h1v9h-1zM1339 705h3v1h-3zM1339 711h3v1h-3zM1337 707h1v3h-1zM1343 707h1v3h-1zM1338 706h1v1h-1zM1342 706h1v1h-1zM1338 710h1v1h-1zM1342 710h1v1h-1zM1336 745h9v1h-9zM1340 741h1v9h-1zM1339 742h3v1h-3zM1339 748h3v1h-3zM1337 744h1v3h-1zM1343 744h1v3h-1zM1338 743h1v1h-1zM1342 743h1v1h-1zM1338 747h1v1h-1zM1342 747h1v1h-1zM1336 783h9v1h-9zM1340 779h1v9h-1zM1339 780h3v1h-3zM1339 786h3v1h-3zM1337 782h1v3h-1zM1343 782h1v3h-1zM1338 781h1v1h-1zM1342 781h1v1h-1zM1338 785h1v1h-1zM1342 785h1v1h-1zM1373 299h9v1h-9zM1377 295h1v9h-1zM1376 296h3v1h-3zM1376 302h3v1h-3zM1374 298h1v3h-1zM1380 298h1v3h-1zM1375 297h1v1h-1zM1379 297h1v1h-1zM1375 301h1v1h-1zM1379 301h1v1h-1zM1373 336h9v1h-9zM1377 332h1v9h-1zM1376 333h3v1h-3zM1376 339h3v1h-3zM1374 335h1v3h-1zM1380 335h1v3h-1zM1375 334h1v1h-1zM1379 334h1v1h-1zM1375 338h1v1h-1zM1379 338h1v1h-1zM1373 373h9v1h-9zM1377 369h1v9h-1zM1376 370h3v1h-3zM1376 376h3v1h-3zM1374 372h1v3h-1zM1380 372h1v3h-1zM1375 371h1v1h-1zM1379 371h1v1h-1zM1375 375h1v1h-1zM1379 375h1v1h-1zM1373 410h9v1h-9zM1377 406h1v9h-1zM1376 407h3v1h-3zM1376 413h3v1h-3zM1374 409h1v3h-1zM1380 409h1v3h-1zM1375 408h1v1h-1zM1379 408h1v1h-1zM1375 412h1v1h-1zM1379 412h1v1h-1zM1373 448h9v1h-9zM1377 444h1v9h-1zM1376 445h3v1h-3zM1376 451h3v1h-3zM1374 447h1v3h-1zM1380 447h1v3h-1zM1375 446h1v1h-1zM1379 446h1v1h-1zM1375 450h1v1h-1zM1379 450h1v1h-1zM1373 485h9v1h-9zM1377 481h1v9h-1zM1376 482h3v1h-3zM1376 488h3v1h-3zM1374 484h1v3h-1zM1380 484h1v3h-1zM1375 483h1v1h-1zM1379 483h1v1h-1zM1375 487h1v1h-1zM1379 487h1v1h-1zM1373 522h9v1h-9zM1377 518h1v9h-1zM1376 519h3v1h-3zM1376 525h3v1h-3zM1374 521h1v3h-1zM1380 521h1v3h-1zM1375 520h1v1h-1zM1379 520h1v1h-1zM1375 524h1v1h-1zM1379 524h1v1h-1zM1373 559h9v1h-9zM1377 555h1v9h-1zM1376 556h3v1h-3zM1376 562h3v1h-3zM1374 558h1v3h-1zM1380 558h1v3h-1zM1375 557h1v1h-1zM1379 557h1v1h-1zM1375 561h1v1h-1zM1379 561h1v1h-1zM1373 596h9v1h-9zM1377 592h1v9h-1zM1376 593h3v1h-3zM1376 599h3v1h-3zM1374 595h1v3h-1zM1380 595h1v3h-1zM1375 594h1v1h-1zM1379 594h1v1h-1zM1375 598h1v1h-1zM1379 598h1v1h-1zM1373 634h9v1h-9zM1377 630h1v9h-1zM1376 631h3v1h-3zM1376 637h3v1h-3zM1374 633h1v3h-1zM1380 633h1v3h-1zM1375 632h1v1h-1zM1379 632h1v1h-1zM1375 636h1v1h-1zM1379 636h1v1h-1zM1373 671h9v1h-9zM1377 667h1v9h-1zM1376 668h3v1h-3zM1376 674h3v1h-3zM1374 670h1v3h-1zM1380 670h1v3h-1zM1375 669h1v1h-1zM1379 669h1v1h-1zM1375 673h1v1h-1zM1379 673h1v1h-1zM1373 708h9v1h-9zM1377 704h1v9h-1zM1376 705h3v1h-3zM1376 711h3v1h-3zM1374 707h1v3h-1zM1380 707h1v3h-1zM1375 706h1v1h-1zM1379 706h1v1h-1zM1375 710h1v1h-1zM1379 710h1v1h-1zM1373 745h9v1h-9zM1377 741h1v9h-1zM1376 742h3v1h-3zM1376 748h3v1h-3zM1374 744h1v3h-1zM1380 744h1v3h-1zM1375 743h1v1h-1zM1379 743h1v1h-1zM1375 747h1v1h-1zM1379 747h1v1h-1zM1410 336h9v1h-9zM1414 332h1v9h-1zM1413 333h3v1h-3zM1413 339h3v1h-3zM1411 335h1v3h-1zM1417 335h1v3h-1zM1412 334h1v1h-1zM1416 334h1v1h-1zM1412 338h1v1h-1zM1416 338h1v1h-1zM1410 373h9v1h-9zM1414 369h1v9h-1zM1413 370h3v1h-3zM1413 376h3v1h-3zM1411 372h1v3h-1zM1417 372h1v3h-1zM1412 371h1v1h-1zM1416 371h1v1h-1zM1412 375h1v1h-1zM1416 375h1v1h-1zM1410 410h9v1h-9zM1414 406h1v9h-1zM1413 407h3v1h-3zM1413 413h3v1h-3zM1411 409h1v3h-1zM1417 409h1v3h-1zM1412 408h1v1h-1zM1416 408h1v1h-1zM1412 412h1v1h-1zM1416 412h1v1h-1zM1410 448h9v1h-9zM1414 444h1v9h-1zM1413 445h3v1h-3zM1413 451h3v1h-3zM1411 447h1v3h-1zM1417 447h1v3h-1zM1412 446h1v1h-1zM1416 446h1v1h-1zM1412 450h1v1h-1zM1416 450h1v1h-1zM1410 485h9v1h-9zM1414 481h1v9h-1zM1413 482h3v1h-3zM1413 488h3v1h-3zM1411 484h1v3h-1zM1417 484h1v3h-1zM1412 483h1v1h-1zM1416 483h1v1h-1zM1412 487h1v1h-1zM1416 487h1v1h-1zM1410 522h9v1h-9zM1414 518h1v9h-1zM1413 519h3v1h-3zM1413 525h3v1h-3zM1411 521h1v3h-1zM1417 521h1v3h-1zM1412 520h1v1h-1zM1416 520h1v1h-1zM1412 524h1v1h-1zM1416 524h1v1h-1zM1410 559h9v1h-9zM1414 555h1v9h-1zM1413 556h3v1h-3zM1413 562h3v1h-3zM1411 558h1v3h-1zM1417 558h1v3h-1zM1412 557h1v1h-1zM1416 557h1v1h-1zM1412 561h1v1h-1zM1416 561h1v1h-1zM1410 596h9v1h-9zM1414 592h1v9h-1zM1413 593h3v1h-3zM1413 599h3v1h-3zM1411 595h1v3h-1zM1417 595h1v3h-1zM1412 594h1v1h-1zM1416 594h1v1h-1zM1412 598h1v1h-1zM1416 598h1v1h-1zM1410 634h9v1h-9zM1414 630h1v9h-1zM1413 631h3v1h-3zM1413 637h3v1h-3zM1411 633h1v3h-1zM1417 633h1v3h-1zM1412 632h1v1h-1zM1416 632h1v1h-1zM1412 636h1v1h-1zM1416 636h1v1h-1zM1410 671h9v1h-9zM1414 667h1v9h-1zM1413 668h3v1h-3zM1413 674h3v1h-3zM1411 670h1v3h-1zM1417 670h1v3h-1zM1412 669h1v1h-1zM1416 669h1v1h-1zM1412 673h1v1h-1zM1416 673h1v1h-1zM1410 708h9v1h-9zM1414 704h1v9h-1zM1413 705h3v1h-3zM1413 711h3v1h-3zM1411 707h1v3h-1zM1417 707h1v3h-1zM1412 706h1v1h-1zM1416 706h1v1h-1zM1412 710h1v1h-1zM1416 710h1v1h-1zM1447 410h9v1h-9zM1451 406h1v9h-1zM1450 407h3v1h-3zM1450 413h3v1h-3zM1448 409h1v3h-1zM1454 409h1v3h-1zM1449 408h1v1h-1zM1453 408h1v1h-1zM1449 412h1v1h-1zM1453 412h1v1h-1zM1447 448h9v1h-9zM1451 444h1v9h-1zM1450 445h3v1h-3zM1450 451h3v1h-3zM1448 447h1v3h-1zM1454 447h1v3h-1zM1449 446h1v1h-1zM1453 446h1v1h-1zM1449 450h1v1h-1zM1453 450h1v1h-1zM1447 485h9v1h-9zM1451 481h1v9h-1zM1450 482h3v1h-3zM1450 488h3v1h-3zM1448 484h1v3h-1zM1454 484h1v3h-1zM1449 483h1v1h-1zM1453 483h1v1h-1zM1449 487h1v1h-1zM1453 487h1v1h-1zM1447 522h9v1h-9zM1451 518h1v9h-1zM1450 519h3v1h-3zM1450 525h3v1h-3zM1448 521h1v3h-1zM1454 521h1v3h-1zM1449 520h1v1h-1zM1453 520h1v1h-1zM1449 524h1v1h-1zM1453 524h1v1h-1zM1447 559h9v1h-9zM1451 555h1v9h-1zM1450 556h3v1h-3zM1450 562h3v1h-3zM1448 558h1v3h-1zM1454 558h1v3h-1zM1449 557h1v1h-1zM1453 557h1v1h-1zM1449 561h1v1h-1zM1453 561h1v1h-1zM1447 596h9v1h-9zM1451 592h1v9h-1zM1450 593h3v1h-3zM1450 599h3v1h-3zM1448 595h1v3h-1zM1454 595h1v3h-1zM1449 594h1v1h-1zM1453 594h1v1h-1zM1449 598h1v1h-1zM1453 598h1v1h-1zM1447 634h9v1h-9zM1451 630h1v9h-1zM1450 631h3v1h-3zM1450 637h3v1h-3zM1448 633h1v3h-1zM1454 633h1v3h-1zM1449 632h1v1h-1zM1453 632h1v1h-1zM1449 636h1v1h-1zM1453 636h1v1h-1zM1404 745h9v1h-9zM1408 741h1v9h-1zM1407 742h3v1h-3zM1407 748h3v1h-3zM1405 744h1v3h-1zM1411 744h1v3h-1zM1406 743h1v1h-1zM1410 743h1v1h-1zM1406 747h1v1h-1zM1410 747h1v1h-1zM1261 187h9v1h-9zM1265 183h1v9h-1zM1264 184h3v1h-3zM1264 190h3v1h-3zM1262 186h1v3h-1zM1268 186h1v3h-1zM1263 185h1v1h-1zM1267 185h1v1h-1zM1263 189h1v1h-1zM1267 189h1v1h-1zM1038 881h9v1h-9zM1042 877h1v9h-1zM1041 878h3v1h-3zM1041 884h3v1h-3zM1039 880h1v3h-1zM1045 880h1v3h-1zM1040 879h1v1h-1zM1044 879h1v1h-1zM1040 883h1v1h-1zM1044 883h1v1h-1zM1447 671h9v1h-9zM1451 667h1v9h-1zM1450 668h3v1h-3zM1450 674h3v1h-3zM1448 670h1v3h-1zM1454 670h1v3h-1zM1449 669h1v1h-1zM1453 669h1v1h-1zM1449 673h1v1h-1zM1453 673h1v1h-1zM1075 156h9v1h-9zM1079 152h1v9h-1zM1078 153h3v1h-3zM1078 159h3v1h-3zM1076 155h1v3h-1zM1082 155h1v3h-1zM1077 154h1v1h-1zM1081 154h1v1h-1zM1077 158h1v1h-1zM1081 158h1v1h-1zM1404 299h9v1h-9zM1408 295h1v9h-1zM1407 296h3v1h-3zM1407 302h3v1h-3zM1405 298h1v3h-1zM1411 298h1v3h-1zM1406 297h1v1h-1zM1410 297h1v1h-1zM1406 301h1v1h-1zM1410 301h1v1h-1zM1336 813h9v1h-9zM1340 809h1v9h-1zM1339 810h3v1h-3zM1339 816h3v1h-3zM1337 812h1v3h-1zM1343 812h1v3h-1zM1338 811h1v1h-1zM1342 811h1v1h-1zM1338 815h1v1h-1zM1342 815h1v1h-1zM1075 888h9v1h-9zM1079 884h1v9h-1zM1078 885h3v1h-3zM1078 891h3v1h-3zM1076 887h1v3h-1zM1082 887h1v3h-1zM1077 886h1v1h-1zM1081 886h1v1h-1zM1077 890h1v1h-1zM1081 890h1v1h-1zM777 671h9v1h-9zM781 667h1v9h-1zM780 668h3v1h-3zM780 674h3v1h-3zM778 670h1v3h-1zM784 670h1v3h-1zM779 669h1v1h-1zM783 669h1v1h-1zM779 673h1v1h-1zM783 673h1v1h-1zM1038 163h9v1h-9zM1042 159h1v9h-1zM1041 160h3v1h-3zM1041 166h3v1h-3zM1039 162h1v3h-1zM1045 162h1v3h-1zM1040 161h1v1h-1zM1044 161h1v1h-1zM1040 165h1v1h-1zM1044 165h1v1h-1zM889 231h9v1h-9zM893 227h1v9h-1zM892 228h3v1h-3zM892 234h3v1h-3zM890 230h1v3h-1zM896 230h1v3h-1zM891 229h1v1h-1zM895 229h1v1h-1zM891 233h1v1h-1zM895 233h1v1h-1zM1478 522h9v1h-9zM1482 518h1v9h-1zM1481 519h3v1h-3zM1481 525h3v1h-3zM1479 521h1v3h-1zM1485 521h1v3h-1zM1480 520h1v1h-1zM1484 520h1v1h-1zM1480 524h1v1h-1zM1484 524h1v1h-1zM1112 156h9v1h-9zM1116 152h1v9h-1zM1115 153h3v1h-3zM1115 159h3v1h-3zM1113 155h1v3h-1zM1119 155h1v3h-1zM1114 154h1v1h-1zM1118 154h1v1h-1zM1114 158h1v1h-1zM1118 158h1v1h-1zM747 522h9v1h-9zM751 518h1v9h-1zM750 519h3v1h-3zM750 525h3v1h-3zM748 521h1v3h-1zM754 521h1v3h-1zM749 520h1v1h-1zM753 520h1v1h-1zM749 524h1v1h-1zM753 524h1v1h-1zM1187 881h9v1h-9zM1191 877h1v9h-1zM1190 878h3v1h-3zM1190 884h3v1h-3zM1188 880h1v3h-1zM1194 880h1v3h-1zM1189 879h1v1h-1zM1193 879h1v1h-1zM1189 883h1v1h-1zM1193 883h1v1h-1zM821 745h9v1h-9zM825 741h1v9h-1zM824 742h3v1h-3zM824 748h3v1h-3zM822 744h1v3h-1zM828 744h1v3h-1zM823 743h1v1h-1zM827 743h1v1h-1zM823 747h1v1h-1zM827 747h1v1h-1zM1187 163h9v1h-9zM1191 159h1v9h-1zM1190 160h3v1h-3zM1190 166h3v1h-3zM1188 162h1v3h-1zM1194 162h1v3h-1zM1189 161h1v1h-1zM1193 161h1v1h-1zM1189 165h1v1h-1zM1193 165h1v1h-1zM1112 888h9v1h-9zM1116 884h1v9h-1zM1115 885h3v1h-3zM1115 891h3v1h-3zM1113 887h1v3h-1zM1119 887h1v3h-1zM1114 886h1v1h-1zM1118 886h1v1h-1zM1114 890h1v1h-1zM1118 890h1v1h-1zM821 299h9v1h-9zM825 295h1v9h-1zM824 296h3v1h-3zM824 302h3v1h-3zM822 298h1v3h-1zM828 298h1v3h-1zM823 297h1v1h-1zM827 297h1v1h-1zM823 301h1v1h-1zM827 301h1v1h-1zM1371 261h9v1h-9zM1375 257h1v9h-1zM1374 258h3v1h-3zM1374 264h3v1h-3zM1372 260h1v3h-1zM1378 260h1v3h-1zM1373 259h1v1h-1zM1377 259h1v1h-1zM1373 263h1v1h-1zM1377 263h1v1h-1zM1447 373h9v1h-9zM1451 369h1v9h-1zM1450 370h3v1h-3zM1450 376h3v1h-3zM1448 372h1v3h-1zM1454 372h1v3h-1zM1449 371h1v1h-1zM1453 371h1v1h-1zM1449 375h1v1h-1zM1453 375h1v1h-1zM777 373h9v1h-9zM781 369h1v9h-1zM780 370h3v1h-3zM780 376h3v1h-3zM778 372h1v3h-1zM784 372h1v3h-1zM779 371h1v1h-1zM783 371h1v1h-1zM779 375h1v1h-1zM783 375h1v1h-1zM753 448h9v1h-9zM757 444h1v9h-1zM756 445h3v1h-3zM756 451h3v1h-3zM754 447h1v3h-1zM760 447h1v3h-1zM755 446h1v1h-1zM759 446h1v1h-1zM755 450h1v1h-1zM759 450h1v1h-1zM963 857h9v1h-9zM967 853h1v9h-1zM966 854h3v1h-3zM966 860h3v1h-3zM964 856h1v3h-1zM970 856h1v3h-1zM965 855h1v1h-1zM969 855h1v1h-1zM965 859h1v1h-1zM969 859h1v1h-1zM854 783h9v1h-9zM858 779h1v9h-1zM857 780h3v1h-3zM857 786h3v1h-3zM855 782h1v3h-1zM861 782h1v3h-1zM856 781h1v1h-1zM860 781h1v1h-1zM856 785h1v1h-1zM860 785h1v1h-1zM1150 156h9v1h-9zM1154 152h1v9h-1zM1153 153h3v1h-3zM1153 159h3v1h-3zM1151 155h1v3h-1zM1157 155h1v3h-1zM1152 154h1v1h-1zM1156 154h1v1h-1zM1152 158h1v1h-1zM1156 158h1v1h-1zM889 813h9v1h-9zM893 809h1v9h-1zM892 810h3v1h-3zM892 816h3v1h-3zM890 812h1v3h-1zM896 812h1v3h-1zM891 811h1v1h-1zM895 811h1v1h-1zM891 815h1v1h-1zM895 815h1v1h-1zM963 187h9v1h-9zM967 183h1v9h-1zM966 184h3v1h-3zM966 190h3v1h-3zM964 186h1v3h-1zM970 186h1v3h-1zM965 185h1v1h-1zM969 185h1v1h-1zM965 189h1v1h-1zM969 189h1v1h-1zM852 263h9v1h-9zM856 259h1v9h-1zM855 260h3v1h-3zM855 266h3v1h-3zM853 262h1v3h-1zM859 262h1v3h-1zM854 261h1v1h-1zM858 261h1v1h-1zM854 265h1v1h-1zM858 265h1v1h-1zM1471 448h9v1h-9zM1475 444h1v9h-1zM1474 445h3v1h-3zM1474 451h3v1h-3zM1472 447h1v3h-1zM1478 447h1v3h-1zM1473 446h1v1h-1zM1477 446h1v1h-1zM1473 450h1v1h-1zM1477 450h1v1h-1zM1336 231h9v1h-9zM1340 227h1v9h-1zM1339 228h3v1h-3zM1339 234h3v1h-3zM1337 230h1v3h-1zM1343 230h1v3h-1zM1338 229h1v1h-1zM1342 229h1v1h-1zM1338 233h1v1h-1zM1342 233h1v1h-1zM1150 888h9v1h-9zM1154 884h1v9h-1zM1153 885h3v1h-3zM1153 891h3v1h-3zM1151 887h1v3h-1zM1157 887h1v3h-1zM1152 886h1v1h-1zM1156 886h1v1h-1zM1152 890h1v1h-1zM1156 890h1v1h-1zM753 596h9v1h-9zM757 592h1v9h-1zM756 593h3v1h-3zM756 599h3v1h-3zM754 595h1v3h-1zM760 595h1v3h-1zM755 594h1v1h-1zM759 594h1v1h-1zM755 598h1v1h-1zM759 598h1v1h-1zM1373 781h9v1h-9zM1377 777h1v9h-1zM1376 778h3v1h-3zM1376 784h3v1h-3zM1374 780h1v3h-1zM1380 780h1v3h-1zM1375 779h1v1h-1zM1379 779h1v1h-1zM1375 783h1v1h-1zM1379 783h1v1h-1zM1478 485h9v1h-9zM1482 481h1v9h-1zM1481 482h3v1h-3zM1481 488h3v1h-3zM1479 484h1v3h-1zM1485 484h1v3h-1zM1480 483h1v1h-1zM1484 483h1v1h-1zM1480 487h1v1h-1zM1484 487h1v1h-1zM1478 559h9v1h-9zM1482 555h1v9h-1zM1481 556h3v1h-3zM1481 562h3v1h-3zM1479 558h1v3h-1zM1485 558h1v3h-1zM1480 557h1v1h-1zM1484 557h1v1h-1zM1480 561h1v1h-1zM1484 561h1v1h-1zM1471 596h9v1h-9zM1475 592h1v9h-1zM1474 593h3v1h-3zM1474 599h3v1h-3zM1472 595h1v3h-1zM1478 595h1v3h-1zM1473 594h1v1h-1zM1477 594h1v1h-1zM1473 598h1v1h-1zM1477 598h1v1h-1zM747 559h9v1h-9zM751 555h1v9h-1zM750 556h3v1h-3zM750 562h3v1h-3zM748 558h1v3h-1zM754 558h1v3h-1zM749 557h1v1h-1zM753 557h1v1h-1zM749 561h1v1h-1zM753 561h1v1h-1zM747 485h9v1h-9zM751 481h1v9h-1zM750 482h3v1h-3zM750 488h3v1h-3zM748 484h1v3h-1zM754 484h1v3h-1zM749 483h1v1h-1zM753 483h1v1h-1zM749 487h1v1h-1zM753 487h1v1h-1zM1261 857h9v1h-9zM1265 853h1v9h-1zM1264 854h3v1h-3zM1264 860h3v1h-3zM1262 856h1v3h-1zM1268 856h1v3h-1zM1263 855h1v1h-1zM1267 855h1v1h-1zM1263 859h1v1h-1zM1267 859h1v1h-1z" fill="#ff5f00"/>
<text x="839.8" y="992.7" fill="#ff00ff" font-size="13.5" textLength="555.2" lengthAdjust="spacingAndGlyphs" >MOGAS STORAGE TANK 63.7mØ x 16.5m ( TK-6058 AND TK-6059 ) PILING LAYOUT PLAN</text>
<text x="1101.7" y="1006.0" fill="#00ff00" font-size="6" textLength="29.0" lengthAdjust="spacingAndGlyphs" >SCALE 1:300</text>
<text x="1611.6" y="769.5" fill="#00ff00" font-size="11" textLength="34.0" lengthAdjust="spacingAndGlyphs" >LEGEND</text>
<circle cx="1616.5" cy="783.5" r="5.4" fill="none" stroke="#00ff00" stroke-width="1"/>
<line x1="1626.0" y1="784.5" x2="1630.0" y2="784.5" stroke="#00ff00" stroke-width="1"/>
<text x="1633.0" y="786.0" fill="#00ff00" font-size="8" textLength="14.0" lengthAdjust="spacingAndGlyphs" >450</text>
<text x="1611.0" y="805.0" fill="#00ff00" font-size="8" textLength="36.0" lengthAdjust="spacingAndGlyphs" >TOTAL NOS</text>
<line x1="686.0" y1="1067.5" x2="1163.0" y2="1067.5" stroke="#ff0000" stroke-width="1"/>
<line x1="686.0" y1="1085.5" x2="1163.0" y2="1085.5" stroke="#ff0000" stroke-width="1"/>
<line x1="686.0" y1="1104.5" x2="1163.0" y2="1104.5" stroke="#ff0000" stroke-width="1"/>
<line x1="686.0" y1="1122.5" x2="1163.0" y2="1122.5" stroke="#ff0000" stroke-width="1"/>
<line x1="1071.0" y1="1049.5" x2="1163.0" y2="1049.5" stroke="#ff0000" stroke-width="1"/>
<line x1="686.5" y1="1067.0" x2="686.5" y2="1123.0" stroke="#ff0000" stroke-width="1"/>
<line x1="750.5" y1="1067.0" x2="750.5" y2="1123.0" stroke="#ff0000" stroke-width="1"/>
<line x1="828.5" y1="1067.0" x2="828.5" y2="1123.0" stroke="#ff0000" stroke-width="1"/>
<line x1="988.5" y1="1067.0" x2="988.5" y2="1123.0" stroke="#ff0000" stroke-width="1"/>
<line x1="1162.5" y1="1049.0" x2="1162.5" y2="1123.0" stroke="#ff0000" stroke-width="1"/>
<line x1="1071.5" y1="1049.0" x2="1071.5" y2="1123.0" stroke="#ff0000" stroke-width="1"/>
<line x1="1116.5" y1="1067.0" x2="1116.5" y2="1123.0" stroke="#ff0000" stroke-width="1"/>
<text x="699.5" y="1080.3" fill="#00ff00" font-size="8.5" textLength="37.8" lengthAdjust="spacingAndGlyphs" >TANK NO.</text>
<text x="770.0" y="1080.3" fill="#00ff00" font-size="8.5" textLength="38.0" lengthAdjust="spacingAndGlyphs" >DIAMETER</text>
<text x="878.3" y="1080.3" fill="#00ff00" font-size="8.5" textLength="59.7" lengthAdjust="spacingAndGlyphs" >SETTING POINT</text>
<text x="1003.6" y="1080.3" fill="#00ff00" font-size="8.5" textLength="52.0" lengthAdjust="spacingAndGlyphs" >PILE LENGTH</text>
<text x="1085.7" y="1080.3" fill="#00ff00" font-size="8.5" textLength="16.5" lengthAdjust="spacingAndGlyphs" >PDA</text>
<text x="1133.3" y="1080.3" fill="#00ff00" font-size="8.5" textLength="12.4" lengthAdjust="spacingAndGlyphs" >PIT</text>
<text x="1089.8" y="1062.5" fill="#00ff00" font-size="8.5" textLength="53.8" lengthAdjust="spacingAndGlyphs" >PILE TESTING</text>
<text x="706.2" y="1098.0" fill="#00ff00" font-size="7" textLength="23.8" lengthAdjust="spacingAndGlyphs" >TK-6058</text>
<text x="777.6" y="1098.0" fill="#00ff00" font-size="7" textLength="22.5" lengthAdjust="spacingAndGlyphs" >63.70m</text>
<text x="856.6" y="1098.0" fill="#00ff00" font-size="7" textLength="102.6" lengthAdjust="spacingAndGlyphs" >W = 12713.000,   S = 20745.510</text>
<text x="1023.9" y="1098.0" fill="#00ff00" font-size="7" textLength="11.5" lengthAdjust="spacingAndGlyphs" >12m</text>
<text x="1080.4" y="1098.0" fill="#00ff00" font-size="7" textLength="26.5" lengthAdjust="spacingAndGlyphs" >10 NOS.</text>
<text x="1126.5" y="1098.0" fill="#00ff00" font-size="7" textLength="26.0" lengthAdjust="spacingAndGlyphs" >20 NOS.</text>
<text x="706.2" y="1115.7" fill="#00ff00" font-size="7" textLength="23.8" lengthAdjust="spacingAndGlyphs" >TK-6059</text>
<text x="777.6" y="1115.7" fill="#00ff00" font-size="7" textLength="22.5" lengthAdjust="spacingAndGlyphs" >63.70m</text>
<text x="856.6" y="1115.7" fill="#00ff00" font-size="7" textLength="102.6" lengthAdjust="spacingAndGlyphs" >W = 12781.890,   S = 20666.250</text>
<text x="1023.9" y="1115.7" fill="#00ff00" font-size="7" textLength="11.5" lengthAdjust="spacingAndGlyphs" >12m</text>
<text x="1080.4" y="1115.7" fill="#00ff00" font-size="7" textLength="26.5" lengthAdjust="spacingAndGlyphs" >10 NOS.</text>
<text x="1126.5" y="1115.7" fill="#00ff00" font-size="7" textLength="25.0" lengthAdjust="spacingAndGlyphs" >20 NOS</text>
</svg>
<div class="panel"><div class="inner"></div>
 <div class="titlebar"></div><div style="position:absolute;left:0;top:1px;width:560px;height:1132px;">
 <div class="icon"><svg width="32" height="32" viewBox="0 0 32 32"><circle cx="16.5" cy="13.5" r="4.8" fill="none" stroke="#dfe8f5" stroke-width="0.7"/><path d="M9 25 L16 15" stroke="#dfe8f5" stroke-width="0.6"/><text x="16" y="24" fill="#fff" stroke="#c8b8a0" stroke-width="0.4" font-size="14" font-weight="bold" text-anchor="middle" font-family="Liberation Sans" transform="translate(16 24) scale(0.8 1.25) translate(-16 -24)">CAD</text></svg></div>
 <div class="abs" id="t_title" style="left:55px;top:15px;font-size:25px;transform:scaleX(0.926);transform-origin:0 0;color:#000;">Shape list</div>
 <svg class="abs" style="left:516px;top:14px" width="22" height="22" viewBox="0 0 22 22"><path d="M2.5 2.5 L19.5 19.5 M19.5 2.5 L2.5 19.5" stroke="#000" stroke-width="2" stroke-linecap="round"/></svg>
 <div class="abs" id="t_all" style="left:203.5px;top:74.5px;font-size:38px;transform:scaleX(0.936);transform-origin:0 0;color:#000;">All shapes</div>
 <div class="list"></div>
 <div class="abs" id="t_pile" style="left:17.5px;top:167.3px;font-size:31px;transform:scaleX(1.054);transform-origin:0 0;color:#000;">pile point type 1</div>
 <div class="abs" id="t_num" style="left:17.5px;top:212.7px;font-size:25px;transform:scaleX(0.971);transform-origin:0 0;color:#cc6410;">Number: 333</div>
 <div class="btn" style="left:394px;top:168px;width:68px;height:50px;border-color:#1f7ef2;"></div>
 <div class="abs" id="t_view" style="left:402.5px;top:183px;font-size:25.5px;transform:scaleX(0.94);transform-origin:0 0;color:#1f7ef2;">View</div>
 <div class="btn" style="left:474px;top:168px;width:78px;height:50px;border-color:#d9421a;"></div>
 <div class="abs" id="t_del" style="left:479px;top:183px;font-size:25.5px;transform:scaleX(0.955);transform-origin:0 0;color:#d9421a;">Delete</div>
 <div style="position:absolute;left:3px;top:243px;width:554px;height:2px;background:#a2a2a2;"></div>
 <div class="btn" style="left:199px;top:981px;width:160px;height:44px;border:1px solid #cfcfcf;border-radius:5px;background:#fdfdfd;"></div>
 <div class="abs" id="t_exp" style="left:206px;top:995px;font-size:23.5px;transform:scaleX(0.947);transform-origin:0 0;color:#000;">Export to excel</div>
 <div class="abs" id="t_p1" style="left:6.5px;top:1049px;font-size:26px;transform:scaleX(0.9485);transform-origin:0 0;color:#000;"><b style="color:#d06c12">Prompt:</b>Double click item or click 'view' button to</div>
 <div class="abs" id="t_p2" style="left:7.5px;top:1087px;font-size:26px;transform:scaleX(0.904);transform-origin:0 0;color:#000;">see selected shape positions</div>
</div></div>
</body></html>
